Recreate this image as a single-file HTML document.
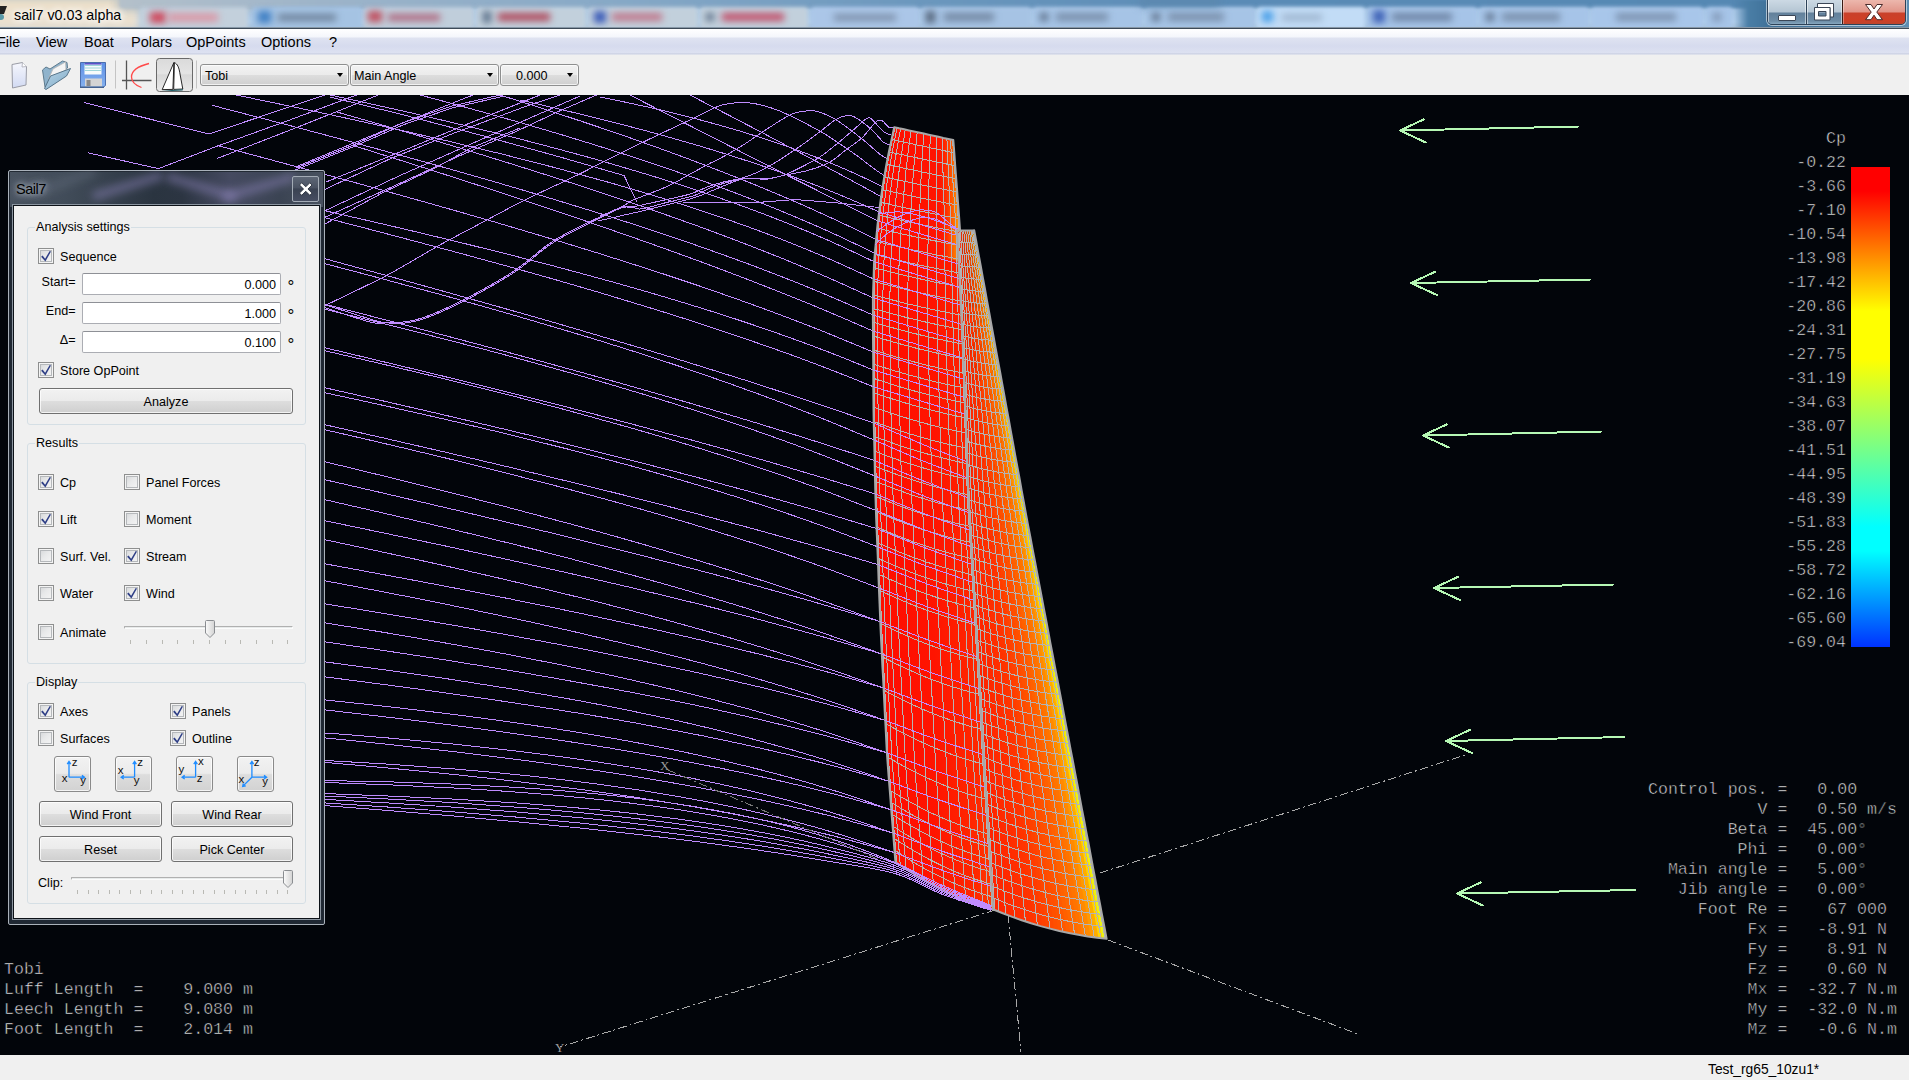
<!DOCTYPE html>
<html lang="en">
<head>
<meta charset="utf-8">
<title>sail7 v0.03 alpha</title>
<style>
*{box-sizing:border-box;margin:0;padding:0}
html,body{width:1909px;height:1080px;overflow:hidden;background:#f0f0f0;font-family:"Liberation Sans",sans-serif;color:#000}
.abs{position:absolute}
#titlebar{position:absolute;left:0;top:0;width:1909px;height:29px;overflow:hidden;
  background:linear-gradient(180deg,#7fa3c4 0,#8fb2d3 7px,#a9c8e6 10px,#b3d0ec 22px,#a9c4de 27px,#a9c4de 29px)}
#titlebar .blob{position:absolute;filter:blur(3.5px)}
#titlebar .tab{position:absolute;top:7px;height:22px;border-radius:3px 3px 0 0;filter:blur(2px)}
#titletext{position:absolute;left:14px;top:6px;font-size:14.3px;line-height:18px;color:#000;white-space:nowrap;text-shadow:0 0 6px #fff,0 0 8px #fff,0 0 10px #fff}
#menubar{position:absolute;left:0;top:29px;width:1909px;height:26px;
  background:linear-gradient(180deg,#ffffff 0,#f4f6fb 8px,#dfe3f1 9px,#d6dbee 17px,#dde1f1 24px,#c3c9dc 25px,#f8f8fa 26px)}
#menubar span{position:absolute;top:4px;font-size:14.5px;line-height:18px;white-space:nowrap}
#toolbar{position:absolute;left:0;top:55px;width:1909px;height:40px;background:#f0f0f0}
.combo{position:absolute;top:9px;height:22px;border:1px solid #8e8f8f;border-radius:3px;
  background:linear-gradient(180deg,#f2f2f2 0,#ebebeb 50%,#dddddd 51%,#cfcfcf 100%);font-size:12.6px;line-height:22px;white-space:nowrap;box-shadow:inset 0 0 0 1px rgba(255,255,255,.7)}
.combo i{position:absolute;top:8px;width:0;height:0;border-left:3.5px solid transparent;border-right:3.5px solid transparent;border-top:4.5px solid #000}
#canvas{position:absolute;left:0;top:95px;width:1909px;height:960px;background:#02050a;overflow:hidden}
#statusbar{position:absolute;left:0;top:1055px;width:1909px;height:25px;background:#f0f0f0;font-size:13.8px}
.mono{font-family:"Liberation Mono",monospace;font-size:16.6px;fill:#e8e8e8;stroke:#02050a;stroke-width:.55px;white-space:pre}
/* dialog */
#dlg{position:absolute;left:8px;top:170px;width:317px;height:755px;border:1px solid #a9b1ba;border-radius:2px;overflow:hidden;
 background:linear-gradient(#1f2833,#1f2833) no-repeat 0 36px/100% 100%,linear-gradient(90deg,#48525f 0,#414c59 18%,#2a3440 46%,#2c3542 55%,#454a60 70%,#3b4453 86%,#48515f 100%);box-shadow:inset 0 0 0 1px #222a34}
#dlgtitle{position:absolute;left:7px;top:9px;font-size:14.5px;letter-spacing:-.5px;line-height:18px;color:#000;text-shadow:0 0 5px #aeb6c0,0 0 8px #aeb6c0,0 0 12px #8e98a6}
#dlgclose{position:absolute;left:283px;top:5px;width:27px;height:26px;border:1px solid #a3abb5;border-radius:2px;background:linear-gradient(180deg,#5d6675 0,#4a5262 45%,#3a4252 50%,#474e62 100%)}
#dlgbody{position:absolute;left:4px;top:34px;width:307px;height:714px;background:#f0f0f0;border:1px solid #0d1218;outline:1px solid #8b95a0;font-size:12.6px}
.grp{position:absolute;left:14px;width:279px;border:1px solid #d5dfe5;border-radius:3px}
.gt{position:absolute;left:23px;background:#f0f0f0;padding:0 1px;line-height:16px;white-space:nowrap;margin-top:1px}
.cb{position:absolute;width:16px;height:16px;border:1px solid #8e8f8f;background:linear-gradient(135deg,#d2d4d6 0,#e8e9ea 45%,#f6f6f6 100%);box-shadow:inset 0 0 0 1px #f4f4f4,inset 0 0 0 2px #b5b8bb}
.cb svg{position:absolute;left:-1px;top:-1px}
.lb{position:absolute;line-height:16px;white-space:nowrap;margin-top:1px}
.inp{position:absolute;left:70px;width:199px;height:22px;border:1px solid #abadb3;border-top-color:#8e9096;border-radius:2px;background:#fff;text-align:right;padding-right:4px;line-height:23px}
.btn{position:absolute;height:26px;border:1px solid #707070;border-radius:3px;text-align:center;line-height:26px;white-space:nowrap;
  background:linear-gradient(180deg,#f2f2f2 0,#ebebeb 48%,#dddddd 52%,#cfcfcf 100%);box-shadow:inset 0 0 0 1px rgba(255,255,255,.75)}
.vb{position:absolute;top:551px;width:37px;height:36px;border:1px solid #8a8a8a;border-radius:3px;background:linear-gradient(180deg,#f2f2f2 0,#ebebeb 48%,#dddddd 52%,#d2d2d2 100%);box-shadow:inset 0 0 0 1px rgba(255,255,255,.75)}
.vb svg{position:absolute;left:0;top:0}
.trk{position:absolute;height:3px;border:1px solid #b0b0b0;border-bottom-color:#fcfcfc;border-right-color:#fcfcfc;background:#e7eaea;border-radius:1px}
.hdl{position:absolute;width:10px;height:18px}
.tick{position:absolute;width:1px;height:4px;background:#b9b9b4}
.stk{position:absolute;height:9px;background:rgba(140,132,185,.5);filter:blur(4px);transform-origin:0 50%}
</style>
</head>
<body>
<div id="titlebar">
  <div class="blob" style="left:-10px;top:-4px;width:150px;height:36px;background:linear-gradient(180deg,#e9dcc4 0,#efe3cf 50%,#e4dccf 100%);filter:blur(5px)"></div>
  <div class="blob" style="left:118px;top:-4px;width:150px;height:14px;background:#a9b9c6;filter:blur(5px)"></div>
  <div class="abs" style="left:120px;top:-3px;width:1800px;height:11px;background:linear-gradient(90deg,#b4c0ca 0,#9db4c9 200px,#86a8c6 500px,#6b97bd 800px,#5a8bb6 1100px,#5487b2 1700px);filter:blur(1.5px)"></div>
  <div class="tab" style="left:140px;width:108px;background:#c3d0dc"></div>
  <div class="blob" style="left:150px;top:12px;width:16px;height:11px;background:#cf4a5e"></div>
  <div class="blob" style="left:168px;top:13px;width:50px;height:9px;background:#d99aa8"></div>
  <div class="tab" style="left:252px;width:110px;background:#a5c3e3"></div>
  <div class="blob" style="left:258px;top:11px;width:13px;height:12px;background:#3f7fc4"></div>
  <div class="blob" style="left:278px;top:14px;width:58px;height:7px;background:#6f849c"></div>
  <div class="tab" style="left:364px;width:110px;background:#c0cedb"></div>
  <div class="blob" style="left:368px;top:11px;width:14px;height:11px;background:#c05060"></div>
  <div class="blob" style="left:388px;top:14px;width:52px;height:7px;background:#b06a80"></div>
  <div class="tab" style="left:476px;width:110px;background:#c2d0dc"></div>
  <div class="blob" style="left:483px;top:11px;width:8px;height:12px;background:#5a6f88"></div>
  <div class="blob" style="left:498px;top:13px;width:52px;height:8px;background:#b04a5c"></div>
  <div class="tab" style="left:588px;width:110px;background:#c2d0dc"></div>
  <div class="blob" style="left:594px;top:11px;width:12px;height:12px;background:#3b5bb8"></div>
  <div class="blob" style="left:612px;top:13px;width:50px;height:8px;background:#c0788c"></div>
  <div class="tab" style="left:700px;width:108px;background:#c2d0dc"></div>
  <div class="blob" style="left:706px;top:13px;width:8px;height:8px;background:#5d7088"></div>
  <div class="blob" style="left:722px;top:13px;width:62px;height:8px;background:#c2506a"></div>
  <div class="tab" style="left:811px;width:108px;background:#abc6e8"></div>
  <div class="blob" style="left:834px;top:14px;width:62px;height:7px;background:#7f93ad"></div>
  <div class="tab" style="left:921px;width:110px;background:#a6c3e4"></div>
  <div class="blob" style="left:926px;top:11px;width:9px;height:12px;background:#55657a"></div>
  <div class="blob" style="left:944px;top:13px;width:50px;height:8px;background:#7489a4"></div>
  <div class="tab" style="left:1033px;width:110px;background:#a6c4e6"></div>
  <div class="blob" style="left:1040px;top:13px;width:8px;height:8px;background:#5d7088"></div>
  <div class="blob" style="left:1056px;top:13px;width:52px;height:8px;background:#7a90ac"></div>
  <div class="tab" style="left:1145px;width:110px;background:#a6c4e6"></div>
  <div class="blob" style="left:1152px;top:13px;width:8px;height:8px;background:#5d7088"></div>
  <div class="blob" style="left:1168px;top:13px;width:56px;height:8px;background:#7a90ac"></div>
  <div class="blob" style="left:1140px;top:-4px;width:80px;height:10px;background:#5c88ae;filter:blur(4px)"></div>
  <div class="tab" style="left:1257px;width:108px;background:#c2dcf6"></div>
  <div class="blob" style="left:1262px;top:11px;width:11px;height:11px;background:#4aa0e8"></div>
  <div class="blob" style="left:1282px;top:14px;width:40px;height:7px;background:#9fb6d0"></div>
  <div class="tab" style="left:1367px;width:110px;background:#a6c4e8"></div>
  <div class="blob" style="left:1373px;top:10px;width:12px;height:13px;background:#3f63b8"></div>
  <div class="blob" style="left:1392px;top:13px;width:60px;height:8px;background:#6f86a6"></div>
  <div class="tab" style="left:1479px;width:110px;background:#a6c4e8"></div>
  <div class="blob" style="left:1486px;top:13px;width:8px;height:8px;background:#5d7088"></div>
  <div class="blob" style="left:1502px;top:13px;width:58px;height:8px;background:#7a90ac"></div>
  <div class="tab" style="left:1591px;width:112px;background:#a8c6ea"></div>
  <div class="blob" style="left:1616px;top:13px;width:60px;height:8px;background:#7d93b0"></div>
  <div class="tab" style="left:1706px;width:26px;background:#a6c4e8"></div>
  <div class="blob" style="left:1713px;top:13px;width:8px;height:8px;background:#7d93b0"></div>
  <div class="abs" style="left:1734px;top:0;width:180px;height:29px;background:linear-gradient(90deg,rgba(70,120,160,0) 0,#4a7ea6 14px,#3d6f97 40px,#5f8fb3 100%);filter:blur(1px)"></div>
  <div class="abs" style="left:0;top:27px;width:1909px;height:2px;background:linear-gradient(180deg,#8797a6 0,#8797a6 1px,#3d4a58 1px,#3d4a58 2px)"></div>
  <div id="titletext">sail7 v0.03 alpha</div>
  <svg class="abs" style="left:0;top:0" width="14" height="29"><path d="M0 6 L7 6 L4 14 L0 14Z" fill="#222"/><circle cx="1" cy="17" r="3" fill="#5a9aa8"/></svg>
  <!-- window buttons -->
  <div class="abs" style="left:1767px;top:-4px;width:139px;height:29px;border:1px solid #2d4258;border-radius:0 0 5px 5px;overflow:hidden;box-shadow:0 0 0 1px rgba(255,255,255,.55)">
    <div class="abs" style="left:0;top:0;width:38px;height:28px;background:linear-gradient(180deg,#d2dee8 0,#b4c5d3 15px,#62809b 16px,#6d8ca6 24px,#8fb0c8 28px);box-shadow:inset 0 0 0 1px rgba(255,255,255,.5)"></div>
    <div class="abs" style="left:38px;top:0;width:1px;height:28px;background:#2d4258"></div>
    <div class="abs" style="left:39px;top:0;width:35px;height:28px;background:linear-gradient(180deg,#d2dee8 0,#b4c5d3 15px,#62809b 16px,#6d8ca6 24px,#8fb0c8 28px);box-shadow:inset 0 0 0 1px rgba(255,255,255,.5)"></div>
    <div class="abs" style="left:74px;top:0;width:1px;height:28px;background:#3a1a14"></div>
    <div class="abs" style="left:75px;top:0;width:63px;height:28px;background:linear-gradient(180deg,#efc0b6 0,#e19488 15px,#c9412b 16px,#cf3f26 23px,#b9462f 28px);box-shadow:inset 0 0 0 1px rgba(255,255,255,.35)"></div>
    <svg class="abs" style="left:0;top:0" width="139" height="29" viewBox="0 0 139 29">
      <rect x="10.5" y="18.5" width="17" height="5" rx="0.5" fill="#fff" stroke="#3b4656" stroke-width="1"/>
      <path d="M49.500 6.500h16v13.500h-3.500v-9.500h-12.500z" fill="#fff" stroke="#3b4656" stroke-width="1" stroke-linejoin="round"/>
      <path d="M46.500 10.500h15.500v12.500h-15.500z M50.500 14.500v4.500h7.500v-4.500z" fill="#fff" fill-rule="evenodd" stroke="#3b4656" stroke-width="1" stroke-linejoin="round"/>
      <path d="M97.500 7.500h5.500l3 4.500 3-4.500h5.500l-5.700 7.600 5.700 7.600h-5.500l-3-4.500-3 4.500h-5.500l5.700-7.600z" fill="#fff" stroke="#4a2a2a" stroke-width="1" stroke-linejoin="round"/>
    </svg>
  </div>
</div>
<div id="menubar">
  <span style="left:-3px">File</span><span style="left:36px">View</span><span style="left:84px">Boat</span><span style="left:131px">Polars</span><span style="left:186px">OpPoints</span><span style="left:261px">Options</span><span style="left:329px">?</span>
</div>
<div id="toolbar">
  <svg class="abs" style="left:0;top:0" width="200" height="40" viewBox="0 55 200 40">
    <defs>
      <linearGradient id="gdoc" x1="0" y1="0" x2="0" y2="1"><stop offset="0" stop-color="#f6f7fd"/><stop offset="1" stop-color="#d2daf2"/></linearGradient>
      <linearGradient id="gfold" x1="0" y1="0" x2="1" y2="1"><stop offset="0" stop-color="#b9d6e8"/><stop offset="1" stop-color="#7fa9c6"/></linearGradient>
      <linearGradient id="gflop" x1="0" y1="0" x2="0" y2="1"><stop offset="0" stop-color="#5d8fe6"/><stop offset="1" stop-color="#86b2ee"/></linearGradient>
      <linearGradient id="gbtn" x1="0" y1="0" x2="0" y2="1"><stop offset="0" stop-color="#dadada"/><stop offset=".45" stop-color="#e4e4e4"/><stop offset=".5" stop-color="#d8d8d8"/><stop offset="1" stop-color="#e9e9e9"/></linearGradient>
    </defs>
    <!-- new -->
    <path d="M12 64.500 L22.500 62.500 L26.500 66.500 L26 85 L12.500 88 Z" fill="url(#gdoc)" stroke="#9a9ca6" stroke-width="1"/>
    <path d="M22.500 62.500 L22 67 L26.500 66.500" fill="#fff" stroke="#a8aab4" stroke-width=".8"/>
    <!-- open -->
    <path d="M42.500 70 L46 67 L50 69 L62.500 61 L67 62.500 L67.500 68 L45 87 Z" fill="#8fb3cc" stroke="#5f7b8e" stroke-width="1"/>
    <path d="M48.500 79 L53 69 L65.500 62 L66 70 Z" fill="#f4f4f4" stroke="#b8b8b8" stroke-width=".8"/>
    <path d="M44.500 88.500 L50.500 76 L70.500 68.500 L66.500 76 L46 89.500 Z" fill="url(#gfold)" stroke="#56748a" stroke-width="1"/>
    <!-- save -->
    <path d="M80.500 62.500 H105.500 V85.500 L103 87.500 H80.500 Z" fill="url(#gflop)" stroke="#4c6fae" stroke-width="1"/>
    <rect x="84.500" y="63" width="17" height="11.500" fill="#f7fbfb"/>
    <path d="M84.500 65.500h17M84.500 68h17M84.500 70.500h17" stroke="#9fd6da" stroke-width="1"/>
    <rect x="84.500" y="63" width="17" height="1.600" fill="#5a52c8"/>
    <rect x="85" y="78.500" width="17" height="8" fill="#d4d4d4"/>
    <rect x="86.500" y="80" width="4" height="6" fill="#8a8a8a"/>
    <rect x="80" y="86.500" width="24" height="1.500" fill="#44628f"/>
    <!-- sep -->
    <path d="M115.500 60.500V88.500" stroke="#c4c4c4" stroke-width="1"/>
    <!-- polar -->
    <path d="M126.500 60.500V89.500M122 80.500H151.500" stroke="#555" stroke-width="1.300" fill="none"/>
    <path d="M149 63.500 C139 66 131.500 70 131.500 77 C131.500 83 136 85.500 141.500 87.500" stroke="#ff4a4a" stroke-width="1.300" fill="none"/>
    <!-- sail button -->
    <rect x="156.500" y="58.500" width="36" height="33" rx="3" fill="url(#gbtn)" stroke="#6a6a6a" stroke-width="1"/>
    <path d="M173.900 62.500 L162.200 89.600 L172.900 89.400 Z" fill="#fff" stroke="#111" stroke-width=".9" stroke-linejoin="round"/>
    <path d="M174.400 62.600 C177.500 64 179 67 180.200 75 L182.800 89 L173.700 89.400 Z" fill="#fff" stroke="#111" stroke-width=".9" stroke-linejoin="round"/>
    <path d="M161.800 90.300 L172 90 L183.200 89.300 L182.500 90.600 L172 91 Z" fill="#1d5d66"/>
    <path d="M196.500 60.500V88.500" stroke="#c4c4c4" stroke-width="1"/>
  </svg>
  <div class="combo" style="left:200px;width:149px;padding-left:4px">Tobi<i style="left:136px"></i></div>
  <div class="combo" style="left:350px;width:149px;padding-left:3px">Main Angle<i style="left:136px"></i></div>
  <div class="combo" style="left:500px;width:79px;padding-left:15px">0.000<i style="left:66px"></i></div>
</div>
<div id="statusbar"><span class="abs" style="left:1708px;top:7px;line-height:16px;white-space:nowrap">Test_rg65_10zu1*</span></div>
<div id="canvas">
<svg id="cv" width="1909" height="960" viewBox="0 95 1909 960" style="position:absolute;left:0;top:0">
<defs>
<linearGradient id="gleg" x1="0" y1="0" x2="0" y2="1">
<stop offset="0" stop-color="#ff0000"/><stop offset="0.05" stop-color="#ff0000"/>
<stop offset="0.30" stop-color="#ffff00"/><stop offset="0.40" stop-color="#ffff00"/>
<stop offset="0.75" stop-color="#00ffff"/><stop offset="0.80" stop-color="#00ffff"/>
<stop offset="1" stop-color="#0032ff"/></linearGradient>
<linearGradient id="gs1" gradientUnits="userSpaceOnUse" x1="873" y1="0" x2="995" y2="0">
<stop offset="0" stop-color="#ff0c00"/><stop offset="0.5" stop-color="#ff1400"/><stop offset="0.85" stop-color="#ff2800"/><stop offset="1" stop-color="#ff3c00"/></linearGradient>
<linearGradient id="gs1b" gradientUnits="userSpaceOnUse" x1="940" y1="0" x2="960" y2="0">
<stop offset="0" stop-color="#ff3000" stop-opacity="0"/><stop offset="0.6" stop-color="#ff6a00" stop-opacity=".8"/><stop offset="1" stop-color="#ffa800"/></linearGradient>
</defs>
<path d="M894.7 852.6C884.2 849.8 852.6 840.8 831.6 835.5C810.6 830.3 789.6 825.6 768.6 821.1C747.5 816.7 726.5 812.7 705.5 808.9C684.5 805.1 663.5 801.7 642.5 798.4C621.5 795.1 600.4 792.2 579.4 789.3C558.4 786.5 537.4 783.9 516.4 781.4C495.4 778.9 474.3 776.6 453.3 774.4C432.3 772.2 411.3 770.2 390.3 768.2C369.3 766.2 348.3 764.4 327.2 762.6C306.2 760.8 285.2 759.1 264.2 757.5C243.2 755.8 222.2 754.3 201.1 752.8C180.1 751.3 159.1 749.8 138.1 748.4C117.1 747.0 96.1 745.6 75.0 744.3C54.0 742.9 22.5 741.0 12.0 740.4M894.7 852.6C884.2 849.1 852.6 838.1 831.6 831.9C810.6 825.6 789.6 820.1 768.6 815.1C747.5 810.0 726.5 805.6 705.5 801.5C684.5 797.5 663.5 793.9 642.5 790.6C621.5 787.3 600.4 784.4 579.4 781.8C558.4 779.1 537.4 776.8 516.4 774.6C495.4 772.5 474.3 770.6 453.3 768.9C432.3 767.2 411.3 765.7 390.3 764.3C369.3 762.9 348.3 761.7 327.2 760.6C306.2 759.5 285.2 758.5 264.2 757.6C243.2 756.7 222.2 755.9 201.1 755.2C180.1 754.5 159.1 753.9 138.1 753.3C117.1 752.8 96.1 752.3 75.0 751.9C54.0 751.4 22.5 750.9 12.0 750.7M893.1 833.0C882.6 830.1 851.2 821.2 830.2 815.9C809.2 810.6 788.2 805.8 767.2 801.2C746.3 796.7 725.3 792.5 704.3 788.6C683.3 784.6 662.3 781.0 641.4 777.6C620.4 774.1 599.4 770.9 578.4 767.9C557.4 764.8 536.5 762.0 515.5 759.3C494.5 756.6 473.5 754.0 452.6 751.5C431.6 749.1 410.6 746.8 389.6 744.5C368.6 742.3 347.7 740.1 326.7 738.1C305.7 736.0 284.7 734.0 263.7 732.1C242.8 730.1 221.8 728.3 200.8 726.5C179.8 724.6 158.9 722.9 137.9 721.2C116.9 719.4 95.9 717.7 74.9 716.1C54.0 714.4 22.5 712.0 12.0 711.2M893.1 833.0C882.6 829.5 851.2 818.5 830.2 812.1C809.2 805.8 788.2 800.2 767.2 795.0C746.3 789.7 725.3 785.1 704.3 780.8C683.3 776.4 662.3 772.6 641.4 769.0C620.4 765.4 599.4 762.2 578.4 759.2C557.4 756.2 536.5 753.5 515.5 750.9C494.5 748.4 473.5 746.1 452.6 744.0C431.6 741.9 410.6 739.9 389.6 738.1C368.6 736.3 347.7 734.6 326.7 733.1C305.7 731.5 284.7 730.1 263.7 728.7C242.8 727.3 221.8 726.1 200.8 724.9C179.8 723.7 158.9 722.6 137.9 721.5C116.9 720.5 95.9 719.5 74.9 718.5C54.0 717.6 22.5 716.3 12.0 715.9M891.3 809.8C880.8 806.9 849.4 797.9 828.5 792.6C807.5 787.2 786.6 782.3 765.7 777.7C744.7 773.0 723.8 768.8 702.9 764.7C681.9 760.6 661.0 756.8 640.1 753.2C619.1 749.5 598.2 746.1 577.3 742.9C556.3 739.6 535.4 736.5 514.4 733.6C493.5 730.6 472.6 727.8 451.6 725.1C430.7 722.4 409.8 719.8 388.8 717.3C367.9 714.8 347.0 712.4 326.0 710.0C305.1 707.6 284.2 705.4 263.2 703.1C242.3 700.9 221.4 698.8 200.4 696.6C179.5 694.5 158.5 692.5 137.6 690.4C116.7 688.4 95.7 686.4 74.8 684.4C53.9 682.5 22.5 679.6 12.0 678.6M891.3 809.8C880.8 806.3 849.4 795.2 828.5 788.8C807.5 782.3 786.6 776.5 765.7 771.1C744.7 765.6 723.8 760.7 702.9 756.1C681.9 751.5 661.0 747.3 640.1 743.3C619.1 739.3 598.2 735.7 577.3 732.2C556.3 728.8 535.4 725.6 514.4 722.6C493.5 719.6 472.6 716.9 451.6 714.2C430.7 711.6 409.8 709.1 388.8 706.7C367.9 704.4 347.0 702.1 326.0 700.0C305.1 697.9 284.2 695.9 263.2 693.9C242.3 692.0 221.4 690.1 200.4 688.3C179.5 686.5 158.5 684.8 137.6 683.1C116.7 681.5 95.7 679.9 74.8 678.3C53.9 676.7 22.5 674.5 12.0 673.7M889.0 781.3C878.6 778.4 847.3 769.4 826.4 764.0C805.5 758.6 784.6 753.7 763.7 748.9C742.9 744.2 722.0 739.7 701.1 735.5C680.2 731.3 659.3 727.3 638.4 723.5C617.6 719.7 596.7 716.1 575.8 712.7C554.9 709.2 534.0 705.9 513.2 702.7C492.3 699.5 471.4 696.5 450.5 693.6C429.6 690.6 408.8 687.8 387.9 685.0C367.0 682.2 346.1 679.5 325.2 676.9C304.3 674.3 283.5 671.7 262.6 669.2C241.7 666.7 220.8 664.3 199.9 661.9C179.1 659.5 158.2 657.1 137.3 654.8C116.4 652.5 95.5 650.2 74.6 647.9C53.8 645.6 22.4 642.3 12.0 641.2M889.0 781.3C878.6 777.8 847.3 766.7 826.4 760.1C805.5 753.6 784.6 747.6 763.7 742.0C742.9 736.3 722.0 731.1 701.1 726.2C680.2 721.2 659.3 716.7 638.4 712.4C617.6 708.0 596.7 704.0 575.8 700.1C554.9 696.3 534.0 692.7 513.2 689.2C492.3 685.7 471.4 682.5 450.5 679.3C429.6 676.1 408.8 673.2 387.9 670.3C367.0 667.4 346.1 664.6 325.2 661.9C304.3 659.2 283.5 656.6 262.6 654.1C241.7 651.6 220.8 649.2 199.9 646.8C179.1 644.4 158.2 642.1 137.3 639.8C116.4 637.5 95.5 635.3 74.6 633.1C53.8 630.9 22.4 627.8 12.0 626.7M886.9 752.8C876.4 749.9 845.2 740.9 824.4 735.4C803.5 730.0 782.7 724.9 761.9 720.0C741.0 715.1 720.2 710.5 699.4 706.0C678.6 701.6 657.7 697.4 636.9 693.4C616.1 689.3 595.2 685.4 574.4 681.7C553.6 677.9 532.7 674.3 511.9 670.8C491.1 667.3 470.3 663.9 449.4 660.6C428.6 657.3 407.8 654.1 386.9 651.0C366.1 647.8 345.3 644.8 324.4 641.8C303.6 638.8 282.8 635.8 262.0 632.9C241.1 630.0 220.3 627.2 199.5 624.4C178.6 621.5 157.8 618.8 137.0 616.0C116.1 613.3 95.3 610.6 74.5 607.9C53.7 605.2 22.4 601.2 12.0 599.9M886.9 752.8C876.4 749.2 845.2 738.2 824.4 731.5C803.5 724.8 782.7 718.6 761.9 712.7C741.0 706.8 720.2 701.4 699.4 696.1C678.6 690.8 657.7 685.9 636.9 681.2C616.1 676.4 595.2 671.9 574.4 667.6C553.6 663.3 532.7 659.2 511.9 655.2C491.1 651.2 470.3 647.4 449.4 643.7C428.6 640.0 407.8 636.4 386.9 632.9C366.1 629.4 345.3 626.1 324.4 622.8C303.6 619.4 282.8 616.2 262.0 613.1C241.1 609.9 220.3 606.8 199.5 603.8C178.6 600.8 157.8 597.8 137.0 594.8C116.1 591.9 95.3 589.0 74.5 586.1C53.7 583.3 22.4 579.1 12.0 577.7M885.2 720.4C874.8 717.5 843.6 708.5 822.8 703.0C802.0 697.4 781.3 692.2 760.5 687.2C739.7 682.2 718.9 677.4 698.1 672.8C677.3 668.2 656.5 663.8 635.7 659.5C614.9 655.2 594.1 651.1 573.3 647.1C552.6 643.1 531.8 639.3 511.0 635.5C490.2 631.7 469.4 628.0 448.6 624.4C427.8 620.8 407.0 617.3 386.2 613.8C365.4 610.4 344.7 607.0 323.9 603.7C303.1 600.3 282.3 597.0 261.5 593.8C240.7 590.5 219.9 587.3 199.1 584.2C178.3 581.0 157.5 577.9 136.7 574.8C116.0 571.7 95.2 568.6 74.4 565.5C53.6 562.5 22.4 558.0 12.0 556.5M885.2 720.4C874.8 716.8 843.6 705.7 822.8 698.9C802.0 692.1 781.3 685.8 760.5 679.7C739.7 673.6 718.9 667.8 698.1 662.2C677.3 656.7 656.5 651.4 635.7 646.3C614.9 641.2 594.1 636.3 573.3 631.5C552.6 626.8 531.8 622.2 511.0 617.8C490.2 613.3 469.4 609.0 448.6 604.8C427.8 600.5 407.0 596.5 386.2 592.4C365.4 588.4 344.7 584.5 323.9 580.6C303.1 576.7 282.3 572.9 261.5 569.2C240.7 565.5 219.9 561.8 199.1 558.1C178.3 554.5 157.5 550.9 136.7 547.4C116.0 543.8 95.2 540.3 74.4 536.8C53.6 533.3 22.4 528.2 12.0 526.5M883.6 688.0C873.2 685.1 842.1 676.0 821.3 670.3C800.6 664.7 779.8 659.3 759.0 654.1C738.3 648.9 717.5 643.9 696.8 639.1C676.0 634.2 655.3 629.5 634.5 625.0C613.8 620.4 593.0 616.0 572.3 611.6C551.5 607.3 530.8 603.1 510.0 598.9C489.3 594.8 468.5 590.7 447.8 586.7C427.0 582.7 406.3 578.8 385.5 575.0C364.8 571.1 344.0 567.3 323.3 563.5C302.5 559.7 281.8 556.0 261.0 552.3C240.3 548.6 219.5 545.0 198.8 541.4C178.0 537.8 157.3 534.2 136.5 530.6C115.8 527.0 95.0 523.5 74.3 520.0C53.5 516.5 22.4 511.2 12.0 509.5M883.6 688.0C873.2 684.4 842.1 673.2 821.3 666.3C800.6 659.4 779.8 652.8 759.0 646.5C738.3 640.2 717.5 634.2 696.8 628.4C676.0 622.5 655.3 616.9 634.5 611.5C613.8 606.0 593.0 600.8 572.3 595.7C551.5 590.5 530.8 585.6 510.0 580.7C489.3 575.8 468.5 571.1 447.8 566.4C427.0 561.7 406.3 557.2 385.5 552.7C364.8 548.2 344.0 543.8 323.3 539.4C302.5 535.1 281.8 530.8 261.0 526.5C240.3 522.3 219.5 518.1 198.8 514.0C178.0 509.8 157.3 505.7 136.5 501.6C115.8 497.5 95.0 493.5 74.3 489.5C53.5 485.5 22.4 479.5 12.0 477.5M881.8 654.0C871.5 651.0 840.4 641.8 819.7 635.9C799.0 630.1 778.3 624.5 757.6 619.1C736.9 613.6 716.1 608.4 695.4 603.2C674.7 598.0 654.0 593.0 633.3 588.1C612.6 583.2 591.9 578.4 571.2 573.7C550.5 569.0 529.8 564.3 509.0 559.8C488.3 555.2 467.6 550.7 446.9 546.3C426.2 541.9 405.5 537.5 384.8 533.2C364.1 528.8 343.4 524.6 322.7 520.3C301.9 516.1 281.2 511.9 260.5 507.7C239.8 503.5 219.1 499.4 198.4 495.3C177.7 491.1 157.0 487.1 136.3 483.0C115.6 478.9 94.8 474.9 74.1 470.8C53.4 466.8 22.4 460.8 12.0 458.8M881.8 654.0C871.5 650.3 840.4 639.0 819.7 631.9C799.0 624.9 778.3 618.2 757.6 611.7C736.9 605.2 716.1 599.0 695.4 593.0C674.7 586.9 654.0 581.1 633.3 575.4C612.6 569.7 591.9 564.2 571.2 558.9C550.5 553.5 529.8 548.2 509.0 543.1C488.3 538.0 467.6 532.9 446.9 528.0C426.2 523.0 405.5 518.2 384.8 513.4C364.1 508.6 343.4 503.9 322.7 499.2C301.9 494.6 281.2 490.0 260.5 485.4C239.8 480.9 219.1 476.4 198.4 471.9C177.7 467.4 157.0 463.0 136.3 458.6C115.6 454.2 94.8 449.9 74.1 445.5C53.4 441.2 22.4 434.7 12.0 432.6M880.3 621.7C869.9 618.6 838.9 609.2 818.2 603.2C797.6 597.2 776.9 591.5 756.2 585.8C735.5 580.1 714.9 574.5 694.2 569.1C673.5 563.6 652.9 558.3 632.2 553.1C611.5 547.8 590.8 542.6 570.2 537.5C549.5 532.5 528.8 527.4 508.1 522.5C487.5 517.5 466.8 512.6 446.1 507.8C425.5 502.9 404.8 498.1 384.1 493.3C363.4 488.5 342.8 483.8 322.1 479.1C301.4 474.4 280.7 469.7 260.1 465.1C239.4 460.4 218.7 455.8 198.1 451.2C177.4 446.6 156.7 442.0 136.0 437.5C115.4 432.9 94.7 428.4 74.0 423.8C53.3 419.3 22.3 412.5 12.0 410.3M880.3 621.7C869.9 618.0 838.9 606.5 818.2 599.3C797.6 592.1 776.9 585.3 756.2 578.6C735.5 572.0 714.9 565.6 694.2 559.3C673.5 553.1 652.9 547.1 632.2 541.2C611.5 535.2 590.8 529.5 570.2 523.9C549.5 518.3 528.8 512.8 508.1 507.4C487.5 502.0 466.8 496.7 446.1 491.5C425.5 486.3 404.8 481.1 384.1 476.1C363.4 471.0 342.8 466.0 322.1 461.1C301.4 456.1 280.7 451.2 260.1 446.4C239.4 441.5 218.7 436.7 198.1 432.0C177.4 427.2 156.7 422.5 136.0 417.8C115.4 413.1 94.7 408.4 74.0 403.7C53.3 399.1 22.3 392.2 12.0 389.8M878.9 588.0C868.6 584.2 837.7 572.3 817.0 564.9C796.4 557.5 775.7 550.6 755.1 543.8C734.4 537.1 713.8 530.7 693.2 524.4C672.5 518.2 651.9 512.2 631.2 506.4C610.6 500.6 590.0 494.9 569.3 489.4C548.7 483.9 528.0 478.6 507.4 473.4C486.8 468.1 466.1 463.0 445.5 458.0C424.8 453.0 404.2 448.1 383.5 443.3C362.9 438.4 342.3 433.7 321.6 429.0C301.0 424.3 280.3 419.7 259.7 415.1C239.1 410.6 218.4 406.0 197.8 401.6C177.1 397.1 156.5 392.7 135.8 388.3C115.2 383.9 94.6 379.5 73.9 375.2C53.3 370.8 22.3 364.4 12.0 362.2M878.0 564.7C867.7 561.6 836.8 552.3 816.2 546.4C795.5 540.5 774.9 534.7 754.3 529.1C733.7 523.4 713.1 518.0 692.5 512.6C671.8 507.2 651.2 501.9 630.6 496.8C610.0 491.6 589.4 486.5 568.7 481.5C548.1 476.4 527.5 471.5 506.9 466.6C486.3 461.7 465.6 456.9 445.0 452.1C424.4 447.3 403.8 442.6 383.2 437.9C362.5 433.2 341.9 428.6 321.3 423.9C300.7 419.3 280.1 414.7 259.4 410.2C238.8 405.6 218.2 401.1 197.6 396.6C177.0 392.0 156.3 387.5 135.7 383.1C115.1 378.6 94.5 374.1 73.9 369.7C53.2 365.2 22.3 358.6 12.0 356.4M877.3 546.7C867.0 542.8 836.1 530.8 815.5 523.4C794.9 516.0 774.3 509.1 753.7 502.4C733.1 495.7 712.5 489.4 691.9 483.3C671.3 477.1 650.7 471.3 630.1 465.6C609.5 460.0 588.9 454.5 568.3 449.2C547.7 443.9 527.1 438.8 506.5 433.8C485.9 428.8 465.3 424.0 444.7 419.2C424.1 414.5 403.5 409.9 382.9 405.3C362.3 400.8 341.6 396.3 321.0 391.9C300.4 387.6 279.8 383.3 259.2 379.0C238.6 374.8 218.0 370.6 197.4 366.4C176.8 362.3 156.2 358.2 135.6 354.1C115.0 350.1 94.4 346.1 73.8 342.1C53.2 338.1 22.3 332.2 12.0 330.2M876.6 528.6C866.3 525.5 835.4 516.0 814.9 510.0C794.3 504.0 773.7 498.2 753.1 492.5C732.5 486.8 711.9 481.3 691.3 475.8C670.8 470.4 650.2 465.1 629.6 459.9C609.0 454.7 588.4 449.5 567.8 444.5C547.2 439.4 526.7 434.5 506.1 429.6C485.5 424.7 464.9 419.8 444.3 415.0C423.7 410.2 403.1 405.5 382.6 400.8C362.0 396.1 341.4 391.5 320.8 386.8C300.2 382.2 279.6 377.6 259.0 373.1C238.4 368.5 217.9 364.0 197.3 359.4C176.7 354.9 156.1 350.4 135.5 346.0C114.9 341.5 94.3 337.0 73.8 332.6C53.2 328.2 22.3 321.5 12.0 319.3M875.9 510.5C865.6 506.6 834.8 494.4 814.2 486.8C793.6 479.3 773.1 472.2 752.5 465.4C731.9 458.5 711.4 452.0 690.8 445.6C670.2 439.3 649.6 433.3 629.1 427.4C608.5 421.5 587.9 415.8 567.4 410.3C546.8 404.7 526.2 399.4 505.7 394.1C485.1 388.9 464.5 383.8 444.0 378.7C423.4 373.7 402.8 368.8 382.2 364.0C361.7 359.2 341.1 354.4 320.5 349.8C300.0 345.1 279.4 340.5 258.8 335.9C238.3 331.4 217.7 326.9 197.1 322.5C176.6 318.0 156.0 313.6 135.4 309.3C114.8 304.9 94.3 300.6 73.7 296.3C53.1 292.0 22.3 285.7 12.0 283.5M875.4 494.0C865.1 490.8 834.3 481.1 813.7 475.0C793.1 468.8 772.6 462.8 752.0 456.9C731.5 451.1 710.9 445.3 690.4 439.7C669.8 434.1 649.2 428.6 628.7 423.2C608.1 417.7 587.6 412.4 567.0 407.1C546.5 401.9 525.9 396.7 505.4 391.5C484.8 386.4 464.2 381.3 443.7 376.3C423.1 371.3 402.6 366.3 382.0 361.4C361.5 356.4 340.9 351.5 320.3 346.7C299.8 341.8 279.2 337.0 258.7 332.1C238.1 327.3 217.6 322.6 197.0 317.8C176.5 313.0 155.9 308.3 135.3 303.6C114.8 298.8 94.2 294.1 73.7 289.4C53.1 284.7 22.3 277.7 12.0 275.4M875.0 476.0C864.7 471.9 833.9 459.4 813.3 451.6C792.8 443.8 772.2 436.5 751.7 429.3C731.1 422.2 710.6 415.4 690.0 408.8C669.5 402.2 648.9 395.9 628.4 389.8C607.9 383.6 587.3 377.7 566.8 371.9C546.2 366.1 525.7 360.5 505.1 354.9C484.6 349.4 464.0 344.1 443.5 338.8C422.9 333.5 402.4 328.3 381.8 323.2C361.3 318.1 340.7 313.1 320.2 308.2C299.7 303.3 279.1 298.4 258.6 293.6C238.0 288.8 217.5 284.0 196.9 279.3C176.4 274.6 155.8 270.0 135.3 265.3C114.7 260.7 94.2 256.1 73.6 251.6C53.1 247.0 22.3 240.3 12.0 238.0M874.6 460.5C864.3 457.2 833.5 447.0 813.0 440.5C792.5 434.0 771.9 427.7 751.4 421.4C730.8 415.2 710.3 409.1 689.8 403.1C669.2 397.1 648.7 391.2 628.2 385.4C607.6 379.6 587.1 373.9 566.5 368.3C546.0 362.6 525.5 357.0 504.9 351.5C484.4 346.0 463.8 340.5 443.3 335.1C422.8 329.6 402.2 324.3 381.7 318.9C361.2 313.6 340.6 308.3 320.1 303.0C299.5 297.7 279.0 292.5 258.5 287.2C237.9 282.0 217.4 276.8 196.8 271.6C176.3 266.4 155.8 261.3 135.2 256.1C114.7 251.0 94.2 245.9 73.6 240.8C53.1 235.6 22.3 228.0 12.0 225.5M874.2 440.0C863.9 435.8 833.1 422.7 812.6 414.6C792.0 406.4 771.5 398.7 751.0 391.3C730.5 383.8 709.9 376.6 689.4 369.7C668.9 362.7 648.4 356.1 627.8 349.5C607.3 343.0 586.8 336.7 566.2 330.6C545.7 324.4 525.2 318.4 504.7 312.5C484.1 306.6 463.6 300.9 443.1 295.2C422.5 289.6 402.0 284.0 381.5 278.6C361.0 273.1 340.4 267.7 319.9 262.4C299.4 257.1 278.9 251.9 258.3 246.7C237.8 241.5 217.3 236.4 196.7 231.3C176.2 226.2 155.7 221.2 135.2 216.2C114.6 211.2 94.1 206.2 73.6 201.3C53.1 196.3 22.3 189.0 12.0 186.5M873.8 423.0C863.5 419.5 832.7 408.8 812.2 402.0C791.7 395.1 771.2 388.5 750.7 381.9C730.1 375.4 709.6 369.0 689.1 362.7C668.6 356.3 648.1 350.2 627.5 344.1C607.0 337.9 586.5 331.9 566.0 326.0C545.5 320.0 525.0 314.2 504.4 308.4C483.9 302.5 463.4 296.8 442.9 291.1C422.4 285.4 401.8 279.7 381.3 274.1C360.8 268.4 340.3 262.9 319.8 257.3C299.3 251.8 278.7 246.2 258.2 240.7C237.7 235.2 217.2 229.8 196.7 224.3C176.1 218.9 155.6 213.5 135.1 208.0C114.6 202.6 94.1 197.2 73.6 191.9C53.0 186.5 22.3 178.4 12.0 175.8M873.3 386.7C865.7 383.7 842.9 374.4 827.7 368.6C812.5 362.7 797.3 357.1 782.1 351.6C766.9 346.2 751.7 340.9 736.5 335.7C721.3 330.6 706.1 325.6 690.9 320.7C675.7 315.8 660.5 311.0 645.3 306.4C630.1 301.7 614.9 297.1 599.7 292.6C584.5 288.1 569.3 283.7 554.1 279.3C538.9 275.0 523.7 270.7 508.4 266.5C493.2 262.3 478.0 258.1 462.8 254.0C447.6 249.9 432.4 245.8 417.2 241.8C402.0 237.7 386.8 233.7 371.6 229.8C356.4 225.8 333.6 220.0 326.0 218.0M873.2 370.0C865.6 366.9 842.8 357.5 827.6 351.7C812.4 345.8 797.2 340.3 782.0 334.9C766.8 329.5 751.6 324.3 736.4 319.3C721.2 314.3 706.0 309.5 690.8 304.9C675.6 300.2 660.4 295.7 645.2 291.3C630.0 286.8 614.8 282.6 599.6 278.4C584.4 274.2 569.2 270.1 554.0 266.1C538.8 262.1 523.6 258.2 508.4 254.4C493.2 250.5 478.0 246.8 462.8 243.1C447.6 239.4 432.4 235.7 417.2 232.1C402.0 228.5 386.8 224.9 371.6 221.4C356.4 217.9 333.6 212.7 326.0 211.0M873.1 352.0C864.0 348.3 836.6 336.7 818.4 329.5C800.2 322.3 781.9 315.4 763.7 308.7C745.5 302.0 727.2 295.6 709.0 289.3C690.8 283.0 672.5 277.0 654.3 271.0C636.0 265.0 617.8 259.3 599.6 253.6C581.3 247.9 563.1 242.3 544.9 236.9C526.6 231.4 508.4 226.0 490.2 220.7C471.9 215.4 453.7 210.2 435.4 205.0C417.2 199.9 399.0 194.8 380.7 189.7C362.5 184.6 344.3 179.6 326.0 174.7C307.8 169.7 289.5 164.8 271.3 159.9C253.1 155.0 225.7 147.7 216.6 145.3M873.0 331.0C865.8 327.9 844.1 318.4 829.6 312.3C815.2 306.2 800.7 300.3 786.3 294.6C771.8 288.8 757.4 283.2 742.9 277.6C728.5 272.1 714.0 266.7 699.6 261.3C685.1 256.0 670.7 250.8 656.2 245.6C641.7 240.4 627.3 235.4 612.8 230.4C598.4 225.3 583.9 220.4 569.5 215.5C555.0 210.6 540.6 205.8 526.1 201.0C511.7 196.2 497.2 191.5 482.8 186.7C468.3 182.0 453.9 177.4 439.4 172.7C425.0 168.1 410.5 163.5 396.1 158.9C381.6 154.4 359.9 147.6 352.7 145.3M872.9 315.0C863.7 311.0 836.2 298.8 817.8 291.2C799.5 283.6 781.1 276.4 762.8 269.4C744.5 262.4 726.1 255.8 707.8 249.3C689.4 242.8 671.1 236.6 652.7 230.5C634.4 224.5 616.0 218.6 597.7 212.8C579.3 207.1 561.0 201.5 542.6 196.0C524.3 190.5 505.9 185.1 487.6 179.8C469.3 174.5 450.9 169.3 432.6 164.2C414.2 159.1 395.9 154.0 377.5 149.0C359.2 144.0 340.8 139.1 322.5 134.2C304.1 129.3 285.8 124.5 267.4 119.7C249.1 114.9 221.6 107.8 212.4 105.4M872.9 297.8C865.5 294.5 843.2 284.2 828.3 277.7C813.4 271.3 798.5 265.1 783.6 259.0C768.7 253.0 753.8 247.2 739.0 241.5C724.1 235.8 709.2 230.2 694.3 224.8C679.4 219.4 664.5 214.2 649.6 209.0C634.7 203.9 619.9 198.8 605.0 193.9C590.1 188.9 575.2 184.1 560.3 179.3C545.4 174.5 530.5 169.8 515.6 165.2C500.8 160.5 485.9 156.0 471.0 151.4C456.1 146.9 441.2 142.5 426.3 138.0C411.4 133.6 396.5 129.2 381.7 124.9C366.8 120.6 344.4 114.2 337.0 112.0M873.6 279.0C864.7 275.0 838.1 262.6 820.4 255.1C802.7 247.6 785.0 240.6 767.3 233.9C749.6 227.2 731.9 221.0 714.2 215.0C696.5 209.0 678.8 203.3 661.0 197.8C643.3 192.3 625.6 187.1 607.9 182.1C590.2 177.1 572.5 172.3 554.8 167.6C537.1 162.9 519.4 158.4 501.7 154.0C483.9 149.6 466.2 145.3 448.5 141.2C430.8 137.0 413.1 132.9 395.4 129.0C377.7 125.0 360.0 121.1 342.3 117.3C324.6 113.4 306.8 109.7 289.1 106.0C271.4 102.3 244.9 96.8 236.0 95.0M874.1 261.7C866.6 258.2 843.9 247.3 828.8 240.6C813.7 233.9 798.6 227.7 783.5 221.7C768.3 215.7 753.2 210.0 738.1 204.5C723.0 199.1 707.9 193.9 692.8 188.9C677.6 183.9 662.5 179.1 647.4 174.5C632.3 169.9 617.2 165.5 602.1 161.1C587.0 156.8 571.8 152.7 556.7 148.7C541.6 144.6 526.5 140.7 511.4 136.9C496.3 133.1 481.2 129.4 466.0 125.8C450.9 122.1 435.8 118.6 420.7 115.1C405.6 111.6 390.5 108.2 375.3 104.9C360.2 101.5 337.6 96.6 330.0 95.0M874.8 253.3C868.5 250.3 849.6 241.0 836.9 235.2C824.3 229.4 811.7 223.8 799.0 218.5C786.4 213.1 773.8 207.9 761.1 202.9C748.5 197.9 735.9 193.1 723.2 188.4C710.6 183.7 698.0 179.1 685.3 174.7C672.7 170.3 660.1 166.0 647.4 161.8C634.8 157.6 622.1 153.5 609.5 149.5C596.9 145.5 584.2 141.6 571.6 137.8C559.0 133.9 546.3 130.2 533.7 126.5C521.1 122.8 508.4 119.2 495.8 115.7C483.2 112.1 470.5 108.6 457.9 105.2C445.3 101.7 426.3 96.7 420.0 95.0M876.1 239.4C870.9 236.9 855.2 229.1 844.8 224.2C834.3 219.2 823.9 214.5 813.5 209.8C803.0 205.1 792.6 200.6 782.1 196.1C771.7 191.7 761.2 187.4 750.8 183.1C740.3 178.9 729.9 174.8 719.4 170.7C709.0 166.7 698.5 162.7 688.1 158.8C677.6 154.9 667.2 151.1 656.7 147.3C646.3 143.6 635.8 139.9 625.4 136.2C614.9 132.6 604.5 129.0 594.0 125.5C583.6 122.0 573.1 118.5 562.7 115.1C552.2 111.6 541.8 108.3 531.3 104.9C520.9 101.6 505.2 96.7 500.0 95.0M878.0 221.0C874.6 219.3 864.2 214.1 857.3 210.6C850.4 207.2 843.6 203.7 836.7 200.3C829.8 196.8 822.9 193.3 816.0 189.8C809.1 186.4 802.2 182.9 795.3 179.4C788.4 175.9 781.6 172.4 774.7 168.9C767.8 165.4 760.9 161.9 754.0 158.4C747.1 154.9 740.2 151.4 733.3 147.9C726.4 144.4 719.6 140.9 712.7 137.3C705.8 133.8 698.9 130.3 692.0 126.8C685.1 123.3 678.2 119.7 671.3 116.2C664.4 112.7 657.6 109.1 650.7 105.6C643.8 102.1 633.4 96.8 630.0 95.0M881.1 196.6C878.4 195.1 870.5 190.8 865.2 187.9C859.9 185.0 854.5 182.1 849.2 179.2C843.9 176.3 838.6 173.5 833.3 170.6C828.0 167.7 822.7 164.9 817.4 162.0C812.1 159.2 806.8 156.4 801.5 153.5C796.2 150.7 790.8 147.9 785.5 145.1C780.2 142.2 774.9 139.4 769.6 136.6C764.3 133.8 759.0 131.0 753.7 128.2C748.4 125.5 743.1 122.7 737.8 119.9C732.5 117.1 727.2 114.3 721.8 111.6C716.5 108.8 711.2 106.0 705.9 103.3C700.6 100.5 692.7 96.4 690.0 95.0M882.6 186.7C878.6 184.8 866.9 179.0 859.0 175.4C851.2 171.8 843.3 168.4 835.5 165.1C827.6 161.8 819.8 158.7 811.9 155.6C804.1 152.6 796.2 149.7 788.4 146.9C780.5 144.2 772.7 141.5 764.8 138.9C757.0 136.4 749.1 133.9 741.3 131.5C733.4 129.2 725.6 126.9 717.7 124.7C709.9 122.5 702.0 120.4 694.2 118.3C686.3 116.3 678.5 114.3 670.6 112.4C662.8 110.5 654.9 108.7 647.1 106.9C639.2 105.2 631.4 103.5 623.5 101.8C615.7 100.2 603.9 97.8 600.0 97.0M879.1 212.0C874.2 209.8 859.2 203.0 849.2 198.8C839.2 194.6 829.3 190.5 819.3 186.6C809.3 182.7 799.3 179.0 789.4 175.4C779.4 171.8 769.4 168.3 759.4 164.9C749.5 161.6 739.5 158.3 729.5 155.2C719.5 152.0 709.5 149.0 699.6 146.0C689.6 143.0 679.6 140.2 669.6 137.4C659.7 134.6 649.7 131.8 639.7 129.2C629.7 126.5 619.8 123.9 609.8 121.4C599.8 118.9 589.8 116.4 579.9 114.0C569.9 111.6 559.9 109.2 549.9 106.9C540.0 104.5 525.0 101.1 520.0 100.0M300.0 318.0C304.4 315.8 311.7 312.2 326.3 305.0C340.9 297.8 369.2 284.7 387.9 274.8C406.5 264.9 422.7 254.5 438.2 245.9C453.7 237.3 466.2 231.0 480.9 223.2C495.6 215.4 511.5 206.6 526.2 199.3C540.9 192.0 555.9 185.5 568.9 179.2C581.9 172.9 591.5 167.9 604.1 161.6C616.7 155.3 630.1 148.4 644.4 141.5C658.6 134.6 677.5 125.9 689.6 120.1C701.8 114.3 710.4 109.5 717.3 106.7C724.2 103.9 726.7 104.0 731.0 103.3C735.3 102.6 739.2 102.8 743.0 102.8C746.8 102.8 749.5 102.7 754.0 103.5C758.5 104.3 764.4 105.7 770.3 107.6C776.1 109.5 780.7 111.1 789.1 115.1C797.5 119.1 812.4 126.9 820.6 131.5C828.8 136.1 831.9 138.6 838.2 142.8C844.5 147.0 852.6 152.5 858.3 156.6C863.9 160.7 867.8 164.2 872.1 167.3C876.4 170.5 882.0 174.1 884.0 175.5M887.2 158.5C886.0 157.8 883.9 157.3 879.7 154.1C875.5 150.8 869.4 144.8 862.1 139.0C854.8 133.2 843.0 124.1 835.7 119.5C828.4 114.9 822.7 113.0 818.1 111.6C813.5 110.2 810.7 111.0 808.0 111.0C805.3 111.0 804.8 110.8 801.7 111.5C798.6 112.2 795.2 112.3 789.6 115.1C784.0 117.9 775.6 123.5 767.8 128.5C760.0 133.5 750.2 140.6 742.7 145.3C735.2 150.1 728.5 153.8 722.6 157.0C716.7 160.2 712.8 161.8 707.5 164.6C702.2 167.4 697.4 170.2 690.7 173.8C684.0 177.4 676.8 182.1 667.3 186.4C657.8 190.7 641.1 196.6 633.8 199.8C626.5 203.0 631.2 201.8 623.7 205.6C616.2 209.4 598.3 217.7 588.5 222.4C578.7 227.2 572.1 230.2 565.0 234.1C557.9 238.0 554.5 239.8 546.0 246.0C537.5 252.2 526.5 262.7 514.0 271.0C501.5 279.3 483.3 289.3 471.0 296.0C458.7 302.7 449.3 307.0 440.0 311.0C430.7 315.0 422.5 318.1 415.0 320.0C407.5 321.9 401.2 322.3 395.0 322.5C388.8 322.7 389.5 324.2 378.0 321.3C366.5 318.4 340.7 309.6 326.0 305.0C311.3 300.4 296.0 295.8 290.0 294.0M889.7 144.7C888.7 144.3 886.5 144.7 883.4 142.1C880.3 139.5 875.7 133.1 870.9 128.9C866.1 124.7 858.7 119.2 854.5 117.0C850.3 114.8 849.0 115.2 845.7 115.7C842.4 116.2 839.2 117.4 834.9 120.1C830.6 122.8 825.4 127.7 819.8 131.9C814.2 136.1 808.7 140.3 801.4 145.3C794.1 150.3 783.8 157.4 776.2 162.0C768.7 166.6 762.2 170.1 756.1 172.9C750.0 175.7 746.4 176.6 739.4 178.8C732.4 181.1 721.8 183.6 714.2 186.4C706.7 189.2 701.9 192.9 694.1 195.6C686.3 198.2 676.2 200.1 667.3 202.3C658.4 204.5 647.7 208.2 640.5 209.0C633.3 209.8 632.8 204.4 624.2 206.8C615.6 209.2 598.8 218.8 589.0 223.6C579.2 228.3 572.6 231.4 565.5 235.3C558.4 239.2 555.0 241.0 546.5 247.2C538.0 253.3 527.0 263.9 514.5 272.2C502.0 280.5 483.8 290.5 471.5 297.2C459.2 303.9 449.8 308.2 440.5 312.2C431.2 316.2 423.0 319.3 415.5 321.2C408.0 323.1 402.8 323.5 395.5 323.7C388.2 323.9 383.6 325.1 372.0 322.5C360.4 319.9 339.7 312.2 326.0 308.0C312.3 303.8 296.0 298.8 290.0 297.0M891.6 135.2C890.2 134.6 886.6 134.1 883.4 131.5C880.1 128.9 874.9 121.7 872.1 119.5C869.3 117.3 869.4 117.1 866.5 118.6C863.6 120.1 859.7 124.5 855.0 128.5C850.3 132.5 844.1 138.1 838.2 142.8C832.3 147.6 826.5 152.7 819.8 157.0C813.1 161.3 804.1 165.7 798.0 168.8C791.9 171.9 788.2 173.8 782.9 175.5C777.6 177.2 773.2 178.2 766.2 178.8C759.2 179.4 749.7 177.9 741.0 178.8C732.3 179.8 722.7 182.0 714.2 184.5C705.7 187.0 699.0 191.2 690.0 194.0C681.0 196.8 669.7 198.8 660.0 201.0C650.3 203.2 638.2 205.9 632.0 207.0C625.8 208.1 628.3 206.0 623.0 207.5C617.7 209.0 603.8 214.6 600.0 216.0M894.0 128.0C893.1 127.8 890.5 128.2 888.5 127.0C886.5 125.8 884.3 121.6 882.2 120.8C880.1 120.0 879.2 119.2 875.9 122.0C872.5 124.8 866.9 133.2 862.1 137.7C857.3 142.2 852.5 145.0 847.0 149.1C841.5 153.2 835.9 158.8 829.4 162.3C822.9 165.9 815.8 168.2 808.0 170.4C800.2 172.6 789.8 174.0 782.9 175.5C776.0 177.0 773.0 178.7 766.5 179.2C760.0 179.7 751.6 177.2 743.9 178.6C736.1 180.0 728.1 184.2 720.0 187.4C711.9 190.6 703.7 194.7 695.0 197.5C686.3 200.3 676.8 202.2 668.0 204.5C659.2 206.8 650.0 209.1 642.0 211.0C634.0 212.9 627.3 214.3 620.0 216.0C612.7 217.7 601.7 220.2 598.0 221.0M83.9 102.5L209.0 134.0L324.7 95.0M87.7 152.8L158.5 168.6L217.4 146.1L289.5 120.1L356.6 95.0M216.6 158.7L296.2 127.7L378.4 95.0M296.2 167.9L352.7 145.3L403.0 122.7L450.8 106.3L500.0 95.0M294.0 170.5L352.7 147.0L404.0 124.5L452.0 108.0L504.4 96.0M298.0 166.0L400.0 124.0L473.0 95.0M325.6 182.2L400.0 152.0L470.0 123.0L540.0 95.0M315.0 194.0L390.4 158.7L450.7 134.4L529.5 105.0L560.0 95.0M318.0 214.0L400.0 175.5L480.0 140.0L580.0 96.0M310.0 224.0L400.5 183.0L460.8 155.3L516.1 131.5L561.4 110.1L596.6 95.0M312.0 231.0L383.7 192.2L434.0 168.7L470.9 148.0L520.0 128.0M879.0 207.5L838.0 203.0L795.0 199.5L751.0 203.0L682.0 202.0L637.0 202.0L624.0 175.5L560.0 157.0L480.0 135.0L400.0 114.0L330.0 97.0" fill="none" stroke="#c08cff" stroke-width="1" shape-rendering="crispEdges"/>
<path d="M894.2 127.2L891.6 139.4L888.9 151.7L886.5 163.9L884.4 176.2L882.3 188.4L880.6 200.7L879.0 212.9L877.5 225.2L876.3 237.4L875.2 249.7L874.1 261.9L873.7 274.2L873.3 286.4L872.9 298.7L872.9 310.9L872.9 323.1L873.0 335.4L873.1 347.6L873.2 359.9L873.3 372.1L873.3 384.4L873.4 396.6L873.5 408.9L873.7 421.1L874.0 433.4L874.3 445.6L874.6 457.9L874.8 470.1L875.1 482.4L875.4 494.6L875.8 506.8L876.2 519.1L876.7 531.3L877.2 543.6L877.7 555.8L878.2 568.1L878.6 580.3L879.1 592.6L879.6 604.8L880.1 617.1L880.6 629.3L881.2 641.6L881.8 653.8L882.4 666.1L883.1 678.3L883.7 690.5L884.3 702.8L884.9 715.0L885.6 727.3L886.2 739.5L886.8 751.8L887.7 764.0L888.6 776.3L889.6 788.5L890.6 800.8L891.5 813.0L892.5 825.3L893.5 837.5L894.4 849.8L895.4 862.0L903.6 867.5L911.7 872.7L919.9 877.6L928.1 882.3L936.2 886.7L944.4 890.8L952.6 894.6L960.7 898.1L968.9 901.4L977.1 904.4L985.2 907.1L993.4 909.5L992.6 896.7L991.8 883.9L990.9 871.0L990.1 858.2L989.3 845.4L988.5 832.6L987.6 819.7L986.8 806.9L986.0 794.1L985.2 781.2L984.4 768.4L983.7 755.6L982.9 742.8L982.2 729.9L981.4 717.1L980.7 704.3L980.0 691.5L979.2 678.6L978.5 665.8L977.7 653.0L977.0 640.2L976.3 627.3L975.5 614.5L974.7 601.7L974.0 588.9L973.2 576.0L972.5 563.2L971.7 550.4L970.9 537.6L970.2 524.8L969.4 511.9L968.7 499.1L968.2 486.3L967.7 473.4L967.3 460.6L966.8 447.8L966.3 435.0L965.9 422.2L965.4 409.3L965.0 396.5L964.5 383.7L964.0 370.9L963.7 358.0L963.3 345.2L962.9 332.4L962.6 319.5L962.2 306.7L961.8 293.9L961.5 281.1L961.1 268.2L960.7 255.4L960.4 242.6L960.0 229.8L959.1 216.9L958.1 204.1L957.2 191.3L956.2 178.5L955.2 165.7L954.3 152.8L953.3 140.0L948.4 138.9L943.4 137.9L938.5 136.8L933.6 135.7L928.7 134.7L923.8 133.6L918.8 132.5L913.9 131.5L909.0 130.4L904.1 129.3L899.1 128.3Z" fill="url(#gs1)" stroke="none"/>
<path d="M936 136.300L953.300 140L960 229L962 262L946 258L940 200Z" fill="url(#gs1b)"/>
<path d="M894.9 127.4L891.1 145.7L887.4 164.1L884.3 182.5L881.6 200.9L879.3 219.3L877.4 237.7L875.7 256.1L874.8 274.5L874.2 292.8L874.0 311.2L874.1 329.6L874.2 348.0L874.4 366.4L874.5 384.8L874.6 403.2L874.9 421.6L875.3 439.9L875.7 458.3L876.1 476.7L876.6 495.1L877.2 513.5L877.9 531.9L878.6 550.3L879.4 568.7L880.1 587.0L880.8 605.4L881.5 623.8L882.4 642.2L883.4 660.6L884.3 679.0L885.2 697.4L886.2 715.7L887.1 734.1L888.0 752.5L889.4 770.9L890.8 789.3L892.3 807.7L893.7 826.1L895.2 844.5L896.6 862.8M897.1 127.8L893.4 146.3L890.0 164.7L887.0 183.1L884.5 201.6L882.3 220.0L880.5 238.5L878.9 256.9L878.1 275.3L877.5 293.8L877.3 312.2L877.5 330.6L877.6 349.1L877.7 367.5L877.9 385.9L878.0 404.4L878.3 422.8L878.8 441.3L879.2 459.7L879.6 478.1L880.1 496.6L880.7 515.0L881.5 533.4L882.2 551.9L882.9 570.3L883.7 588.7L884.4 607.2L885.2 625.6L886.0 644.1L887.0 662.5L887.9 680.9L888.9 699.4L889.8 717.8L890.8 736.2L891.7 754.7L893.1 773.1L894.5 791.5L895.9 810.0L897.4 828.4L898.8 846.9L900.3 865.3M900.6 128.6L897.3 147.1L894.1 165.6L891.4 184.1L889.1 202.6L887.2 221.2L885.5 239.7L884.1 258.2L883.3 276.7L882.9 295.2L882.7 313.7L882.8 332.2L883.0 350.8L883.2 369.3L883.4 387.8L883.6 406.3L883.9 424.8L884.3 443.3L884.8 461.8L885.2 480.3L885.7 498.9L886.4 517.4L887.2 535.9L887.9 554.4L888.7 572.9L889.5 591.4L890.2 609.9L891.0 628.5L891.9 647.0L892.8 665.5L893.8 684.0L894.7 702.5L895.7 721.0L896.7 739.5L897.6 758.0L899.0 776.6L900.4 795.1L901.8 813.6L903.2 832.1L904.7 850.6L906.1 869.1M905.3 129.6L902.4 148.2L899.6 166.8L897.3 185.4L895.4 204.0L893.7 222.7L892.2 241.3L890.9 259.9L890.3 278.5L889.9 297.1L889.8 315.7L890.0 334.3L890.2 352.9L890.4 371.5L890.7 390.1L890.9 408.8L891.3 427.4L891.7 446.0L892.2 464.6L892.7 483.2L893.2 501.8L893.9 520.4L894.7 539.0L895.5 557.6L896.3 576.2L897.1 594.9L897.9 613.5L898.7 632.1L899.6 650.7L900.6 669.3L901.6 687.9L902.6 706.5L903.5 725.1L904.5 743.7L905.5 762.3L906.8 780.9L908.2 799.6L909.6 818.2L911.0 836.8L912.4 855.4L913.8 874.0M910.9 130.8L908.5 149.5L906.2 168.3L904.4 187.0L902.8 205.7L901.4 224.4L900.2 243.1L899.1 261.8L898.7 280.6L898.4 299.3L898.4 318.0L898.6 336.7L898.8 355.4L899.1 374.1L899.4 392.9L899.7 411.6L900.1 430.3L900.6 449.0L901.1 467.7L901.6 486.4L902.2 505.2L903.0 523.9L903.8 542.6L904.7 561.3L905.5 580.0L906.3 598.7L907.2 617.5L908.0 636.2L908.9 654.9L909.9 673.6L910.9 692.3L911.9 711.1L912.9 729.8L913.9 748.5L914.9 767.2L916.2 785.9L917.6 804.6L919.0 823.4L920.4 842.1L921.8 860.8L923.1 879.5M917.2 132.2L915.3 151.0L913.6 169.8L912.2 188.7L911.1 207.5L910.1 226.3L909.1 245.1L908.3 264.0L908.0 282.8L907.8 301.6L907.9 320.4L908.2 339.3L908.4 358.1L908.8 376.9L909.1 395.7L909.5 414.6L909.9 433.4L910.4 452.2L911.0 471.0L911.5 489.9L912.2 508.7L913.1 527.5L913.9 546.3L914.8 565.2L915.7 584.0L916.6 602.8L917.5 621.7L918.3 640.5L919.3 659.3L920.3 678.1L921.3 697.0L922.3 715.8L923.3 734.6L924.3 753.4L925.4 772.3L926.7 791.1L928.0 809.9L929.4 828.7L930.8 847.6L932.1 866.4L933.5 885.2M923.8 133.6L922.5 152.5L921.4 171.5L920.5 190.4L919.8 209.3L919.2 228.2L918.5 247.2L917.9 266.1L917.8 285.0L917.8 304.0L917.9 322.9L918.2 341.8L918.6 360.7L919.0 379.7L919.4 398.6L919.8 417.5L920.3 436.5L920.8 455.4L921.4 474.3L922.0 493.2L922.8 512.2L923.7 531.1L924.6 550.0L925.5 569.0L926.4 587.9L927.4 606.8L928.3 625.7L929.2 644.7L930.2 663.6L931.2 682.5L932.3 701.5L933.3 720.4L934.3 739.3L935.3 758.2L936.4 777.2L937.7 796.1L939.0 815.0L940.4 834.0L941.7 852.9L943.1 871.8L944.4 890.8M930.3 135.0L929.7 154.0L929.1 173.1L928.8 192.1L928.6 211.1L928.3 230.1L927.9 249.1L927.6 268.2L927.6 287.2L927.7 306.2L927.9 325.2L928.3 344.2L928.7 363.3L929.2 382.3L929.6 401.3L930.1 420.3L930.6 439.3L931.2 458.3L931.8 477.4L932.5 496.4L933.3 515.4L934.3 534.4L935.2 553.4L936.2 572.5L937.2 591.5L938.2 610.5L939.1 629.5L940.1 648.5L941.1 667.6L942.2 686.6L943.2 705.6L944.2 724.6L945.3 743.6L946.3 762.7L947.4 781.7L948.7 800.7L950.0 819.7L951.3 838.7L952.7 857.7L954.0 876.8L955.3 895.8M936.6 136.4L936.5 155.5L936.5 174.6L936.6 193.7L936.9 212.8L937.0 231.8L936.9 250.9L936.8 270.0L936.9 289.1L937.1 308.2L937.4 327.3L937.9 346.4L938.3 365.5L938.8 384.6L939.4 403.7L939.9 422.8L940.5 441.9L941.1 461.0L941.7 480.1L942.4 499.2L943.3 518.2L944.3 537.3L945.4 556.4L946.4 575.5L947.4 594.6L948.4 613.7L949.4 632.8L950.4 651.9L951.5 671.0L952.5 690.1L953.6 709.2L954.7 728.3L955.7 747.4L956.8 766.5L957.9 785.6L959.2 804.6L960.5 823.7L961.8 842.8L963.1 861.9L964.4 881.0L965.7 900.1M942.2 137.6L942.6 156.7L943.1 175.9L943.7 195.0L944.3 214.2L944.8 233.3L944.9 252.5L945.0 271.6L945.3 290.8L945.6 309.9L946.0 329.1L946.4 348.2L946.9 367.4L947.5 386.5L948.1 405.7L948.7 424.8L949.3 444.0L949.9 463.2L950.6 482.3L951.3 501.5L952.3 520.6L953.4 539.8L954.4 558.9L955.5 578.1L956.6 597.2L957.6 616.4L958.7 635.5L959.7 654.7L960.8 673.8L961.8 693.0L962.9 712.1L964.0 731.3L965.1 750.4L966.2 769.6L967.3 788.7L968.6 807.9L969.9 827.0L971.1 846.2L972.4 865.3L973.7 884.5L975.0 903.6M946.9 138.6L947.7 157.8L948.6 177.0L949.5 196.2L950.5 215.4L951.3 234.6L951.5 253.8L951.8 272.9L952.2 292.1L952.6 311.3L953.1 330.5L953.6 349.7L954.1 368.9L954.7 388.1L955.4 407.3L956.0 426.5L956.7 445.7L957.3 464.9L958.0 484.1L958.8 503.2L959.8 522.4L960.9 541.6L962.0 560.8L963.1 580.0L964.2 599.2L965.3 618.4L966.4 637.6L967.4 656.8L968.5 676.0L969.6 695.2L970.7 714.3L971.8 733.5L972.9 752.7L974.0 771.9L975.2 791.1L976.4 810.3L977.7 829.5L978.9 848.7L980.2 867.9L981.5 887.1L982.7 906.3M950.4 139.4L951.6 158.6L952.7 177.8L954.0 197.0L955.2 216.2L956.1 235.5L956.6 254.7L957.0 273.9L957.5 293.1L958.0 312.3L958.5 331.5L959.0 350.8L959.5 370.0L960.2 389.2L960.9 408.4L961.5 427.6L962.2 446.9L962.9 466.1L963.6 485.3L964.4 504.5L965.5 523.7L966.6 542.9L967.7 562.2L968.8 581.4L970.0 600.6L971.1 619.8L972.2 639.0L973.3 658.3L974.4 677.5L975.5 696.7L976.6 715.9L977.7 735.1L978.8 754.3L979.9 773.6L981.1 792.8L982.3 812.0L983.6 831.2L984.8 850.4L986.1 869.7L987.3 888.9L988.5 908.1M952.6 139.8L953.9 159.1L955.3 178.3L956.7 197.5L958.1 216.8L959.2 236.0L959.7 255.2L960.2 274.5L960.7 293.7L961.3 312.9L961.8 332.2L962.3 351.4L962.9 370.6L963.6 389.9L964.3 409.1L965.0 428.3L965.6 447.6L966.3 466.8L967.0 486.0L967.8 505.3L969.0 524.5L970.1 543.7L971.3 563.0L972.4 582.2L973.5 601.4L974.7 620.7L975.8 639.9L976.9 659.1L978.0 678.4L979.1 697.6L980.2 716.8L981.3 736.1L982.4 755.3L983.5 774.5L984.8 793.8L986.0 813.0L987.2 832.2L988.5 851.5L989.7 870.7L990.9 889.9L992.2 909.2M891.6 139.5C892.6 139.7 895.7 140.4 897.8 140.8C899.9 141.3 902.0 141.7 904.1 142.2C906.2 142.6 908.3 143.1 910.4 143.5C912.5 144.0 914.6 144.4 916.6 144.9C918.7 145.3 920.8 145.8 922.9 146.2C925.0 146.7 927.1 147.1 929.2 147.6C931.3 148.0 933.4 148.5 935.5 148.9C937.5 149.3 939.6 149.8 941.7 150.2C943.8 150.7 945.9 151.1 948.0 151.5C950.1 152.0 953.2 152.6 954.3 152.8M888.9 151.8C890.0 152.1 893.3 152.8 895.5 153.3C897.7 153.8 900.0 154.2 902.2 154.7C904.4 155.2 906.6 155.7 908.8 156.1C911.0 156.6 913.2 157.1 915.4 157.6C917.6 158.0 919.9 158.5 922.1 159.0C924.3 159.4 926.5 159.9 928.7 160.4C930.9 160.8 933.1 161.3 935.3 161.7C937.5 162.2 939.8 162.6 942.0 163.1C944.2 163.5 946.4 164.0 948.6 164.4C950.8 164.9 954.1 165.6 955.2 165.8M886.5 164.3C887.6 164.5 891.1 165.3 893.4 165.8C895.8 166.3 898.1 166.8 900.4 167.4C902.7 167.9 905.1 168.4 907.4 168.9C909.7 169.4 912.0 169.9 914.4 170.3C916.7 170.8 919.0 171.3 921.3 171.8C923.7 172.3 926.0 172.8 928.3 173.3C930.6 173.7 933.0 174.2 935.3 174.7C937.6 175.1 939.9 175.6 942.3 176.1C944.6 176.5 946.9 177.0 949.2 177.5C951.6 177.9 955.1 178.6 956.2 178.8M884.3 176.8C885.5 177.1 889.1 177.9 891.6 178.5C894.0 179.0 896.4 179.6 898.9 180.1C901.3 180.6 903.7 181.1 906.2 181.7C908.6 182.2 911.0 182.7 913.5 183.2C915.9 183.7 918.3 184.3 920.7 184.8C923.2 185.3 925.6 185.8 928.0 186.3C930.5 186.8 932.9 187.2 935.3 187.7C937.8 188.2 940.2 188.7 942.6 189.2C945.1 189.7 947.5 190.1 949.9 190.6C952.4 191.1 956.0 191.8 957.2 192.0M882.1 189.5C883.3 189.8 887.2 190.7 889.7 191.2C892.2 191.8 894.8 192.4 897.3 192.9C899.8 193.5 902.4 194.0 904.9 194.6C907.5 195.1 910.0 195.7 912.5 196.2C915.1 196.8 917.6 197.3 920.1 197.8C922.7 198.3 925.2 198.9 927.8 199.4C930.3 199.9 932.8 200.4 935.4 200.9C937.9 201.4 940.4 201.9 943.0 202.4C945.5 202.9 948.1 203.4 950.6 203.8C953.1 204.3 956.9 205.0 958.2 205.3M880.4 202.3C881.7 202.6 885.6 203.5 888.3 204.1C890.9 204.7 893.5 205.3 896.1 205.9C898.8 206.5 901.4 207.0 904.0 207.6C906.6 208.2 909.3 208.8 911.9 209.3C914.5 209.9 917.2 210.4 919.8 211.0C922.4 211.5 925.0 212.1 927.7 212.6C930.3 213.1 932.9 213.6 935.6 214.2C938.2 214.7 940.8 215.2 943.4 215.7C946.1 216.2 948.7 216.7 951.3 217.2C954.0 217.7 957.9 218.4 959.2 218.6M878.7 215.2C880.1 215.5 884.2 216.4 886.9 217.1C889.6 217.7 892.3 218.3 895.0 218.9C897.7 219.6 900.4 220.2 903.1 220.8C905.9 221.4 908.6 221.9 911.3 222.5C914.0 223.1 916.7 223.7 919.4 224.2C922.1 224.8 924.8 225.4 927.5 225.9C930.3 226.5 933.0 227.0 935.7 227.5C938.4 228.1 941.1 228.6 943.8 229.1C946.5 229.6 949.2 230.1 952.0 230.6C954.7 231.1 958.7 231.9 960.1 232.1M877.2 228.1C878.6 228.5 882.8 229.5 885.5 230.2C888.3 230.8 891.1 231.5 893.9 232.1C896.6 232.7 899.4 233.4 902.2 234.0C905.0 234.6 907.7 235.2 910.5 235.8C913.3 236.4 916.1 237.0 918.8 237.6C921.6 238.2 924.4 238.8 927.2 239.3C929.9 239.9 932.7 240.5 935.5 241.0C938.3 241.6 941.0 242.1 943.8 242.6C946.6 243.2 949.4 243.7 952.1 244.2C954.9 244.7 959.1 245.5 960.5 245.7M876.0 241.2C877.4 241.6 881.6 242.6 884.5 243.3C887.3 244.0 890.1 244.7 892.9 245.4C895.8 246.0 898.6 246.7 901.4 247.3C904.3 248.0 907.1 248.6 909.9 249.3C912.8 249.9 915.6 250.5 918.4 251.1C921.2 251.7 924.1 252.3 926.9 252.9C929.7 253.5 932.6 254.1 935.4 254.6C938.2 255.2 941.1 255.7 943.9 256.3C946.7 256.8 949.5 257.4 952.4 257.9C955.2 258.4 959.4 259.2 960.9 259.4M874.7 254.4C876.2 254.8 880.5 255.9 883.4 256.6C886.3 257.4 889.1 258.1 892.0 258.8C894.9 259.5 897.8 260.1 900.7 260.8C903.6 261.5 906.5 262.1 909.3 262.8C912.2 263.4 915.1 264.1 918.0 264.7C920.9 265.3 923.8 266.0 926.6 266.6C929.5 267.2 932.4 267.8 935.3 268.3C938.2 268.9 941.1 269.5 943.9 270.0C946.8 270.6 949.7 271.1 952.6 271.7C955.5 272.2 959.8 273.0 961.3 273.2M873.9 267.7C875.4 268.1 879.8 269.3 882.7 270.0C885.6 270.8 888.6 271.5 891.5 272.2C894.4 273.0 897.3 273.7 900.3 274.4C903.2 275.1 906.1 275.8 909.0 276.4C911.9 277.1 914.9 277.8 917.8 278.4C920.7 279.1 923.6 279.7 926.6 280.3C929.5 281.0 932.4 281.6 935.3 282.2C938.3 282.8 941.2 283.3 944.1 283.9C947.0 284.5 950.0 285.0 952.9 285.6C955.8 286.1 960.2 286.9 961.7 287.2M873.5 281.2C875.0 281.6 879.4 282.8 882.3 283.6C885.3 284.3 888.3 285.1 891.2 285.9C894.2 286.6 897.1 287.3 900.1 288.1C903.0 288.8 906.0 289.5 908.9 290.2C911.9 290.9 914.8 291.6 917.8 292.3C920.7 292.9 923.7 293.6 926.6 294.2C929.6 294.9 932.5 295.5 935.5 296.1C938.4 296.7 941.4 297.3 944.3 297.9C947.3 298.5 950.2 299.1 953.2 299.6C956.1 300.2 960.6 301.0 962.0 301.2M873.0 294.7C874.5 295.1 879.0 296.4 882.0 297.2C885.0 298.0 887.9 298.8 890.9 299.6C893.9 300.3 896.9 301.1 899.9 301.9C902.8 302.6 905.8 303.4 908.8 304.1C911.8 304.8 914.8 305.5 917.7 306.2C920.7 306.9 923.7 307.6 926.7 308.2C929.7 308.9 932.6 309.5 935.6 310.2C938.6 310.8 941.6 311.4 944.6 312.0C947.5 312.6 950.5 313.2 953.5 313.7C956.5 314.3 961.0 315.1 962.5 315.4M872.8 308.3C874.3 308.8 878.8 310.1 881.8 310.9C884.8 311.8 887.8 312.6 890.8 313.4C893.8 314.2 896.8 315.0 899.8 315.8C902.8 316.6 905.8 317.3 908.8 318.1C911.8 318.8 914.8 319.5 917.8 320.2C920.8 321.0 923.8 321.7 926.9 322.3C929.9 323.0 932.9 323.7 935.9 324.3C938.9 325.0 941.9 325.6 944.9 326.2C947.9 326.8 950.9 327.4 953.9 328.0C956.9 328.6 961.4 329.4 962.9 329.7M872.9 322.1C874.4 322.5 879.0 323.9 882.0 324.8C885.0 325.6 888.0 326.5 891.0 327.3C894.0 328.2 897.0 329.0 900.0 329.8C903.0 330.6 906.1 331.4 909.1 332.2C912.1 332.9 915.1 333.7 918.1 334.4C921.1 335.2 924.1 335.9 927.1 336.6C930.1 337.3 933.2 337.9 936.2 338.6C939.2 339.3 942.2 339.9 945.2 340.5C948.2 341.2 951.2 341.8 954.2 342.4C957.2 343.0 961.8 343.8 963.3 344.1M873.0 336.0C874.5 336.4 879.1 337.8 882.1 338.7C885.1 339.6 888.1 340.5 891.1 341.4C894.2 342.3 897.2 343.1 900.2 343.9C903.2 344.8 906.3 345.6 909.3 346.4C912.3 347.2 915.3 348.0 918.3 348.7C921.4 349.5 924.4 350.2 927.4 350.9C930.4 351.6 933.5 352.3 936.5 353.0C939.5 353.7 942.5 354.4 945.5 355.0C948.6 355.6 951.6 356.3 954.6 356.9C957.6 357.5 962.2 358.3 963.7 358.6M873.1 349.9C874.6 350.4 879.2 351.9 882.2 352.8C885.2 353.8 888.3 354.7 891.3 355.6C894.3 356.5 897.4 357.4 900.4 358.2C903.4 359.1 906.5 359.9 909.5 360.7C912.5 361.5 915.6 362.3 918.6 363.1C921.6 363.9 924.7 364.6 927.7 365.4C930.7 366.1 933.8 366.8 936.8 367.5C939.8 368.2 942.9 368.9 945.9 369.6C948.9 370.2 952.0 370.9 955.0 371.5C958.1 372.1 962.6 373.0 964.1 373.3M873.2 364.0C874.7 364.5 879.3 366.0 882.3 367.0C885.4 368.0 888.4 368.9 891.5 369.9C894.5 370.8 897.6 371.7 900.6 372.6C903.7 373.5 906.7 374.3 909.8 375.2C912.8 376.0 915.9 376.8 918.9 377.6C922.0 378.4 925.0 379.2 928.1 380.0C931.1 380.7 934.2 381.5 937.2 382.2C940.3 382.9 943.3 383.6 946.4 384.3C949.4 384.9 952.5 385.6 955.5 386.2C958.6 386.8 963.1 387.7 964.7 388.0M873.3 378.2C874.8 378.8 879.4 380.3 882.5 381.3C885.5 382.3 888.6 383.3 891.7 384.3C894.7 385.2 897.8 386.2 900.9 387.1C903.9 388.0 907.0 388.9 910.0 389.8C913.1 390.6 916.2 391.5 919.2 392.3C922.3 393.1 925.4 393.9 928.4 394.7C931.5 395.5 934.6 396.2 937.6 396.9C940.7 397.7 943.7 398.4 946.8 399.1C949.9 399.8 952.9 400.4 956.0 401.1C959.1 401.7 963.7 402.6 965.2 402.9M873.4 392.6C874.9 393.1 879.5 394.7 882.6 395.8C885.7 396.8 888.8 397.8 891.9 398.8C894.9 399.8 898.0 400.8 901.1 401.7C904.2 402.6 907.2 403.6 910.3 404.4C913.4 405.3 916.5 406.2 919.6 407.1C922.6 407.9 925.7 408.7 928.8 409.5C931.9 410.3 934.9 411.1 938.0 411.8C941.1 412.6 944.2 413.3 947.3 414.0C950.3 414.7 953.4 415.4 956.5 416.0C959.6 416.7 964.2 417.6 965.7 417.9M873.5 407.0C875.0 407.6 879.7 409.2 882.8 410.3C885.8 411.4 888.9 412.4 892.0 413.5C895.1 414.5 898.2 415.5 901.3 416.4C904.4 417.4 907.5 418.3 910.6 419.3C913.7 420.2 916.8 421.1 919.9 421.9C923.0 422.8 926.1 423.6 929.2 424.5C932.3 425.3 935.3 426.1 938.4 426.8C941.5 427.6 944.6 428.3 947.7 429.1C950.8 429.8 953.9 430.5 957.0 431.1C960.1 431.8 964.7 432.7 966.3 433.0M873.7 421.6C875.3 422.2 879.9 423.9 883.0 425.0C886.2 426.1 889.3 427.2 892.4 428.2C895.5 429.3 898.6 430.3 901.7 431.3C904.8 432.3 907.9 433.3 911.0 434.2C914.1 435.1 917.2 436.1 920.3 437.0C923.4 437.8 926.5 438.7 929.6 439.5C932.7 440.4 935.8 441.2 938.9 442.0C942.0 442.8 945.1 443.5 948.2 444.2C951.3 445.0 954.4 445.7 957.5 446.3C960.6 447.0 965.3 448.0 966.8 448.3M874.1 436.3C875.6 436.9 880.3 438.6 883.4 439.8C886.5 440.9 889.6 442.0 892.7 443.1C895.8 444.2 899.0 445.2 902.1 446.3C905.2 447.3 908.3 448.3 911.4 449.3C914.5 450.2 917.6 451.2 920.7 452.1C923.8 453.0 926.9 453.9 930.1 454.7C933.2 455.6 936.3 456.4 939.4 457.2C942.5 458.0 945.6 458.8 948.7 459.5C951.8 460.3 954.9 461.0 958.1 461.7C961.2 462.4 965.8 463.4 967.4 463.7M874.4 451.1C876.0 451.7 880.6 453.5 883.8 454.7C886.9 455.9 890.0 457.0 893.1 458.1C896.2 459.2 899.3 460.3 902.5 461.4C905.6 462.4 908.7 463.5 911.8 464.4C914.9 465.4 918.1 466.4 921.2 467.3C924.3 468.3 927.4 469.2 930.5 470.1C933.6 470.9 936.8 471.8 939.9 472.6C943.0 473.4 946.1 474.2 949.2 475.0C952.4 475.7 955.5 476.5 958.6 477.2C961.7 477.9 966.4 478.9 967.9 479.2M874.7 466.0C876.3 466.6 881.0 468.5 884.1 469.7C887.2 470.9 890.4 472.1 893.5 473.3C896.6 474.4 899.7 475.5 902.9 476.6C906.0 477.7 909.1 478.7 912.2 479.8C915.4 480.8 918.5 481.8 921.6 482.7C924.8 483.7 927.9 484.6 931.0 485.5C934.1 486.4 937.3 487.3 940.4 488.1C943.5 489.0 946.6 489.8 949.8 490.5C952.9 491.3 956.0 492.1 959.1 492.8C962.3 493.5 967.0 494.5 968.5 494.8M875.1 481.1C876.6 481.7 881.4 483.7 884.5 484.9C887.6 486.1 890.8 487.3 893.9 488.5C897.1 489.7 900.2 490.8 903.4 492.0C906.5 493.1 909.6 494.1 912.8 495.2C915.9 496.2 919.1 497.3 922.2 498.2C925.3 499.2 928.5 500.2 931.6 501.1C934.8 502.0 937.9 502.9 941.1 503.8C944.2 504.6 947.3 505.4 950.5 506.2C953.6 507.0 956.8 507.8 959.9 508.5C963.0 509.2 967.8 510.2 969.3 510.6M875.4 496.3C877.0 496.9 881.7 498.9 884.9 500.2C888.1 501.5 891.2 502.7 894.4 503.9C897.5 505.1 900.7 506.3 903.9 507.4C907.0 508.6 910.2 509.7 913.4 510.8C916.5 511.8 919.7 512.9 922.8 513.9C926.0 514.9 929.2 515.9 932.3 516.8C935.5 517.7 938.7 518.7 941.8 519.5C945.0 520.4 948.1 521.2 951.3 522.0C954.5 522.9 957.6 523.6 960.8 524.4C963.9 525.1 968.7 526.1 970.3 526.5M876.0 511.6C877.5 512.2 882.3 514.3 885.5 515.6C888.7 516.9 891.8 518.2 895.0 519.4C898.2 520.7 901.4 521.9 904.5 523.0C907.7 524.2 910.9 525.4 914.1 526.5C917.2 527.6 920.4 528.6 923.6 529.7C926.8 530.7 929.9 531.7 933.1 532.6C936.3 533.6 939.5 534.5 942.6 535.4C945.8 536.3 949.0 537.2 952.2 538.0C955.3 538.8 958.5 539.6 961.7 540.4C964.9 541.1 969.6 542.2 971.2 542.5M876.6 527.0C878.1 527.7 882.9 529.8 886.1 531.1C889.3 532.5 892.5 533.8 895.7 535.1C898.9 536.3 902.1 537.6 905.2 538.8C908.4 540.0 911.6 541.1 914.8 542.3C918.0 543.4 921.2 544.5 924.4 545.6C927.6 546.6 930.7 547.6 933.9 548.6C937.1 549.6 940.3 550.5 943.5 551.5C946.7 552.4 949.9 553.2 953.1 554.1C956.2 554.9 959.4 555.7 962.6 556.5C965.8 557.3 970.6 558.3 972.2 558.7M877.2 542.6C878.8 543.3 883.6 545.4 886.8 546.8C890.0 548.2 893.2 549.5 896.4 550.8C899.6 552.2 902.8 553.4 906.0 554.7C909.2 555.9 912.4 557.1 915.6 558.2C918.8 559.4 922.0 560.5 925.2 561.6C928.4 562.7 931.6 563.7 934.8 564.7C938.0 565.7 941.2 566.7 944.4 567.6C947.6 568.5 950.8 569.4 954.0 570.3C957.2 571.1 960.4 572.0 963.6 572.7C966.8 573.5 971.6 574.6 973.2 575.0M877.8 558.2C879.4 559.0 884.2 561.2 887.4 562.6C890.6 564.0 893.8 565.4 897.0 566.7C900.3 568.1 903.5 569.4 906.7 570.6C909.9 571.9 913.1 573.1 916.3 574.3C919.5 575.5 922.7 576.6 926.0 577.7C929.2 578.9 932.4 579.9 935.6 580.9C938.8 582.0 942.0 583.0 945.2 583.9C948.4 584.9 951.6 585.8 954.9 586.6C958.1 587.5 961.3 588.3 964.5 589.1C967.7 589.9 972.5 591.0 974.1 591.4M878.4 574.1C880.0 574.8 884.8 577.1 888.1 578.5C891.3 580.0 894.5 581.4 897.7 582.8C901.0 584.2 904.2 585.5 907.4 586.8C910.6 588.1 913.9 589.3 917.1 590.5C920.3 591.7 923.5 592.9 926.8 594.0C930.0 595.2 933.2 596.3 936.4 597.3C939.6 598.4 942.9 599.4 946.1 600.3C949.3 601.3 952.5 602.2 955.8 603.1C959.0 604.0 962.2 604.9 965.4 605.7C968.7 606.5 973.5 607.6 975.1 608.0M879.0 590.0C880.6 590.8 885.5 593.1 888.7 594.6C892.0 596.1 895.2 597.5 898.4 598.9C901.7 600.4 904.9 601.7 908.1 603.0C911.4 604.4 914.6 605.6 917.8 606.9C921.1 608.1 924.3 609.3 927.6 610.5C930.8 611.6 934.0 612.7 937.3 613.8C940.5 614.9 943.7 615.9 947.0 616.9C950.2 617.9 953.4 618.8 956.7 619.7C959.9 620.6 963.2 621.5 966.4 622.3C969.6 623.1 974.5 624.3 976.1 624.7M880.3 623.3C881.9 624.1 886.8 626.6 890.1 628.2C893.4 629.7 896.6 631.3 899.9 632.7C903.1 634.2 906.4 635.7 909.7 637.0C912.9 638.4 916.2 639.8 919.4 641.1C922.7 642.4 926.0 643.6 929.2 644.8C932.5 646.0 935.7 647.2 939.0 648.3C942.3 649.4 945.5 650.5 948.8 651.5C952.0 652.6 955.3 653.5 958.6 654.5C961.8 655.4 965.1 656.3 968.3 657.2C971.6 658.0 976.5 659.2 978.1 659.6M882.0 656.7C883.6 657.5 888.5 660.1 891.8 661.7C895.1 663.4 898.3 665.0 901.6 666.5C904.9 668.1 908.1 669.6 911.4 671.0C914.7 672.5 918.0 673.9 921.2 675.2C924.5 676.6 927.8 677.9 931.0 679.2C934.3 680.4 937.6 681.6 940.9 682.8C944.1 684.0 947.4 685.1 950.7 686.2C954.0 687.2 957.2 688.2 960.5 689.2C963.8 690.2 967.0 691.1 970.3 692.0C973.6 692.9 978.5 694.1 980.1 694.5M883.7 690.0C885.3 690.9 890.2 693.6 893.5 695.3C896.8 697.0 900.1 698.7 903.4 700.3C906.6 701.9 909.9 703.5 913.2 705.0C916.5 706.5 919.8 708.0 923.1 709.4C926.3 710.8 929.6 712.2 932.9 713.5C936.2 714.8 939.5 716.1 942.8 717.3C946.0 718.5 949.3 719.7 952.6 720.8C955.9 721.9 959.2 722.9 962.5 724.0C965.7 725.0 969.0 725.9 972.3 726.8C975.6 727.7 980.5 729.0 982.2 729.4M885.4 723.3C887.0 724.3 891.9 727.1 895.2 728.9C898.5 730.7 901.8 732.4 905.1 734.1C908.4 735.8 911.7 737.4 915.0 739.0C918.3 740.6 921.6 742.1 924.9 743.6C928.2 745.1 931.5 746.5 934.8 747.9C938.1 749.2 941.3 750.5 944.6 751.8C947.9 753.1 951.2 754.3 954.5 755.4C957.8 756.6 961.1 757.7 964.4 758.7C967.7 759.7 971.0 760.7 974.3 761.7C977.6 762.6 982.5 763.8 984.2 764.3M887.1 756.7C888.7 757.6 893.7 760.6 897.0 762.5C900.3 764.3 903.6 766.2 906.9 767.9C910.2 769.7 913.5 771.4 916.9 773.0C920.2 774.7 923.5 776.3 926.8 777.8C930.1 779.3 933.4 780.8 936.7 782.2C940.0 783.6 943.3 785.0 946.6 786.3C949.9 787.6 953.2 788.8 956.6 790.0C959.9 791.2 963.2 792.4 966.5 793.4C969.8 794.5 973.1 795.5 976.4 796.5C979.7 797.4 984.7 798.7 986.3 799.2M889.7 790.0C891.4 791.0 896.3 794.1 899.6 796.0C902.9 798.0 906.2 799.9 909.5 801.7C912.8 803.5 916.1 805.3 919.4 807.0C922.7 808.7 926.0 810.4 929.3 812.0C932.5 813.6 935.8 815.1 939.1 816.6C942.4 818.0 945.7 819.4 949.0 820.8C952.3 822.1 955.6 823.4 958.9 824.7C962.2 825.9 965.5 827.1 968.8 828.2C972.1 829.3 975.4 830.3 978.7 831.3C982.0 832.3 986.9 833.6 988.6 834.1M890.7 802.0C892.3 803.0 897.2 806.1 900.5 808.1C903.8 810.1 907.1 812.0 910.4 813.9C913.7 815.7 917.0 817.5 920.3 819.3C923.6 821.0 926.9 822.7 930.1 824.3C933.4 825.9 936.7 827.4 940.0 828.9C943.3 830.4 946.6 831.8 949.9 833.2C953.2 834.6 956.5 835.9 959.8 837.1C963.0 838.4 966.3 839.6 969.6 840.7C972.9 841.8 976.2 842.9 979.5 843.9C982.8 844.9 987.7 846.2 989.4 846.7M891.6 814.0C893.3 815.0 898.2 818.2 901.5 820.2C904.8 822.2 908.0 824.2 911.3 826.0C914.6 827.9 917.9 829.7 921.2 831.5C924.5 833.3 927.8 834.9 931.0 836.6C934.3 838.2 937.6 839.8 940.9 841.3C944.2 842.8 947.5 844.2 950.7 845.6C954.0 847.0 957.3 848.3 960.6 849.6C963.9 850.8 967.2 852.0 970.5 853.2C973.7 854.3 977.0 855.4 980.3 856.4C983.6 857.4 988.5 858.8 990.2 859.2M892.6 826.0C894.2 827.0 899.1 830.3 902.4 832.3C905.7 834.3 909.0 836.3 912.2 838.2C915.5 840.1 918.8 842.0 922.1 843.7C925.4 845.5 928.6 847.2 931.9 848.9C935.2 850.5 938.5 852.1 941.8 853.7C945.1 855.2 948.3 856.6 951.6 858.0C954.9 859.4 958.2 860.8 961.5 862.1C964.7 863.3 968.0 864.5 971.3 865.7C974.6 866.8 977.9 867.9 981.1 868.9C984.4 870.0 989.3 871.3 991.0 871.8M893.5 838.0C895.1 839.1 900.1 842.3 903.3 844.4C906.6 846.4 909.9 848.4 913.2 850.4C916.4 852.3 919.7 854.2 923.0 856.0C926.3 857.8 929.5 859.5 932.8 861.2C936.1 862.9 939.4 864.5 942.6 866.0C945.9 867.6 949.2 869.0 952.5 870.5C955.8 871.9 959.0 873.2 962.3 874.5C965.6 875.8 968.9 877.0 972.1 878.2C975.4 879.3 978.7 880.4 982.0 881.5C985.2 882.5 990.1 883.9 991.8 884.4M894.5 850.0C896.1 851.1 901.0 854.4 904.3 856.5C907.5 858.6 910.8 860.6 914.1 862.5C917.4 864.5 920.6 866.4 923.9 868.2C927.2 870.0 930.4 871.8 933.7 873.5C937.0 875.2 940.3 876.8 943.5 878.4C946.8 879.9 950.1 881.4 953.3 882.9C956.6 884.3 959.9 885.7 963.2 887.0C966.4 888.3 969.7 889.5 973.0 890.7C976.2 891.9 979.5 893.0 982.8 894.0C986.1 895.1 991.0 896.4 992.6 896.9" fill="none" stroke="#b4b4b4" stroke-width="1" shape-rendering="crispEdges"/>
<path d="M894.2 127.2L891.6 139.4L888.9 151.7L886.5 163.9L884.4 176.2L882.3 188.4L880.6 200.7L879.0 212.9L877.5 225.2L876.3 237.4L875.2 249.7L874.1 261.9L873.7 274.2L873.3 286.4L872.9 298.7L872.9 310.9L872.9 323.1L873.0 335.4L873.1 347.6L873.2 359.9L873.3 372.1L873.3 384.4L873.4 396.6L873.5 408.9L873.7 421.1L874.0 433.4L874.3 445.6L874.6 457.9L874.8 470.1L875.1 482.4L875.4 494.6L875.8 506.8L876.2 519.1L876.7 531.3L877.2 543.6L877.7 555.8L878.2 568.1L878.6 580.3L879.1 592.6L879.6 604.8L880.1 617.1L880.6 629.3L881.2 641.6L881.8 653.8L882.4 666.1L883.1 678.3L883.7 690.5L884.3 702.8L884.9 715.0L885.6 727.3L886.2 739.5L886.8 751.8L887.7 764.0L888.6 776.3L889.6 788.5L890.6 800.8L891.5 813.0L892.5 825.3L893.5 837.5L894.4 849.8L895.4 862.0L903.6 867.5L911.7 872.7L919.9 877.6L928.1 882.3L936.2 886.7L944.4 890.8L952.6 894.6L960.7 898.1L968.9 901.4L977.1 904.4L985.2 907.1L993.4 909.5L992.6 896.7L991.8 883.9L990.9 871.0L990.1 858.2L989.3 845.4L988.5 832.6L987.6 819.7L986.8 806.9L986.0 794.1L985.2 781.2L984.4 768.4L983.7 755.6L982.9 742.8L982.2 729.9L981.4 717.1L980.7 704.3L980.0 691.5L979.2 678.6L978.5 665.8L977.7 653.0L977.0 640.2L976.3 627.3L975.5 614.5L974.7 601.7L974.0 588.9L973.2 576.0L972.5 563.2L971.7 550.4L970.9 537.6L970.2 524.8L969.4 511.9L968.7 499.1L968.2 486.3L967.7 473.4L967.3 460.6L966.8 447.8L966.3 435.0L965.9 422.2L965.4 409.3L965.0 396.5L964.5 383.7L964.0 370.9L963.7 358.0L963.3 345.2L962.9 332.4L962.6 319.5L962.2 306.7L961.8 293.9L961.5 281.1L961.1 268.2L960.7 255.4L960.4 242.6L960.0 229.8L959.1 216.9L958.1 204.1L957.2 191.3L956.2 178.5L955.2 165.7L954.3 152.8L953.3 140.0L948.4 138.9L943.4 137.9L938.5 136.8L933.6 135.7L928.7 134.7L923.8 133.6L918.8 132.5L913.9 131.5L909.0 130.4L904.1 129.3L899.1 128.3Z" fill="none" stroke="#a8a8a8" stroke-width="2" stroke-linejoin="round"/>
<path d="M894.7 852.6C902.8 855.6 927.0 864.9 943.2 870.6C959.4 876.3 983.7 883.9 991.8 886.6M894.7 852.6C902.8 855.6 927.0 864.9 943.2 870.6C959.4 876.3 983.7 883.9 991.8 886.6M893.1 833.0C901.2 836.0 925.6 845.4 941.8 851.1C958.1 856.7 982.4 864.4 990.5 867.1M893.1 833.0C901.2 836.0 925.6 845.4 941.8 851.1C958.1 856.7 982.4 864.4 990.5 867.1M891.3 809.8C899.4 812.8 923.9 822.2 940.2 827.9C956.5 833.6 980.9 841.3 989.1 844.0M891.3 809.8C899.4 812.8 923.9 822.2 940.2 827.9C956.5 833.6 980.9 841.3 989.1 844.0M889.0 781.3C897.2 784.3 921.8 793.8 938.1 799.5C954.5 805.2 979.0 813.0 987.2 815.7M889.0 781.3C897.2 784.3 921.8 793.8 938.1 799.5C954.5 805.2 979.0 813.0 987.2 815.7M886.9 752.8C895.1 755.8 919.7 765.3 936.1 771.0C952.6 776.8 977.2 784.6 985.4 787.3M886.9 752.8C895.1 755.8 919.7 765.3 936.1 771.0C952.6 776.8 977.2 784.6 985.4 787.3M885.2 720.4C893.4 723.4 918.0 732.9 934.3 738.6C950.7 744.3 975.3 752.1 983.5 754.8M885.2 720.4C893.4 723.4 918.0 732.9 934.3 738.6C950.7 744.3 975.3 752.1 983.5 754.8M883.6 688.0C891.7 691.0 916.2 700.5 932.6 706.2C948.9 712.0 973.4 719.8 981.6 722.5M883.6 688.0C891.7 691.0 916.2 700.5 932.6 706.2C948.9 712.0 973.4 719.8 981.6 722.5M881.8 654.0C890.0 657.1 914.4 666.6 930.7 672.5C947.0 678.3 971.5 686.2 979.6 688.9M881.8 654.0C890.0 657.1 914.4 666.6 930.7 672.5C947.0 678.3 971.5 686.2 979.6 688.9M880.3 621.7C888.4 624.8 912.8 634.5 929.0 640.3C945.3 646.2 969.7 654.2 977.8 657.0M880.3 621.7C888.4 624.8 912.8 634.5 929.0 640.3C945.3 646.2 969.7 654.2 977.8 657.0M878.9 588.0C887.0 591.1 911.2 600.8 927.4 606.8C943.5 612.7 967.8 620.7 975.8 623.5M878.0 564.7C886.1 567.8 910.2 577.6 926.2 583.6C942.3 589.5 966.4 597.6 974.4 600.4M877.3 546.7C885.3 549.9 909.3 559.6 925.3 565.6C941.4 571.6 965.4 579.7 973.4 582.5M876.6 528.6C884.6 531.8 908.5 541.6 924.5 547.6C940.4 553.6 964.3 561.7 972.3 564.5M875.9 510.5C883.9 513.7 907.7 523.5 923.6 529.5C939.5 535.5 963.3 543.7 971.2 546.6M875.4 494.0C883.3 497.2 907.0 507.1 922.8 513.2C938.6 519.2 962.3 527.5 970.2 530.3M875.0 476.0C882.8 479.2 906.4 489.3 922.1 495.4C937.8 501.6 961.3 510.0 969.2 512.9M874.6 460.5C882.4 463.8 905.9 474.0 921.5 480.2C937.2 486.4 960.6 494.9 968.4 497.9M874.2 440.0C881.9 443.3 905.3 453.7 920.9 460.1C936.5 466.4 959.9 475.1 967.7 478.2M873.8 423.0C881.5 426.4 904.9 436.9 920.4 443.4C936.0 449.9 959.3 458.7 967.1 461.8M12.0 784.6C22.5 785.3 54.0 787.2 75.1 788.5C96.1 789.9 117.1 791.2 138.1 792.6C159.2 794.0 180.2 795.3 201.2 796.8C222.2 798.2 243.3 799.7 264.3 801.2C285.3 802.7 306.3 804.2 327.4 805.8C348.4 807.4 369.4 809.0 390.4 810.7C411.5 812.4 432.5 814.2 453.5 816.0C474.5 817.9 495.5 819.7 516.6 821.8C537.6 823.8 558.6 825.8 579.6 828.0C600.7 830.2 621.7 832.5 642.7 835.0C663.7 837.5 684.8 840.0 705.8 842.8C726.8 845.6 747.8 848.5 768.9 851.7C789.9 854.8 810.9 858.2 831.9 861.8C853.0 865.4 876.7 868.1 895.0 873.5C913.3 878.9 925.4 887.8 941.5 894.0C957.6 900.2 983.2 907.8 991.5 910.5M12.0 786.6C22.5 787.1 54.0 788.5 75.1 789.5C96.1 790.5 117.1 791.5 138.1 792.6C159.2 793.6 180.2 794.7 201.2 795.8C222.2 796.9 243.3 798.1 264.3 799.3C285.3 800.5 306.3 801.8 327.4 803.1C348.4 804.4 369.4 805.8 390.4 807.2C411.5 808.7 432.5 810.2 453.5 811.9C474.5 813.5 495.5 815.2 516.6 817.1C537.6 818.9 558.6 820.9 579.6 823.0C600.7 825.1 621.7 827.4 642.7 829.8C663.7 832.3 684.8 834.9 705.8 837.8C726.8 840.7 747.8 843.7 768.9 847.2C789.9 850.6 810.9 854.2 831.9 858.2C853.0 862.3 876.7 865.8 895.0 871.5C913.3 877.2 925.4 886.1 941.5 892.5C957.6 898.9 983.2 906.8 991.5 909.7M12.0 786.6C22.5 786.9 54.0 788.0 75.1 788.7C96.1 789.4 117.1 790.2 138.1 791.0C159.2 791.8 180.2 792.6 201.2 793.5C222.2 794.4 243.3 795.3 264.3 796.3C285.3 797.3 306.3 798.3 327.4 799.5C348.4 800.6 369.4 801.8 390.4 803.1C411.5 804.3 432.5 805.7 453.5 807.2C474.5 808.7 495.5 810.3 516.6 812.0C537.6 813.8 558.6 815.6 579.6 817.7C600.7 819.8 621.7 822.0 642.7 824.5C663.7 827.0 684.8 829.7 705.8 832.7C726.8 835.7 747.8 838.9 768.9 842.6C789.9 846.3 810.9 850.2 831.9 854.7C853.0 859.2 876.7 863.4 895.0 869.5C913.3 875.6 925.4 884.4 941.5 891.0C957.6 897.6 983.2 905.9 991.5 908.9M12.0 786.5C22.5 786.7 54.0 787.4 75.1 787.9C96.1 788.4 117.1 789.0 138.1 789.5C159.2 790.1 180.2 790.7 201.2 791.4C222.2 792.0 243.3 792.7 264.3 793.5C285.3 794.3 306.3 795.1 327.4 796.1C348.4 797.0 369.4 798.0 390.4 799.1C411.5 800.2 432.5 801.4 453.5 802.7C474.5 804.1 495.5 805.5 516.6 807.2C537.6 808.8 558.6 810.6 579.6 812.6C600.7 814.7 621.7 816.8 642.7 819.4C663.7 821.9 684.8 824.6 705.8 827.7C726.8 830.8 747.8 834.2 768.9 838.1C789.9 842.0 810.9 846.3 831.9 851.2C853.0 856.0 876.7 861.1 895.0 867.5C913.3 873.9 925.4 882.7 941.5 889.5C957.6 896.3 983.2 905.0 991.5 908.1M12.0 788.0C22.5 788.1 54.0 788.4 75.1 788.7C96.1 788.9 117.1 789.2 138.1 789.5C159.2 789.8 180.2 790.1 201.2 790.5C222.2 791.0 243.3 791.4 264.3 791.9C285.3 792.5 306.3 793.1 327.4 793.7C348.4 794.4 369.4 795.2 390.4 796.1C411.5 797.0 432.5 798.0 453.5 799.1C474.5 800.3 495.5 801.5 516.6 803.0C537.6 804.5 558.6 806.2 579.6 808.1C600.7 810.0 621.7 812.1 642.7 814.6C663.7 817.1 684.8 819.8 705.8 823.0C726.8 826.2 747.8 829.7 768.9 833.8C789.9 837.9 810.9 842.4 831.9 847.7C853.0 852.9 876.7 858.8 895.0 865.5C913.3 872.2 925.4 881.0 941.5 888.0C957.6 895.0 983.2 904.1 991.5 907.3M12.0 777.9C22.5 778.0 54.0 778.1 75.1 778.3C96.1 778.4 117.1 778.6 138.1 778.9C159.2 779.1 180.2 779.4 201.2 779.7C222.2 780.1 243.3 780.5 264.3 781.0C285.3 781.4 306.3 782.0 327.4 782.6C348.4 783.3 369.4 784.0 390.4 784.9C411.5 785.8 432.5 786.8 453.5 788.0C474.5 789.2 495.5 790.5 516.6 792.1C537.6 793.7 558.6 795.4 579.6 797.5C600.7 799.6 621.7 801.9 642.7 804.7C663.7 807.4 684.8 810.4 705.8 814.1C726.8 817.7 747.8 821.6 768.9 826.4C789.9 831.1 810.9 836.3 831.9 842.5C853.0 848.7 876.7 856.2 895.0 863.5C913.3 870.8 925.4 879.3 941.5 886.5C957.6 893.7 983.2 903.2 991.5 906.5M12.0 781.3C22.5 781.2 54.0 780.8 75.1 780.5C96.1 780.3 117.1 780.2 138.1 780.0C159.2 779.9 180.2 779.8 201.2 779.8C222.2 779.8 243.3 779.8 264.3 780.0C285.3 780.1 306.3 780.3 327.4 780.6C348.4 780.9 369.4 781.4 390.4 781.9C411.5 782.5 432.5 783.2 453.5 784.1C474.5 785.0 495.5 786.1 516.6 787.4C537.6 788.8 558.6 790.3 579.6 792.3C600.7 794.2 621.7 796.4 642.7 799.1C663.7 801.8 684.8 804.8 705.8 808.6C726.8 812.3 747.8 816.4 768.9 821.5C789.9 826.6 810.9 832.2 831.9 839.0C853.0 845.8 876.7 854.8 895.0 862.5C913.3 870.2 925.4 877.8 941.5 885.0C957.6 892.2 983.2 902.2 991.5 905.7M873.3 386.7C881.0 389.0 904.1 396.0 919.4 400.6C934.8 405.2 957.8 412.1 965.5 414.3M873.2 370.0C880.9 372.3 903.8 379.3 919.1 383.8C934.3 388.4 957.3 395.2 964.9 397.5M873.1 352.0C880.7 354.3 903.5 361.2 918.7 365.8C933.9 370.3 956.7 377.1 964.3 379.3M873.0 331.0C880.5 333.3 903.2 340.2 918.3 344.7C933.4 349.2 956.1 355.9 963.6 358.2M872.9 315.0C880.4 317.3 903.0 324.1 918.0 328.6C933.1 333.2 955.6 339.8 963.1 342.1M872.9 297.8C880.4 300.1 902.8 306.9 917.8 311.4C932.8 315.8 955.2 322.5 962.7 324.7M873.6 279.0C880.9 281.2 903.1 288.0 917.8 292.4C932.6 296.8 954.7 303.4 962.1 305.6M874.1 261.7C881.4 263.9 903.3 270.6 917.9 274.9C932.5 279.3 954.3 285.8 961.6 287.9M874.8 253.3C882.0 255.5 903.7 262.1 918.1 266.4C932.5 270.7 954.2 277.1 961.4 279.3M876.1 239.4C883.2 241.5 904.4 248.0 918.6 252.3C932.7 256.5 953.9 262.8 961.0 264.9M878.0 221.0C884.9 223.1 905.5 229.4 919.2 233.5C933.0 237.7 953.6 243.7 960.5 245.7M879.1 212.0C885.9 214.1 906.2 220.3 919.7 224.4C933.2 228.4 953.5 234.3 960.2 236.3M876.0 232.0C878.3 230.3 885.2 225.0 890.0 222.0C894.8 219.0 900.0 216.0 905.0 214.0C910.0 212.0 915.0 210.3 920.0 210.0C925.0 209.7 930.3 210.0 935.0 212.0C939.7 214.0 944.3 219.2 948.0 222.0C951.7 224.8 955.5 227.8 957.0 229.0M875.0 245.0C877.2 243.0 883.3 236.5 888.0 233.0C892.7 229.5 897.7 226.5 903.0 224.0C908.3 221.5 914.7 218.8 920.0 218.0C925.3 217.2 930.3 217.8 935.0 219.0C939.7 220.2 944.2 223.0 948.0 225.0C951.8 227.0 956.3 230.0 958.0 231.0M878.0 214.0C881.7 213.7 892.2 211.5 900.0 212.0C907.8 212.5 917.5 215.0 925.0 217.0C932.5 219.0 939.5 222.0 945.0 224.0C950.5 226.0 955.8 228.2 958.0 229.0" fill="none" stroke="#c08cff" stroke-width="1" shape-rendering="crispEdges"/>
<path d="M957.0 230.3L958.1 252.9L959.3 275.6L960.4 298.2L961.5 320.9L962.7 343.5L963.8 366.1L964.7 388.8L965.5 411.4L966.3 434.1L967.1 456.7L968.0 479.3L968.8 502.0L970.2 524.6L971.5 547.3L972.9 569.9L974.2 592.5L975.5 615.2L976.9 637.8L978.2 660.5L979.5 683.1L980.8 705.7L982.1 728.4L983.4 751.0L984.7 773.7L986.1 796.3L987.6 818.9L989.0 841.6L990.5 864.2L991.9 886.9L993.4 909.5L998.6 911.6L997.0 888.9L995.4 866.2L993.8 843.5L992.2 820.8L990.6 798.1L989.0 775.4L987.6 752.7L986.1 730.0L984.7 707.2L983.2 684.5L981.8 661.8L980.3 639.1L978.9 616.4L977.4 593.7L975.9 571.0L974.4 548.3L972.9 525.6L971.4 502.9L970.4 480.2L969.4 457.4L968.4 434.7L967.5 412.0L966.5 389.3L965.5 366.6L964.2 343.9L962.9 321.2L961.6 298.5L960.3 275.8L959.1 253.1L957.8 230.4Z" fill="rgb(255,35,0)"/>
<path d="M957.6 230.3L958.9 253.0L960.1 275.7L961.4 298.4L962.6 321.1L963.9 343.8L965.1 366.5L966.1 389.2L967.0 411.9L968.0 434.6L968.9 457.3L969.9 480.0L970.9 502.7L972.3 525.4L973.8 548.1L975.2 570.8L976.7 593.4L978.1 616.1L979.6 638.8L981.0 661.5L982.4 684.2L983.8 706.9L985.3 729.6L986.7 752.3L988.1 775.0L989.6 797.7L991.2 820.4L992.8 843.1L994.3 865.8L995.9 888.5L997.4 911.2L1002.6 913.2L1000.9 890.5L999.2 867.7L997.5 844.9L995.8 822.2L994.1 799.4L992.4 776.7L990.9 753.9L989.3 731.1L987.7 708.4L986.2 685.6L984.6 662.9L983.0 640.1L981.5 617.3L979.9 594.6L978.3 571.8L976.7 549.0L975.1 526.3L973.5 503.5L972.3 480.8L971.2 458.0L970.1 435.2L969.0 412.5L967.9 389.7L966.8 367.0L965.4 344.2L964.0 321.4L962.6 298.7L961.2 275.9L959.8 253.2L958.4 230.4Z" fill="rgb(255,37,0)"/>
<path d="M958.2 230.4L959.6 253.1L961.0 275.9L962.3 298.6L963.7 321.4L965.0 344.1L966.4 366.9L967.5 389.6L968.6 412.4L969.6 435.1L970.7 457.8L971.8 480.6L972.9 503.3L974.5 526.1L976.0 548.8L977.6 571.6L979.2 594.3L980.7 617.1L982.3 639.8L983.8 662.6L985.4 685.3L986.9 708.1L988.4 730.8L990.0 753.6L991.5 776.3L993.1 799.1L994.8 821.8L996.5 844.5L998.1 867.3L999.8 890.0L1001.5 912.8L1006.7 914.8L1004.9 892.0L1003.0 869.2L1001.2 846.4L999.4 823.5L997.6 800.7L995.8 777.9L994.2 755.1L992.5 732.3L990.8 709.5L989.1 686.7L987.4 663.9L985.8 641.0L984.1 618.2L982.4 595.4L980.6 572.6L978.9 549.8L977.2 527.0L975.5 504.2L974.2 481.4L973.0 458.5L971.8 435.7L970.6 412.9L969.3 390.1L968.1 367.3L966.5 344.5L965.0 321.7L963.5 298.9L962.0 276.0L960.5 253.2L959.0 230.4Z" fill="rgb(255,39,0)"/>
<path d="M958.8 230.4L960.3 253.2L961.8 276.0L963.3 298.8L964.7 321.6L966.2 344.4L967.7 367.2L968.9 390.0L970.1 412.8L971.3 435.6L972.5 458.4L973.7 481.2L974.9 504.0L976.6 526.8L978.3 549.6L980.0 572.4L981.7 595.2L983.3 618.0L985.0 640.8L986.6 663.6L988.3 686.4L989.9 709.2L991.6 732.0L993.2 754.8L994.9 777.6L996.6 800.4L998.4 823.2L1000.2 846.0L1002.0 868.8L1003.8 891.6L1005.5 914.4L1010.7 916.3L1008.8 893.4L1006.9 870.6L1005.0 847.7L1003.0 824.9L1001.1 802.0L999.2 779.1L997.4 756.3L995.6 733.4L993.8 710.6L992.1 687.7L990.3 664.8L988.5 642.0L986.7 619.1L984.8 596.2L983.0 573.4L981.2 550.5L979.4 527.7L977.5 504.8L976.2 481.9L974.8 459.1L973.4 436.2L972.1 413.3L970.7 390.5L969.3 367.6L967.7 344.8L966.1 321.9L964.5 299.0L962.9 276.2L961.2 253.3L959.6 230.5Z" fill="rgb(255,41,0)"/>
<path d="M959.5 230.4L961.0 253.3L962.6 276.1L964.2 299.0L965.8 321.8L967.4 344.7L969.0 367.5L970.3 390.4L971.7 413.2L973.0 436.1L974.3 458.9L975.6 481.8L977.0 504.6L978.8 527.5L980.6 550.3L982.3 573.2L984.1 596.0L985.9 618.9L987.7 641.7L989.5 664.6L991.2 687.4L993.0 710.3L994.8 733.1L996.5 756.0L998.3 778.8L1000.1 801.6L1002.0 824.5L1003.9 847.3L1005.8 870.2L1007.7 893.0L1009.6 915.9L1014.7 917.8L1012.7 894.9L1010.7 872.0L1008.7 849.0L1006.6 826.1L1004.6 803.2L1002.6 780.3L1000.7 757.4L998.8 734.5L996.9 711.6L995.0 688.7L993.1 665.8L991.2 642.9L989.3 620.0L987.3 597.0L985.4 574.1L983.5 551.2L981.5 528.3L979.6 505.4L978.1 482.5L976.6 459.6L975.1 436.7L973.6 413.8L972.2 390.9L970.6 367.9L968.9 345.0L967.2 322.1L965.4 299.2L963.7 276.3L962.0 253.4L960.2 230.5Z" fill="rgb(255,43,0)"/>
<path d="M960.1 230.5L961.8 253.4L963.5 276.3L965.2 299.2L966.9 322.1L968.6 345.0L970.3 367.9L971.8 390.8L973.2 413.6L974.7 436.5L976.1 459.4L977.5 482.3L979.0 505.2L980.9 528.1L982.8 551.0L984.7 573.9L986.6 596.8L988.5 619.7L990.4 642.6L992.3 665.5L994.2 688.4L996.0 711.3L997.9 734.2L999.8 757.1L1001.7 780.0L1003.6 802.9L1005.6 825.8L1007.6 848.7L1009.6 871.6L1011.6 894.5L1013.6 917.4L1018.8 919.2L1016.7 896.2L1014.5 873.3L1012.4 850.3L1010.3 827.4L1008.1 804.4L1006.0 781.5L1004.0 758.5L1002.0 735.6L1000.0 712.6L997.9 689.6L995.9 666.7L993.9 643.7L991.9 620.8L989.8 597.8L987.8 574.9L985.7 551.9L983.7 528.9L981.6 506.0L980.0 483.0L978.4 460.1L976.8 437.1L975.2 414.2L973.6 391.2L971.9 368.2L970.1 345.3L968.2 322.3L966.4 299.4L964.6 276.4L962.7 253.5L960.9 230.5Z" fill="rgb(255,44,0)"/>
<path d="M960.7 230.5L962.5 253.4L964.3 276.4L966.1 299.3L967.9 322.3L969.8 345.2L971.6 368.2L973.2 391.1L974.8 414.1L976.3 437.0L977.9 459.9L979.5 482.9L981.1 505.8L983.1 528.8L985.1 551.7L987.1 574.7L989.1 597.6L991.1 620.5L993.1 643.5L995.1 666.4L997.1 689.4L999.1 712.3L1001.1 735.3L1003.1 758.2L1005.1 781.1L1007.1 804.1L1009.2 827.0L1011.4 850.0L1013.5 872.9L1015.6 895.9L1017.7 918.8L1022.8 920.6L1020.6 897.6L1018.4 874.6L1016.1 851.6L1013.9 828.6L1011.6 805.6L1009.4 782.6L1007.3 759.6L1005.1 736.6L1003.0 713.6L1000.9 690.6L998.7 667.6L996.6 644.6L994.5 621.6L992.3 598.6L990.1 575.6L988.0 552.6L985.8 529.6L983.7 506.6L981.9 483.5L980.2 460.5L978.5 437.5L976.7 414.5L975.0 391.5L973.2 368.5L971.3 345.5L969.3 322.5L967.4 299.5L965.4 276.5L963.4 253.5L961.5 230.5Z" fill="rgb(255,46,0)"/>
<path d="M961.3 230.5L963.2 253.5L965.2 276.5L967.1 299.5L969.0 322.5L970.9 345.5L972.9 368.5L974.6 391.4L976.3 414.4L978.0 437.4L979.7 460.4L981.4 483.4L983.1 506.4L985.2 529.4L987.3 552.4L989.5 575.4L991.6 598.4L993.7 621.3L995.8 644.3L997.9 667.3L1000.0 690.3L1002.2 713.3L1004.3 736.3L1006.4 759.3L1008.5 782.3L1010.6 805.3L1012.9 828.2L1015.1 851.2L1017.3 874.2L1019.5 897.2L1021.7 920.2L1026.9 921.9L1024.5 898.9L1022.2 875.8L1019.8 852.8L1017.5 829.7L1015.1 806.7L1012.8 783.6L1010.5 760.6L1008.3 737.5L1006.1 714.5L1003.8 691.5L1001.6 668.4L999.3 645.4L997.1 622.3L994.8 599.3L992.5 576.2L990.2 553.2L988.0 530.1L985.7 507.1L983.8 484.0L982.0 461.0L980.1 438.0L978.3 414.9L976.4 391.9L974.5 368.8L972.5 345.8L970.4 322.7L968.3 299.7L966.2 276.6L964.2 253.6L962.1 230.5Z" fill="rgb(255,48,0)"/>
<path d="M961.9 230.5L964.0 253.6L966.0 276.6L968.0 299.6L970.1 322.7L972.1 345.7L974.2 368.7L976.0 391.8L977.8 414.8L979.7 437.8L981.5 460.9L983.3 483.9L985.1 506.9L987.4 530.0L989.6 553.0L991.8 576.0L994.1 599.1L996.3 622.1L998.6 645.1L1000.8 668.2L1003.0 691.2L1005.2 714.2L1007.4 737.3L1009.6 760.3L1011.8 783.3L1014.1 806.4L1016.5 829.4L1018.8 852.4L1021.1 875.5L1023.4 898.5L1025.7 921.5L1030.9 923.2L1028.5 900.1L1026.0 877.0L1023.5 853.9L1021.1 830.8L1018.6 807.8L1016.2 784.7L1013.8 761.6L1011.5 738.5L1009.1 715.4L1006.7 692.3L1004.4 669.2L1002.0 646.1L999.7 623.1L997.3 600.0L994.9 576.9L992.5 553.8L990.1 530.7L987.7 507.6L985.7 484.5L983.8 461.4L981.8 438.4L979.8 415.3L977.8 392.2L975.8 369.1L973.6 346.0L971.4 322.9L969.3 299.8L967.1 276.7L964.9 253.7L962.7 230.6Z" fill="rgb(255,50,0)"/>
<path d="M962.5 230.6L964.7 253.6L966.8 276.7L969.0 299.8L971.1 322.9L973.3 345.9L975.5 369.0L977.4 392.1L979.4 415.2L981.3 438.2L983.3 461.3L985.2 484.4L987.2 507.5L989.5 530.6L991.9 553.6L994.2 576.7L996.6 599.8L998.9 622.9L1001.3 645.9L1003.6 669.0L1005.9 692.1L1008.3 715.2L1010.6 738.2L1012.9 761.3L1015.2 784.4L1017.7 807.5L1020.1 830.5L1022.5 853.6L1024.9 876.7L1027.4 899.8L1029.8 922.8L1035.0 924.4L1032.4 901.3L1029.8 878.2L1027.3 855.1L1024.7 831.9L1022.1 808.8L1019.6 785.7L1017.1 762.5L1014.6 739.4L1012.2 716.3L1009.7 693.2L1007.2 670.0L1004.7 646.9L1002.3 623.8L999.8 600.6L997.3 577.5L994.8 554.4L992.3 531.3L989.8 508.1L987.7 485.0L985.6 461.9L983.5 438.7L981.4 415.6L979.3 392.5L977.1 369.4L974.8 346.2L972.5 323.1L970.2 300.0L967.9 276.8L965.6 253.7L963.3 230.6Z" fill="rgb(255,52,0)"/>
<path d="M963.1 230.6L965.4 253.7L967.7 276.8L969.9 299.9L972.2 323.0L974.5 346.2L976.8 369.3L978.9 392.4L980.9 415.5L983.0 438.6L985.0 461.7L987.1 484.9L989.2 508.0L991.7 531.1L994.1 554.2L996.6 577.3L999.1 600.5L1001.5 623.6L1004.0 646.7L1006.4 669.8L1008.9 692.9L1011.3 716.0L1013.7 739.2L1016.2 762.3L1018.6 785.4L1021.2 808.5L1023.7 831.6L1026.2 854.7L1028.8 877.9L1031.3 901.0L1033.8 924.1L1039.0 925.6L1036.3 902.5L1033.7 879.3L1031.0 856.1L1028.3 833.0L1025.6 809.8L1023.0 786.6L1020.4 763.5L1017.8 740.3L1015.2 717.1L1012.6 694.0L1010.0 670.8L1007.5 647.6L1004.9 624.4L1002.2 601.3L999.6 578.1L997.0 554.9L994.4 531.8L991.8 508.6L989.6 485.4L987.3 462.3L985.1 439.1L982.9 415.9L980.7 392.8L978.4 369.6L976.0 346.4L973.6 323.3L971.2 300.1L968.8 276.9L966.3 253.8L963.9 230.6Z" fill="rgb(255,56,0)"/>
<path d="M963.8 230.6L966.1 253.7L968.5 276.9L970.9 300.1L973.3 323.2L975.7 346.4L978.0 369.5L980.3 392.7L982.5 415.8L984.7 439.0L986.8 462.2L989.0 485.3L991.2 508.5L993.8 531.6L996.4 554.8L999.0 577.9L1001.5 601.1L1004.1 624.3L1006.7 647.4L1009.2 670.6L1011.8 693.7L1014.4 716.9L1016.9 740.0L1019.5 763.2L1022.0 786.4L1024.7 809.5L1027.3 832.7L1029.9 855.8L1032.6 879.0L1035.2 902.1L1037.9 925.3L1043.0 926.8L1040.3 903.6L1037.5 880.4L1034.7 857.2L1031.9 834.0L1029.1 810.8L1026.4 787.5L1023.7 764.3L1021.0 741.1L1018.3 717.9L1015.6 694.7L1012.9 671.5L1010.2 648.3L1007.5 625.1L1004.7 601.9L1002.0 578.7L999.3 555.5L996.6 532.3L993.9 509.1L991.5 485.9L989.1 462.7L986.8 439.5L984.4 416.2L982.1 393.0L979.7 369.8L977.2 346.6L974.7 323.4L972.1 300.2L969.6 277.0L967.1 253.8L964.5 230.6Z" fill="rgb(255,60,0)"/>
<path d="M964.4 230.6L966.9 253.8L969.4 277.0L971.9 300.2L974.4 323.4L976.8 346.6L979.3 369.8L981.7 393.0L984.0 416.2L986.3 439.4L988.6 462.6L990.9 485.7L993.3 508.9L996.0 532.1L998.7 555.3L1001.3 578.5L1004.0 601.7L1006.7 624.9L1009.4 648.1L1012.1 671.3L1014.7 694.5L1017.4 717.7L1020.1 740.9L1022.7 764.1L1025.4 787.3L1028.2 810.5L1030.9 833.7L1033.7 856.9L1036.4 880.1L1039.2 903.3L1041.9 926.5L1047.1 927.9L1044.2 904.6L1041.3 881.4L1038.4 858.2L1035.5 834.9L1032.6 811.7L1029.8 788.4L1026.9 765.2L1024.1 741.9L1021.3 718.7L1018.5 695.5L1015.7 672.2L1012.9 649.0L1010.1 625.7L1007.2 602.5L1004.4 579.2L1001.6 556.0L998.7 532.8L995.9 509.5L993.4 486.3L990.9 463.0L988.5 439.8L986.0 416.5L983.5 393.3L981.0 370.1L978.4 346.8L975.7 323.6L973.1 300.3L970.4 277.1L967.8 253.8L965.2 230.6Z" fill="rgb(255,65,0)"/>
<path d="M965.0 230.6L967.6 253.8L970.2 277.1L972.8 300.3L975.4 323.5L978.0 346.8L980.6 370.0L983.1 393.2L985.5 416.5L988.0 439.7L990.4 462.9L992.9 486.2L995.3 509.4L998.1 532.6L1000.9 555.9L1003.7 579.1L1006.5 602.3L1009.3 625.6L1012.1 648.8L1014.9 672.0L1017.7 695.3L1020.5 718.5L1023.2 741.7L1026.0 765.0L1028.8 788.2L1031.7 811.4L1034.5 834.6L1037.4 857.9L1040.2 881.1L1043.1 904.3L1046.0 927.6L1051.1 928.9L1048.1 905.7L1045.1 882.4L1042.1 859.1L1039.1 835.8L1036.1 812.6L1033.2 789.3L1030.2 766.0L1027.3 742.7L1024.4 719.4L1021.4 696.2L1018.5 672.9L1015.6 649.6L1012.6 626.3L1009.7 603.0L1006.8 579.8L1003.8 556.5L1000.9 533.2L997.9 509.9L995.3 486.7L992.7 463.4L990.1 440.1L987.5 416.8L984.9 393.5L982.3 370.3L979.5 347.0L976.8 323.7L974.0 300.4L971.3 277.2L968.5 253.9L965.8 230.6Z" fill="rgb(255,70,0)"/>
<path d="M965.6 230.6L968.3 253.9L971.0 277.1L973.8 300.4L976.5 323.7L979.2 346.9L981.9 370.2L984.5 393.5L987.1 416.7L989.7 440.0L992.2 463.3L994.8 486.6L997.4 509.8L1000.3 533.1L1003.2 556.4L1006.1 579.6L1009.0 602.9L1011.9 626.2L1014.8 649.4L1017.7 672.7L1020.6 696.0L1023.5 719.2L1026.4 742.5L1029.3 765.8L1032.2 789.0L1035.2 812.3L1038.1 835.6L1041.1 858.8L1044.1 882.1L1047.0 905.4L1050.0 928.6L1055.2 930.0L1052.1 906.6L1049.0 883.3L1045.9 860.0L1042.7 836.7L1039.6 813.4L1036.5 790.1L1033.5 766.8L1030.5 743.5L1027.4 720.1L1024.4 696.8L1021.3 673.5L1018.3 650.2L1015.2 626.9L1012.2 603.6L1009.1 580.3L1006.1 557.0L1003.0 533.7L1000.0 510.3L997.2 487.0L994.5 463.7L991.8 440.4L989.1 417.1L986.3 393.8L983.6 370.5L980.7 347.2L977.9 323.8L975.0 300.5L972.1 277.2L969.3 253.9L966.4 230.6Z" fill="rgb(255,74,0)"/>
<path d="M966.2 230.6L969.0 253.9L971.9 277.2L974.7 300.5L977.6 323.8L980.4 347.1L983.2 370.4L985.9 393.7L988.6 417.0L991.3 440.3L994.0 463.6L996.7 486.9L999.4 510.2L1002.4 533.5L1005.4 556.8L1008.5 580.1L1011.5 603.4L1014.5 626.7L1017.5 650.0L1020.5 673.3L1023.6 696.6L1026.6 720.0L1029.6 743.3L1032.6 766.6L1035.6 789.9L1038.7 813.2L1041.7 836.5L1044.8 859.8L1047.9 883.1L1051.0 906.4L1054.0 929.7L1059.2 930.9L1056.0 907.6L1052.8 884.2L1049.6 860.9L1046.4 837.5L1043.1 814.2L1039.9 790.9L1036.8 767.5L1033.6 744.2L1030.5 720.8L1027.3 697.5L1024.2 674.1L1021.0 650.8L1017.8 627.4L1014.7 604.1L1011.5 580.8L1008.3 557.4L1005.2 534.1L1002.0 510.7L999.1 487.4L996.3 464.0L993.5 440.7L990.6 417.3L987.8 394.0L984.9 370.7L981.9 347.3L978.9 324.0L975.9 300.6L973.0 277.3L970.0 253.9L967.0 230.6Z" fill="rgb(255,79,0)"/>
<path d="M966.8 230.6L969.8 253.9L972.7 277.3L975.7 300.6L978.6 323.9L981.6 347.3L984.5 370.6L987.4 393.9L990.2 417.3L993.0 440.6L995.8 463.9L998.6 487.3L1001.4 510.6L1004.6 534.0L1007.7 557.3L1010.8 580.6L1014.0 604.0L1017.1 627.3L1020.3 650.6L1023.4 674.0L1026.5 697.3L1029.6 720.6L1032.7 744.0L1035.9 767.3L1039.0 790.6L1042.2 814.0L1045.3 837.3L1048.5 860.6L1051.7 884.0L1054.9 907.3L1058.1 930.7L1063.3 931.8L1059.9 908.5L1056.6 885.1L1053.3 861.7L1050.0 838.3L1046.6 815.0L1043.3 791.6L1040.1 768.2L1036.8 744.8L1033.5 721.5L1030.3 698.1L1027.0 674.7L1023.7 651.3L1020.4 628.0L1017.2 604.6L1013.9 581.2L1010.6 557.8L1007.3 534.5L1004.1 511.1L1001.1 487.7L998.1 464.3L995.1 441.0L992.1 417.6L989.2 394.2L986.2 370.8L983.1 347.5L980.0 324.1L976.9 300.7L973.8 277.3L970.7 254.0L967.6 230.6Z" fill="rgb(255,83,0)"/>
<path d="M967.4 230.6L970.5 254.0L973.6 277.3L976.6 300.7L979.7 324.1L982.8 347.4L985.8 370.8L988.8 394.2L991.7 417.5L994.7 440.9L997.6 464.3L1000.5 487.6L1003.5 511.0L1006.7 534.4L1010.0 557.7L1013.2 581.1L1016.5 604.5L1019.7 627.8L1023.0 651.2L1026.2 674.6L1029.4 697.9L1032.7 721.3L1035.9 744.7L1039.1 768.0L1042.4 791.4L1045.7 814.7L1049.0 838.1L1052.2 861.5L1055.5 884.8L1058.8 908.2L1062.1 931.6L1067.3 932.7L1063.9 909.3L1060.4 885.9L1057.0 862.5L1053.6 839.1L1050.1 815.7L1046.7 792.3L1043.3 768.9L1040.0 745.5L1036.6 722.1L1033.2 698.7L1029.8 675.3L1026.4 651.9L1023.0 628.4L1019.7 605.0L1016.3 581.6L1012.9 558.2L1009.5 534.8L1006.1 511.4L1003.0 488.0L999.9 464.6L996.8 441.2L993.7 417.8L990.6 394.4L987.5 371.0L984.3 347.6L981.1 324.2L977.9 300.8L974.6 277.4L971.4 254.0L968.2 230.6Z" fill="rgb(255,89,0)"/>
<path d="M968.1 230.6L971.2 254.0L974.4 277.4L977.6 300.8L980.8 324.2L983.9 347.6L987.1 371.0L990.2 394.4L993.3 417.7L996.3 441.1L999.4 464.5L1002.4 487.9L1005.5 511.3L1008.9 534.7L1012.2 558.1L1015.6 581.5L1019.0 604.9L1022.3 628.3L1025.7 651.7L1029.0 675.1L1032.4 698.5L1035.7 721.9L1039.1 745.3L1042.4 768.7L1045.8 792.1L1049.2 815.5L1052.6 838.9L1056.0 862.3L1059.4 885.7L1062.8 909.1L1066.2 932.5L1071.3 933.5L1067.8 910.1L1064.3 886.7L1060.7 863.2L1057.2 839.8L1053.6 816.4L1050.1 792.9L1046.6 769.5L1043.1 746.1L1039.6 722.6L1036.1 699.2L1032.6 675.8L1029.1 652.3L1025.6 628.9L1022.1 605.5L1018.6 582.0L1015.1 558.6L1011.6 535.2L1008.1 511.7L1004.9 488.3L1001.7 464.9L998.5 441.5L995.2 418.0L992.0 394.6L988.8 371.2L985.4 347.7L982.1 324.3L978.8 300.9L975.5 277.4L972.2 254.0L968.8 230.6Z" fill="rgb(255,96,0)"/>
<path d="M968.7 230.6L972.0 254.0L975.2 277.4L978.5 300.8L981.8 324.3L985.1 347.7L988.4 371.1L991.6 394.5L994.8 418.0L998.0 441.4L1001.2 464.8L1004.4 488.2L1007.6 511.7L1011.0 535.1L1014.5 558.5L1018.0 581.9L1021.4 605.4L1024.9 628.8L1028.4 652.2L1031.8 675.6L1035.3 699.1L1038.8 722.5L1042.2 745.9L1045.7 769.3L1049.2 792.8L1052.7 816.2L1056.2 839.6L1059.7 863.0L1063.2 886.5L1066.7 909.9L1070.2 933.3L1075.4 934.3L1071.7 910.9L1068.1 887.4L1064.4 863.9L1060.8 840.5L1057.1 817.0L1053.5 793.6L1049.9 770.1L1046.3 746.6L1042.7 723.2L1039.1 699.7L1035.5 676.3L1031.9 652.8L1028.2 629.3L1024.6 605.9L1021.0 582.4L1017.4 559.0L1013.8 535.5L1010.2 512.1L1006.8 488.6L1003.5 465.1L1000.1 441.7L996.8 418.2L993.4 394.8L990.1 371.3L986.6 347.8L983.2 324.4L979.8 300.9L976.3 277.5L972.9 254.0L969.5 230.5Z" fill="rgb(255,102,0)"/>
<path d="M969.3 230.5L972.7 254.0L976.1 277.4L979.5 300.9L982.9 324.4L986.3 347.8L989.7 371.3L993.0 394.7L996.3 418.2L999.7 441.6L1003.0 465.1L1006.3 488.5L1009.6 512.0L1013.2 535.4L1016.8 558.9L1020.3 582.3L1023.9 605.8L1027.5 629.2L1031.1 652.7L1034.7 676.1L1038.2 699.6L1041.8 723.0L1045.4 746.5L1049.0 769.9L1052.6 793.4L1056.2 816.8L1059.8 840.3L1063.4 863.7L1067.0 887.2L1070.6 910.7L1074.3 934.1L1079.4 935.1L1075.7 911.6L1071.9 888.1L1068.2 864.6L1064.4 841.1L1060.6 817.6L1056.9 794.1L1053.2 770.7L1049.5 747.2L1045.7 723.7L1042.0 700.2L1038.3 676.7L1034.6 653.2L1030.8 629.8L1027.1 606.3L1023.4 582.8L1019.6 559.3L1015.9 535.8L1012.2 512.3L1008.7 488.8L1005.3 465.4L1001.8 441.9L998.3 418.4L994.8 394.9L991.4 371.4L987.8 347.9L984.3 324.5L980.7 301.0L977.2 277.5L973.6 254.0L970.1 230.5Z" fill="rgb(255,109,0)"/>
<path d="M969.9 230.5L973.4 254.0L976.9 277.5L980.4 301.0L984.0 324.4L987.5 347.9L991.0 371.4L994.4 394.9L997.9 418.3L1001.3 441.8L1004.8 465.3L1008.2 488.8L1011.6 512.3L1015.3 535.7L1019.0 559.2L1022.7 582.7L1026.4 606.2L1030.1 629.6L1033.8 653.1L1037.5 676.6L1041.2 700.1L1044.9 723.6L1048.6 747.0L1052.3 770.5L1055.9 794.0L1059.7 817.5L1063.4 840.9L1067.1 864.4L1070.8 887.9L1074.6 911.4L1078.3 934.8L1083.5 935.7L1079.6 912.2L1075.7 888.7L1071.9 865.2L1068.0 841.7L1064.2 818.2L1060.3 794.7L1056.5 771.2L1052.6 747.7L1048.8 724.2L1044.9 700.7L1041.1 677.2L1037.3 653.6L1033.4 630.1L1029.6 606.6L1025.8 583.1L1021.9 559.6L1018.1 536.1L1014.3 512.6L1010.6 489.1L1007.0 465.6L1003.5 442.1L999.9 418.6L996.3 395.1L992.7 371.5L989.0 348.0L985.3 324.5L981.7 301.0L978.0 277.5L974.3 254.0L970.7 230.5Z" fill="rgb(255,115,0)"/>
<path d="M970.5 230.5L974.1 254.0L977.8 277.5L981.4 301.0L985.0 324.5L988.7 348.0L992.3 371.5L995.9 395.0L999.4 418.5L1003.0 442.0L1006.5 465.5L1010.1 489.0L1013.7 512.5L1017.5 536.0L1021.3 559.5L1025.1 583.0L1028.9 606.5L1032.7 630.0L1036.5 653.5L1040.3 677.0L1044.1 700.5L1047.9 724.0L1051.7 747.5L1055.5 771.0L1059.3 794.5L1063.2 818.0L1067.0 841.5L1070.8 865.0L1074.7 888.5L1078.5 912.1L1082.3 935.6L1087.5 936.4L1083.5 912.9L1079.6 889.3L1075.6 865.8L1071.6 842.3L1067.7 818.7L1063.7 795.2L1059.7 771.7L1055.8 748.1L1051.8 724.6L1047.9 701.1L1043.9 677.5L1040.0 654.0L1036.0 630.5L1032.1 607.0L1028.1 583.4L1024.2 559.9L1020.2 536.4L1016.3 512.8L1012.6 489.3L1008.8 465.8L1005.1 442.2L1001.4 418.7L997.7 395.2L993.9 371.7L990.2 348.1L986.4 324.6L982.6 301.1L978.8 277.5L975.1 254.0L971.3 230.5Z" fill="rgb(255,124,0)"/>
<path d="M971.1 230.5L974.9 254.0L978.6 277.5L982.4 301.0L986.1 324.6L989.8 348.1L993.6 371.6L997.3 395.1L1001.0 418.7L1004.7 442.2L1008.3 465.7L1012.0 489.2L1015.7 512.8L1019.6 536.3L1023.5 559.8L1027.5 583.3L1031.4 606.9L1035.3 630.4L1039.2 653.9L1043.1 677.4L1047.1 701.0L1051.0 724.5L1054.9 748.0L1058.8 771.5L1062.7 795.1L1066.7 818.6L1070.6 842.1L1074.6 865.6L1078.5 889.2L1082.4 912.7L1086.4 936.2L1091.6 937.0L1087.5 913.4L1083.4 889.9L1079.3 866.3L1075.2 842.8L1071.2 819.2L1067.1 795.7L1063.0 772.1L1059.0 748.6L1054.9 725.0L1050.8 701.5L1046.8 677.9L1042.7 654.4L1038.6 630.8L1034.6 607.3L1030.5 583.7L1026.4 560.2L1022.4 536.6L1018.3 513.1L1014.5 489.5L1010.6 466.0L1006.8 442.4L1002.9 418.8L999.1 395.3L995.2 371.7L991.4 348.2L987.5 324.6L983.6 301.1L979.7 277.5L975.8 254.0L971.9 230.4Z" fill="rgb(255,138,0)"/>
<path d="M971.7 230.4L975.6 254.0L979.5 277.5L983.3 301.1L987.2 324.6L991.0 348.2L994.9 371.7L998.7 395.3L1002.5 418.8L1006.3 442.4L1010.1 465.9L1013.9 489.4L1017.8 513.0L1021.8 536.5L1025.8 560.1L1029.8 583.6L1033.9 607.2L1037.9 630.7L1041.9 654.3L1046.0 677.8L1050.0 701.4L1054.0 724.9L1058.1 748.5L1062.1 772.0L1066.1 795.5L1070.2 819.1L1074.2 842.6L1078.3 866.2L1082.3 889.7L1086.4 913.3L1090.4 936.8L1095.6 937.5L1091.4 914.0L1087.2 890.4L1083.0 866.8L1078.8 843.2L1074.7 819.7L1070.5 796.1L1066.3 772.5L1062.1 749.0L1057.9 725.4L1053.8 701.8L1049.6 678.3L1045.4 654.7L1041.2 631.1L1037.1 607.5L1032.9 584.0L1028.7 560.4L1024.5 536.8L1020.4 513.3L1016.4 489.7L1012.4 466.1L1008.5 442.5L1004.5 419.0L1000.5 395.4L996.5 371.8L992.5 348.3L988.5 324.7L984.5 301.1L980.5 277.5L976.5 254.0L972.5 230.4Z" fill="rgb(255,153,0)"/>
<path d="M972.4 230.4L976.3 254.0L980.3 277.5L984.3 301.1L988.2 324.7L992.2 348.2L996.2 371.8L1000.1 395.4L1004.1 418.9L1008.0 442.5L1011.9 466.1L1015.9 489.6L1019.8 513.2L1023.9 536.8L1028.1 560.3L1032.2 583.9L1036.4 607.5L1040.5 631.0L1044.7 654.6L1048.8 678.2L1052.9 701.7L1057.1 725.3L1061.2 748.9L1065.4 772.4L1069.5 796.0L1073.7 819.6L1077.8 843.1L1082.0 866.7L1086.2 890.3L1090.3 913.8L1094.5 937.4L1099.6 938.0L1095.3 914.4L1091.1 890.9L1086.8 867.3L1082.5 843.7L1078.2 820.1L1073.9 796.5L1069.6 772.9L1065.3 749.3L1061.0 725.7L1056.7 702.1L1052.4 678.6L1048.1 655.0L1043.8 631.4L1039.5 607.8L1035.3 584.2L1031.0 560.6L1026.7 537.0L1022.4 513.4L1018.3 489.8L1014.2 466.3L1010.1 442.7L1006.0 419.1L1001.9 395.5L997.8 371.9L993.7 348.3L989.6 324.7L985.5 301.1L981.4 277.5L977.3 254.0L973.1 230.4Z" fill="rgb(255,172,0)"/>
<path d="M973.0 230.4L977.1 254.0L981.1 277.5L985.2 301.1L989.3 324.7L993.4 348.3L997.5 371.9L1001.5 395.5L1005.6 419.1L1009.7 442.6L1013.7 466.2L1017.8 489.8L1021.8 513.4L1026.1 537.0L1030.3 560.6L1034.6 584.1L1038.8 607.7L1043.1 631.3L1047.4 654.9L1051.6 678.5L1055.9 702.1L1060.1 725.6L1064.4 749.2L1068.7 772.8L1072.9 796.4L1077.2 820.0L1081.4 843.6L1085.7 867.1L1090.0 890.7L1094.2 914.3L1098.5 937.9L1103.7 938.5L1099.3 914.9L1094.9 891.3L1090.5 867.7L1086.1 844.1L1081.7 820.5L1077.3 796.9L1072.8 773.3L1068.4 749.7L1064.0 726.0L1059.6 702.4L1055.2 678.8L1050.8 655.2L1046.4 631.6L1042.0 608.0L1037.6 584.4L1033.2 560.8L1028.8 537.2L1024.4 513.6L1020.2 490.0L1016.0 466.4L1011.8 442.8L1007.6 419.2L1003.3 395.6L999.1 372.0L994.9 348.4L990.7 324.8L986.4 301.1L982.2 277.5L978.0 253.9L973.8 230.3Z" fill="rgb(255,213,0)"/>
<path d="M973.6 230.3L977.8 253.9L982.0 277.5L986.2 301.1L990.4 324.7L994.6 348.3L998.8 371.9L1002.9 395.5L1007.1 419.1L1011.3 442.8L1015.5 466.4L1019.7 490.0L1023.9 513.6L1028.2 537.2L1032.6 560.8L1037.0 584.4L1041.3 608.0L1045.7 631.6L1050.1 655.2L1054.4 678.8L1058.8 702.4L1063.2 726.0L1067.6 749.6L1071.9 773.2L1076.3 796.8L1080.7 820.4L1085.1 844.0L1089.4 867.6L1093.8 891.2L1098.2 914.8L1102.6 938.4L1106.6 938.8L1102.1 915.2L1097.6 891.6L1093.1 868.0L1088.7 844.3L1084.2 820.7L1079.7 797.1L1075.2 773.5L1070.7 749.9L1066.2 726.2L1061.8 702.6L1057.3 679.0L1052.8 655.4L1048.3 631.8L1043.8 608.2L1039.3 584.5L1034.9 560.9L1030.4 537.3L1025.9 513.7L1021.6 490.1L1017.3 466.5L1013.0 442.9L1008.7 419.2L1004.4 395.6L1000.1 372.0L995.7 348.4L991.4 324.8L987.1 301.1L982.8 277.5L978.5 253.9L974.2 230.3Z" fill="rgb(233,243,24)"/>
<path d="M957.2 230.3L958.1 247.3L959.0 264.3L959.9 281.3L960.7 298.3L961.6 315.3L962.5 332.3L963.4 349.3L964.3 366.3L965.0 383.3L965.6 400.3L966.3 417.3L966.9 434.2L967.5 451.2L968.2 468.2L968.8 485.2L969.5 502.2L970.6 519.2L971.6 536.2L972.6 553.2L973.7 570.2L974.7 587.2L975.8 604.2L976.8 621.2L977.8 638.2L978.8 655.2L979.8 672.2L980.8 689.2L981.9 706.2L982.9 723.2L983.9 740.1L984.9 757.1L985.9 774.1L987.0 791.1L988.1 808.1L989.2 825.1L990.3 842.1L991.5 859.1L992.6 876.1L993.7 893.1L994.8 910.1M957.9 230.4L958.8 247.4L959.8 264.4L960.8 281.5L961.7 298.5L962.7 315.5L963.7 332.6L964.6 349.6L965.6 366.6L966.4 383.7L967.1 400.7L967.9 417.8L968.6 434.8L969.4 451.8L970.1 468.9L970.9 485.9L971.6 502.9L972.8 520.0L973.9 537.0L975.0 554.0L976.1 571.1L977.3 588.1L978.4 605.1L979.5 622.2L980.6 639.2L981.7 656.3L982.8 673.3L983.9 690.3L985.0 707.4L986.1 724.4L987.2 741.4L988.3 758.5L989.4 775.5L990.6 792.5L991.8 809.6L993.0 826.6L994.2 843.7L995.4 860.7L996.6 877.7L997.8 894.8L999.0 911.8M958.9 230.4L960.0 247.5L961.1 264.6L962.2 281.7L963.3 298.8L964.4 315.9L965.5 333.0L966.7 350.1L967.8 367.2L968.7 384.3L969.6 401.4L970.5 418.5L971.4 435.6L972.3 452.7L973.2 469.8L974.1 486.9L975.0 504.0L976.3 521.1L977.6 538.2L978.8 555.3L980.1 572.4L981.4 589.5L982.6 606.6L983.9 623.7L985.1 640.8L986.4 657.9L987.6 675.0L988.9 692.1L990.1 709.2L991.3 726.3L992.6 743.4L993.8 760.5L995.1 777.6L996.4 794.7L997.7 811.8L999.1 828.9L1000.4 846.0L1001.7 863.1L1003.1 880.2L1004.4 897.3L1005.7 914.4M960.2 230.5L961.5 247.7L962.8 264.8L964.1 282.0L965.4 299.2L966.7 316.4L968.0 333.6L969.3 350.8L970.6 367.9L971.8 385.1L972.9 402.3L974.0 419.5L975.1 436.7L976.2 453.9L977.3 471.0L978.4 488.2L979.6 505.4L981.0 522.6L982.5 539.8L983.9 556.9L985.4 574.1L986.8 591.3L988.3 608.5L989.7 625.7L991.2 642.9L992.6 660.0L994.0 677.2L995.4 694.4L996.9 711.6L998.3 728.8L999.7 745.9L1001.2 763.1L1002.6 780.3L1004.1 797.5L1005.6 814.7L1007.1 831.9L1008.6 849.0L1010.2 866.2L1011.7 883.4L1013.2 900.6L1014.7 917.8M961.9 230.5L963.4 247.8L964.9 265.1L966.4 282.4L968.0 299.6L969.5 316.9L971.0 334.2L972.5 351.5L974.1 368.7L975.5 386.0L976.8 403.3L978.2 420.5L979.5 437.8L980.9 455.1L982.2 472.4L983.6 489.6L985.0 506.9L986.6 524.2L988.3 541.4L990.0 558.7L991.7 576.0L993.3 593.3L995.0 610.5L996.7 627.8L998.4 645.1L1000.0 662.4L1001.7 679.6L1003.3 696.9L1005.0 714.2L1006.6 731.4L1008.3 748.7L1009.9 766.0L1011.6 783.3L1013.3 800.5L1015.0 817.8L1016.8 835.1L1018.5 852.4L1020.2 869.6L1022.0 886.9L1023.7 904.2L1025.4 921.4M963.7 230.6L965.5 247.9L967.2 265.3L969.0 282.7L970.8 300.0L972.6 317.4L974.3 334.8L976.1 352.1L977.9 369.5L979.6 386.9L981.2 404.2L982.8 421.6L984.5 439.0L986.1 456.3L987.7 473.7L989.4 491.1L991.0 508.4L992.9 525.8L994.8 543.1L996.8 560.5L998.7 577.9L1000.6 595.2L1002.5 612.6L1004.5 630.0L1006.4 647.3L1008.3 664.7L1010.2 682.1L1012.1 699.4L1014.0 716.8L1015.9 734.2L1017.8 751.5L1019.7 768.9L1021.6 786.3L1023.6 803.6L1025.6 821.0L1027.5 838.3L1029.5 855.7L1031.5 873.1L1033.5 890.4L1035.4 907.8L1037.4 925.2M965.6 230.6L967.6 248.1L969.7 265.5L971.7 283.0L973.8 300.4L975.8 317.9L977.8 335.3L979.9 352.8L981.9 370.2L983.9 387.7L985.8 405.1L987.7 422.6L989.7 440.0L991.6 457.5L993.5 474.9L995.4 492.4L997.4 509.8L999.5 527.3L1001.7 544.7L1003.9 562.2L1006.1 579.6L1008.3 597.1L1010.5 614.5L1012.7 632.0L1014.8 649.4L1017.0 666.9L1019.2 684.3L1021.3 701.8L1023.5 719.2L1025.7 736.7L1027.9 754.1L1030.0 771.6L1032.2 789.0L1034.4 806.5L1036.6 823.9L1038.9 841.4L1041.1 858.8L1043.3 876.3L1045.5 893.7L1047.8 911.2L1050.0 928.6M967.5 230.6L969.8 248.1L972.1 265.6L974.4 283.2L976.7 300.7L979.0 318.2L981.4 335.8L983.7 353.3L986.0 370.8L988.2 388.3L990.4 405.9L992.6 423.4L994.8 440.9L997.1 458.4L999.3 476.0L1001.5 493.5L1003.7 511.0L1006.1 528.6L1008.6 546.1L1011.0 563.6L1013.5 581.1L1015.9 598.7L1018.4 616.2L1020.8 633.7L1023.3 651.2L1025.7 668.8L1028.1 686.3L1030.6 703.8L1033.0 721.4L1035.5 738.9L1037.9 756.4L1040.3 773.9L1042.8 791.5L1045.2 809.0L1047.7 826.5L1050.2 844.0L1052.7 861.6L1055.2 879.1L1057.6 896.6L1060.1 914.2L1062.6 931.7M969.3 230.5L971.9 248.1L974.4 265.7L977.0 283.3L979.6 300.9L982.1 318.5L984.7 336.1L987.2 353.7L989.8 371.3L992.3 388.9L994.8 406.4L997.3 424.0L999.8 441.6L1002.3 459.2L1004.8 476.8L1007.2 494.4L1009.8 512.0L1012.4 529.6L1015.1 547.2L1017.8 564.8L1020.5 582.4L1023.2 599.9L1025.9 617.5L1028.6 635.1L1031.3 652.7L1034.0 670.3L1036.7 687.9L1039.4 705.5L1042.1 723.1L1044.7 740.7L1047.4 758.3L1050.1 775.8L1052.8 793.4L1055.5 811.0L1058.2 828.6L1061.0 846.2L1063.7 863.8L1066.4 881.4L1069.1 899.0L1071.8 916.6L1074.6 934.2M971.0 230.5L973.7 248.1L976.5 265.8L979.3 283.4L982.1 301.0L984.9 318.7L987.7 336.3L990.4 354.0L993.2 371.6L996.0 389.2L998.7 406.9L1001.5 424.5L1004.2 442.1L1006.9 459.8L1009.7 477.4L1012.4 495.1L1015.2 512.7L1018.1 530.3L1021.0 548.0L1023.9 565.6L1026.8 583.3L1029.7 600.9L1032.7 618.5L1035.6 636.2L1038.5 653.8L1041.4 671.5L1044.3 689.1L1047.2 706.7L1050.2 724.4L1053.1 742.0L1056.0 759.6L1058.9 777.3L1061.8 794.9L1064.7 812.6L1067.7 830.2L1070.6 847.8L1073.5 865.5L1076.5 883.1L1079.4 900.8L1082.4 918.4L1085.3 936.0M972.3 230.4L975.3 248.1L978.3 265.8L981.2 283.4L984.2 301.1L987.2 318.8L990.2 336.5L993.1 354.1L996.1 371.8L999.1 389.5L1002.0 407.2L1004.9 424.8L1007.9 442.5L1010.8 460.2L1013.8 477.8L1016.7 495.5L1019.7 513.2L1022.8 530.9L1025.9 548.5L1029.0 566.2L1032.1 583.9L1035.2 601.6L1038.3 619.2L1041.4 636.9L1044.5 654.6L1047.6 672.3L1050.7 689.9L1053.8 707.6L1056.9 725.3L1060.0 742.9L1063.1 760.6L1066.2 778.3L1069.3 796.0L1072.4 813.6L1075.6 831.3L1078.7 849.0L1081.8 866.7L1084.9 884.3L1088.0 902.0L1091.1 919.7L1094.3 937.4M973.3 230.4L976.5 248.1L979.6 265.7L982.7 283.4L985.8 301.1L988.9 318.8L992.0 336.5L995.1 354.2L998.3 371.9L1001.4 389.6L1004.5 407.3L1007.6 425.0L1010.7 442.7L1013.8 460.4L1016.9 478.1L1020.0 495.8L1023.1 513.5L1026.3 531.2L1029.6 548.9L1032.8 566.6L1036.0 584.3L1039.3 602.0L1042.5 619.7L1045.8 637.4L1049.0 655.1L1052.3 672.8L1055.5 690.5L1058.8 708.1L1062.0 725.8L1065.3 743.5L1068.5 761.2L1071.7 778.9L1075.0 796.6L1078.2 814.3L1081.5 832.0L1084.7 849.7L1088.0 867.4L1091.2 885.1L1094.5 902.8L1097.7 920.5L1101.0 938.2M974.0 230.3L977.2 248.0L980.4 265.7L983.6 283.4L986.8 301.1L990.0 318.9L993.2 336.6L996.4 354.3L999.6 372.0L1002.8 389.7L1006.0 407.4L1009.2 425.1L1012.4 442.8L1015.6 460.5L1018.8 478.2L1022.0 495.9L1025.2 513.7L1028.5 531.4L1031.8 549.1L1035.2 566.8L1038.5 584.5L1041.8 602.2L1045.2 619.9L1048.5 637.6L1051.8 655.3L1055.2 673.0L1058.5 690.7L1061.8 708.4L1065.2 726.2L1068.5 743.9L1071.8 761.6L1075.2 779.3L1078.5 797.0L1081.8 814.7L1085.2 832.4L1088.5 850.1L1091.8 867.8L1095.2 885.5L1098.5 903.2L1101.8 920.9L1105.2 938.7M957.6 242.0C957.9 242.0 958.8 242.1 959.5 242.2C960.1 242.3 960.7 242.3 961.4 242.3C962.0 242.4 962.6 242.4 963.2 242.5C963.9 242.5 964.5 242.5 965.1 242.6C965.8 242.6 966.4 242.6 967.0 242.6C967.6 242.7 968.3 242.7 968.9 242.7C969.5 242.7 970.1 242.7 970.8 242.7C971.4 242.7 972.0 242.7 972.7 242.7C973.3 242.6 973.9 242.6 974.5 242.6C975.2 242.6 976.1 242.5 976.4 242.5M958.2 253.7C958.5 253.8 959.5 253.9 960.2 254.0C960.9 254.1 961.6 254.1 962.3 254.2C963.0 254.3 963.6 254.3 964.3 254.4C965.0 254.5 965.7 254.5 966.4 254.6C967.1 254.6 967.7 254.6 968.4 254.7C969.1 254.7 969.8 254.7 970.5 254.8C971.1 254.8 971.8 254.8 972.5 254.8C973.2 254.8 973.9 254.8 974.6 254.8C975.2 254.8 975.9 254.8 976.6 254.8C977.3 254.8 978.3 254.7 978.7 254.7M958.8 265.4C959.1 265.5 960.2 265.7 961.0 265.8C961.7 265.9 962.4 266.0 963.2 266.1C963.9 266.2 964.7 266.2 965.4 266.3C966.1 266.4 966.9 266.5 967.6 266.5C968.3 266.6 969.1 266.7 969.8 266.7C970.6 266.8 971.3 266.8 972.0 266.8C972.8 266.9 973.5 266.9 974.2 266.9C975.0 266.9 975.7 267.0 976.5 267.0C977.2 267.0 977.9 267.0 978.7 267.0C979.4 267.0 980.5 267.0 980.9 266.9M959.3 277.1C959.7 277.2 960.9 277.4 961.7 277.6C962.5 277.7 963.3 277.8 964.1 277.9C964.9 278.0 965.7 278.1 966.5 278.2C967.3 278.3 968.1 278.4 968.9 278.5C969.6 278.6 970.4 278.7 971.2 278.7C972.0 278.8 972.8 278.9 973.6 278.9C974.4 279.0 975.2 279.0 976.0 279.1C976.8 279.1 977.6 279.1 978.4 279.1C979.2 279.2 979.9 279.2 980.7 279.2C981.5 279.2 982.7 279.2 983.1 279.2M959.9 288.9C960.4 288.9 961.6 289.2 962.5 289.3C963.3 289.5 964.2 289.6 965.0 289.8C965.9 289.9 966.7 290.0 967.6 290.2C968.4 290.3 969.3 290.4 970.1 290.5C970.9 290.6 971.8 290.7 972.6 290.8C973.5 290.9 974.3 290.9 975.2 291.0C976.0 291.1 976.9 291.1 977.7 291.2C978.6 291.2 979.4 291.3 980.3 291.3C981.1 291.3 982.0 291.3 982.8 291.4C983.7 291.4 984.9 291.4 985.3 291.4M960.5 300.6C961.0 300.7 962.3 301.0 963.2 301.1C964.1 301.3 965.0 301.5 965.9 301.6C966.8 301.8 967.7 301.9 968.6 302.1C969.5 302.2 970.4 302.4 971.3 302.5C972.2 302.6 973.1 302.7 974.0 302.8C974.9 302.9 975.9 303.0 976.8 303.1C977.7 303.2 978.6 303.2 979.5 303.3C980.4 303.4 981.3 303.4 982.2 303.5C983.1 303.5 984.0 303.5 984.9 303.6C985.8 303.6 987.1 303.6 987.6 303.6M961.1 312.3C961.6 312.4 963.0 312.7 964.0 312.9C964.9 313.1 965.9 313.3 966.8 313.5C967.8 313.7 968.8 313.9 969.7 314.0C970.7 314.2 971.6 314.3 972.6 314.5C973.5 314.6 974.5 314.7 975.5 314.8C976.4 315.0 977.4 315.1 978.3 315.2C979.3 315.3 980.2 315.4 981.2 315.4C982.2 315.5 983.1 315.6 984.1 315.6C985.0 315.7 986.0 315.7 986.9 315.7C987.9 315.8 989.3 315.8 989.8 315.8M961.7 324.0C962.2 324.1 963.7 324.5 964.7 324.7C965.7 324.9 966.8 325.1 967.8 325.4C968.8 325.6 969.8 325.8 970.8 325.9C971.8 326.1 972.8 326.3 973.8 326.4C974.8 326.6 975.9 326.7 976.9 326.9C977.9 327.0 978.9 327.1 979.9 327.3C980.9 327.4 981.9 327.5 982.9 327.6C983.9 327.6 985.0 327.7 986.0 327.8C987.0 327.8 988.0 327.9 989.0 327.9C990.0 328.0 991.5 328.0 992.0 328.0M962.3 335.7C962.8 335.8 964.4 336.2 965.5 336.5C966.5 336.7 967.6 337.0 968.7 337.2C969.7 337.4 970.8 337.7 971.9 337.9C972.9 338.1 974.0 338.2 975.1 338.4C976.1 338.6 977.2 338.8 978.3 338.9C979.3 339.1 980.4 339.2 981.5 339.3C982.5 339.5 983.6 339.6 984.7 339.7C985.7 339.8 986.8 339.9 987.9 339.9C988.9 340.0 990.0 340.1 991.1 340.1C992.1 340.2 993.7 340.2 994.3 340.2M962.9 347.4C963.4 347.5 965.1 348.0 966.2 348.3C967.4 348.6 968.5 348.8 969.6 349.1C970.7 349.3 971.8 349.6 973.0 349.8C974.1 350.0 975.2 350.2 976.3 350.4C977.4 350.6 978.6 350.8 979.7 351.0C980.8 351.1 981.9 351.3 983.0 351.4C984.2 351.6 985.3 351.7 986.4 351.8C987.5 351.9 988.6 352.0 989.8 352.1C990.9 352.2 992.0 352.3 993.1 352.3C994.2 352.4 995.9 352.4 996.5 352.5M963.5 359.1C964.0 359.3 965.8 359.8 967.0 360.1C968.2 360.4 969.3 360.7 970.5 360.9C971.7 361.2 972.9 361.5 974.0 361.7C975.2 361.9 976.4 362.2 977.6 362.4C978.7 362.6 979.9 362.8 981.1 363.0C982.3 363.2 983.4 363.3 984.6 363.5C985.8 363.7 987.0 363.8 988.1 363.9C989.3 364.1 990.5 364.2 991.7 364.3C992.8 364.4 994.0 364.4 995.2 364.5C996.4 364.6 998.1 364.6 998.7 364.7M964.0 370.8C964.6 371.0 966.5 371.5 967.7 371.9C969.0 372.2 970.2 372.5 971.4 372.8C972.6 373.1 973.9 373.4 975.1 373.6C976.3 373.9 977.6 374.1 978.8 374.4C980.0 374.6 981.3 374.8 982.5 375.0C983.7 375.2 985.0 375.4 986.2 375.6C987.4 375.8 988.6 375.9 989.9 376.0C991.1 376.2 992.3 376.3 993.6 376.4C994.8 376.5 996.0 376.6 997.3 376.7C998.5 376.8 1000.3 376.9 1000.9 376.9M964.5 382.5C965.1 382.7 967.0 383.3 968.3 383.6C969.6 384.0 970.9 384.3 972.2 384.6C973.5 385.0 974.8 385.3 976.1 385.5C977.4 385.8 978.7 386.1 979.9 386.4C981.2 386.6 982.5 386.8 983.8 387.1C985.1 387.3 986.4 387.5 987.7 387.7C989.0 387.9 990.3 388.0 991.6 388.2C992.9 388.3 994.1 388.5 995.4 388.6C996.7 388.7 998.0 388.8 999.3 388.9C1000.6 389.0 1002.5 389.1 1003.2 389.1M964.9 394.2C965.6 394.4 967.6 395.0 968.9 395.4C970.3 395.8 971.6 396.2 973.0 396.5C974.3 396.8 975.7 397.2 977.0 397.5C978.4 397.8 979.7 398.1 981.1 398.3C982.4 398.6 983.8 398.9 985.1 399.1C986.5 399.3 987.8 399.5 989.2 399.7C990.5 400.0 991.9 400.1 993.2 400.3C994.6 400.5 996.0 400.6 997.3 400.7C998.7 400.9 1000.0 401.0 1001.4 401.1C1002.7 401.2 1004.7 401.3 1005.4 401.3M965.3 406.0C966.0 406.2 968.1 406.8 969.5 407.2C970.9 407.6 972.4 408.0 973.8 408.4C975.2 408.7 976.6 409.1 978.0 409.4C979.4 409.7 980.8 410.0 982.2 410.3C983.6 410.6 985.1 410.9 986.5 411.1C987.9 411.4 989.3 411.6 990.7 411.8C992.1 412.0 993.5 412.2 994.9 412.4C996.3 412.6 997.8 412.8 999.2 412.9C1000.6 413.0 1002.0 413.2 1003.4 413.3C1004.8 413.4 1006.9 413.5 1007.6 413.5M965.7 417.7C966.5 417.9 968.7 418.6 970.1 419.0C971.6 419.4 973.1 419.8 974.6 420.2C976.0 420.6 977.5 421.0 979.0 421.3C980.4 421.7 981.9 422.0 983.4 422.3C984.9 422.6 986.3 422.9 987.8 423.2C989.3 423.4 990.7 423.7 992.2 423.9C993.7 424.1 995.2 424.4 996.6 424.5C998.1 424.7 999.6 424.9 1001.0 425.1C1002.5 425.2 1004.0 425.4 1005.5 425.5C1006.9 425.6 1009.1 425.7 1009.9 425.7M966.1 429.4C966.9 429.6 969.2 430.3 970.7 430.8C972.3 431.2 973.8 431.7 975.3 432.1C976.9 432.5 978.4 432.9 979.9 433.2C981.5 433.6 983.0 434.0 984.5 434.3C986.1 434.6 987.6 434.9 989.1 435.2C990.7 435.5 992.2 435.8 993.7 436.0C995.2 436.2 996.8 436.5 998.3 436.7C999.8 436.9 1001.4 437.1 1002.9 437.2C1004.4 437.4 1006.0 437.5 1007.5 437.7C1009.0 437.8 1011.3 437.9 1012.1 438.0M966.6 441.1C967.4 441.3 969.8 442.1 971.3 442.6C972.9 443.0 974.5 443.5 976.1 443.9C977.7 444.4 979.3 444.8 980.9 445.2C982.5 445.5 984.1 445.9 985.7 446.3C987.3 446.6 988.9 446.9 990.4 447.2C992.0 447.5 993.6 447.8 995.2 448.1C996.8 448.3 998.4 448.6 1000.0 448.8C1001.6 449.0 1003.2 449.2 1004.8 449.4C1006.4 449.6 1008.0 449.7 1009.5 449.8C1011.1 450.0 1013.5 450.1 1014.3 450.2M967.0 452.8C967.8 453.1 970.3 453.9 971.9 454.4C973.6 454.9 975.3 455.3 976.9 455.8C978.6 456.2 980.2 456.7 981.9 457.1C983.5 457.5 985.2 457.9 986.8 458.2C988.5 458.6 990.1 459.0 991.8 459.3C993.4 459.6 995.1 459.9 996.7 460.2C998.4 460.4 1000.0 460.7 1001.7 460.9C1003.3 461.2 1005.0 461.4 1006.6 461.5C1008.3 461.7 1009.9 461.9 1011.6 462.0C1013.2 462.2 1015.7 462.3 1016.6 462.4M967.4 464.5C968.3 464.8 970.8 465.6 972.6 466.1C974.3 466.7 976.0 467.2 977.7 467.6C979.4 468.1 981.1 468.6 982.8 469.0C984.5 469.4 986.3 469.8 988.0 470.2C989.7 470.6 991.4 471.0 993.1 471.3C994.8 471.6 996.5 472.0 998.2 472.2C999.9 472.5 1001.7 472.8 1003.4 473.0C1005.1 473.3 1006.8 473.5 1008.5 473.7C1010.2 473.9 1011.9 474.1 1013.6 474.2C1015.4 474.4 1017.9 474.5 1018.8 474.6M967.8 476.2C968.7 476.5 971.4 477.4 973.2 477.9C974.9 478.5 976.7 479.0 978.5 479.5C980.2 480.0 982.0 480.5 983.8 480.9C985.6 481.4 987.3 481.8 989.1 482.2C990.9 482.6 992.7 483.0 994.4 483.3C996.2 483.7 998.0 484.0 999.7 484.3C1001.5 484.6 1003.3 484.9 1005.1 485.2C1006.8 485.4 1008.6 485.7 1010.4 485.9C1012.1 486.1 1013.9 486.3 1015.7 486.4C1017.5 486.6 1020.1 486.8 1021.0 486.8M968.3 487.9C969.2 488.2 971.9 489.1 973.8 489.7C975.6 490.3 977.4 490.8 979.3 491.4C981.1 491.9 982.9 492.4 984.8 492.9C986.6 493.3 988.4 493.8 990.3 494.2C992.1 494.6 993.9 495.0 995.8 495.4C997.6 495.7 999.4 496.1 1001.2 496.4C1003.1 496.7 1004.9 497.0 1006.7 497.3C1008.6 497.6 1010.4 497.8 1012.2 498.0C1014.1 498.2 1015.9 498.4 1017.7 498.6C1019.6 498.8 1022.3 499.0 1023.2 499.0M968.7 499.6C969.6 499.9 972.5 500.9 974.4 501.5C976.3 502.1 978.2 502.7 980.0 503.2C981.9 503.8 983.8 504.3 985.7 504.8C987.6 505.3 989.5 505.7 991.4 506.2C993.3 506.6 995.2 507.0 997.1 507.4C999.0 507.8 1000.9 508.2 1002.8 508.5C1004.6 508.8 1006.5 509.1 1008.4 509.4C1010.3 509.7 1012.2 510.0 1014.1 510.2C1016.0 510.4 1017.9 510.6 1019.8 510.8C1021.7 511.0 1024.5 511.2 1025.5 511.3M969.4 511.3C970.3 511.7 973.3 512.7 975.2 513.3C977.2 513.9 979.1 514.5 981.0 515.1C983.0 515.6 984.9 516.2 986.9 516.7C988.8 517.2 990.8 517.7 992.7 518.2C994.7 518.6 996.6 519.0 998.6 519.4C1000.5 519.9 1002.4 520.2 1004.4 520.6C1006.3 520.9 1008.3 521.3 1010.2 521.5C1012.2 521.8 1014.1 522.1 1016.1 522.4C1018.0 522.6 1020.0 522.8 1021.9 523.0C1023.8 523.2 1026.8 523.4 1027.7 523.5M970.1 523.1C971.1 523.4 974.1 524.4 976.1 525.1C978.1 525.7 980.1 526.3 982.1 526.9C984.1 527.5 986.1 528.1 988.1 528.6C990.1 529.2 992.1 529.7 994.1 530.1C996.1 530.6 998.1 531.1 1000.1 531.5C1002.1 531.9 1004.1 532.3 1006.1 532.7C1008.1 533.0 1010.1 533.4 1012.1 533.7C1014.1 534.0 1016.1 534.3 1018.1 534.5C1020.1 534.8 1022.1 535.0 1024.1 535.2C1026.1 535.4 1029.1 535.6 1030.1 535.7M970.8 534.8C971.8 535.1 974.9 536.2 976.9 536.9C979.0 537.5 981.0 538.2 983.1 538.8C985.1 539.4 987.2 540.0 989.2 540.5C991.3 541.1 993.4 541.6 995.4 542.1C997.5 542.6 999.5 543.1 1001.6 543.5C1003.6 544.0 1005.7 544.4 1007.7 544.7C1009.8 545.1 1011.8 545.5 1013.9 545.8C1015.9 546.1 1018.0 546.4 1020.1 546.7C1022.1 546.9 1024.2 547.2 1026.2 547.4C1028.3 547.6 1031.4 547.8 1032.4 547.9M971.5 546.5C972.5 546.8 975.7 548.0 977.8 548.7C979.9 549.4 982.0 550.0 984.1 550.7C986.2 551.3 988.3 551.9 990.4 552.5C992.5 553.0 994.6 553.6 996.8 554.1C998.9 554.6 1001.0 555.1 1003.1 555.6C1005.2 556.0 1007.3 556.4 1009.4 556.8C1011.5 557.2 1013.6 557.6 1015.7 557.9C1017.8 558.3 1019.9 558.6 1022.0 558.8C1024.2 559.1 1026.3 559.4 1028.4 559.6C1030.5 559.8 1033.6 560.0 1034.7 560.1M972.2 558.2C973.2 558.6 976.5 559.7 978.6 560.4C980.8 561.2 983.0 561.9 985.1 562.5C987.3 563.2 989.5 563.8 991.6 564.4C993.8 565.0 995.9 565.5 998.1 566.1C1000.3 566.6 1002.4 567.1 1004.6 567.6C1006.7 568.1 1008.9 568.5 1011.1 568.9C1013.2 569.3 1015.4 569.7 1017.6 570.0C1019.7 570.4 1021.9 570.7 1024.0 571.0C1026.2 571.3 1028.4 571.5 1030.5 571.8C1032.7 572.0 1035.9 572.2 1037.0 572.3M972.9 569.9C974.0 570.3 977.3 571.5 979.5 572.2C981.7 573.0 983.9 573.7 986.1 574.4C988.4 575.0 990.6 575.7 992.8 576.3C995.0 576.9 997.2 577.5 999.4 578.1C1001.7 578.6 1003.9 579.1 1006.1 579.6C1008.3 580.1 1010.5 580.6 1012.7 581.0C1015.0 581.4 1017.2 581.8 1019.4 582.2C1021.6 582.5 1023.8 582.9 1026.0 583.2C1028.3 583.5 1030.5 583.7 1032.7 583.9C1034.9 584.2 1038.2 584.4 1039.3 584.5M973.5 581.6C974.7 582.0 978.1 583.2 980.4 584.0C982.6 584.8 984.9 585.5 987.2 586.2C989.4 586.9 991.7 587.6 994.0 588.2C996.2 588.9 998.5 589.5 1000.8 590.0C1003.1 590.6 1005.3 591.2 1007.6 591.7C1009.9 592.2 1012.1 592.6 1014.4 593.1C1016.7 593.5 1019.0 593.9 1021.2 594.3C1023.5 594.7 1025.8 595.0 1028.0 595.3C1030.3 595.6 1032.6 595.9 1034.8 596.1C1037.1 596.4 1040.5 596.7 1041.7 596.8M974.2 593.3C975.4 593.7 978.9 595.0 981.2 595.8C983.5 596.6 985.9 597.4 988.2 598.1C990.5 598.8 992.8 599.5 995.2 600.2C997.5 600.8 999.8 601.4 1002.1 602.0C1004.5 602.6 1006.8 603.2 1009.1 603.7C1011.4 604.2 1013.8 604.7 1016.1 605.2C1018.4 605.6 1020.7 606.0 1023.1 606.4C1025.4 606.8 1027.7 607.2 1030.0 607.5C1032.4 607.8 1034.7 608.1 1037.0 608.3C1039.3 608.6 1042.8 608.9 1044.0 609.0M974.9 605.0C976.1 605.5 979.7 606.8 982.1 607.6C984.5 608.4 986.8 609.2 989.2 609.9C991.6 610.7 994.0 611.4 996.3 612.1C998.7 612.8 1001.1 613.4 1003.5 614.0C1005.9 614.6 1008.2 615.2 1010.6 615.7C1013.0 616.3 1015.4 616.8 1017.8 617.2C1020.1 617.7 1022.5 618.1 1024.9 618.5C1027.3 618.9 1029.6 619.3 1032.0 619.6C1034.4 620.0 1036.8 620.3 1039.2 620.5C1041.5 620.8 1045.1 621.1 1046.3 621.2M975.6 616.7C976.8 617.2 980.5 618.5 982.9 619.4C985.4 620.2 987.8 621.0 990.2 621.8C992.7 622.6 995.1 623.3 997.5 624.0C1000.0 624.7 1002.4 625.4 1004.8 626.0C1007.3 626.6 1009.7 627.2 1012.1 627.8C1014.6 628.3 1017.0 628.8 1019.4 629.3C1021.9 629.8 1024.3 630.3 1026.7 630.7C1029.2 631.1 1031.6 631.5 1034.0 631.8C1036.5 632.1 1038.9 632.4 1041.3 632.7C1043.7 633.0 1047.4 633.3 1048.6 633.4M976.3 628.5C977.6 628.9 981.3 630.3 983.8 631.2C986.3 632.0 988.8 632.9 991.2 633.7C993.7 634.4 996.2 635.2 998.7 635.9C1001.2 636.6 1003.7 637.3 1006.2 638.0C1008.7 638.6 1011.1 639.2 1013.6 639.8C1016.1 640.4 1018.6 640.9 1021.1 641.4C1023.6 641.9 1026.1 642.4 1028.6 642.8C1031.0 643.2 1033.5 643.6 1036.0 644.0C1038.5 644.3 1041.0 644.6 1043.5 644.9C1046.0 645.2 1049.7 645.5 1050.9 645.6M977.0 640.2C978.3 640.6 982.1 642.1 984.6 643.0C987.2 643.8 989.7 644.7 992.3 645.5C994.8 646.3 997.3 647.1 999.9 647.8C1002.4 648.6 1005.0 649.3 1007.5 650.0C1010.0 650.6 1012.6 651.2 1015.1 651.8C1017.7 652.4 1020.2 653.0 1022.8 653.5C1025.3 654.0 1027.8 654.5 1030.4 654.9C1032.9 655.4 1035.5 655.8 1038.0 656.1C1040.5 656.5 1043.1 656.8 1045.6 657.1C1048.2 657.4 1052.0 657.7 1053.3 657.8M977.7 651.9C979.0 652.3 982.9 653.8 985.5 654.7C988.1 655.7 990.7 656.5 993.3 657.4C995.9 658.2 998.4 659.0 1001.0 659.8C1003.6 660.5 1006.2 661.3 1008.8 661.9C1011.4 662.6 1014.0 663.3 1016.6 663.9C1019.2 664.5 1021.8 665.0 1024.4 665.6C1027.0 666.1 1029.6 666.6 1032.2 667.0C1034.8 667.5 1037.4 667.9 1040.0 668.3C1042.6 668.7 1045.2 669.0 1047.8 669.3C1050.4 669.6 1054.3 669.9 1055.6 670.1M978.4 663.6C979.7 664.1 983.7 665.6 986.3 666.5C989.0 667.5 991.6 668.4 994.3 669.2C996.9 670.1 999.6 670.9 1002.2 671.7C1004.9 672.5 1007.5 673.2 1010.2 673.9C1012.8 674.6 1015.5 675.3 1018.1 675.9C1020.8 676.5 1023.4 677.1 1026.1 677.7C1028.7 678.2 1031.4 678.7 1034.0 679.2C1036.7 679.6 1039.3 680.1 1042.0 680.4C1044.6 680.8 1047.3 681.2 1049.9 681.5C1052.6 681.8 1056.6 682.1 1057.9 682.3M979.0 675.3C980.4 675.8 984.4 677.3 987.1 678.3C989.9 679.3 992.6 680.2 995.3 681.1C998.0 682.0 1000.7 682.8 1003.4 683.6C1006.1 684.4 1008.8 685.2 1011.5 685.9C1014.2 686.6 1016.9 687.3 1019.6 687.9C1022.3 688.6 1025.0 689.2 1027.7 689.7C1030.4 690.3 1033.2 690.8 1035.9 691.3C1038.6 691.8 1041.3 692.2 1044.0 692.6C1046.7 693.0 1049.4 693.4 1052.1 693.7C1054.8 694.0 1058.9 694.4 1060.2 694.5M979.7 687.0C981.1 687.5 985.2 689.1 988.0 690.1C990.7 691.1 993.5 692.0 996.3 692.9C999.0 693.8 1001.8 694.7 1004.6 695.5C1007.3 696.4 1010.1 697.1 1012.8 697.9C1015.6 698.6 1018.4 699.3 1021.1 700.0C1023.9 700.6 1026.6 701.3 1029.4 701.8C1032.2 702.4 1034.9 702.9 1037.7 703.4C1040.4 703.9 1043.2 704.4 1046.0 704.8C1048.7 705.2 1051.5 705.5 1054.2 705.9C1057.0 706.2 1061.2 706.6 1062.5 706.7M980.4 698.7C981.8 699.2 986.0 700.9 988.8 701.9C991.6 702.9 994.5 703.9 997.3 704.8C1000.1 705.7 1002.9 706.6 1005.7 707.5C1008.5 708.3 1011.4 709.1 1014.2 709.9C1017.0 710.6 1019.8 711.3 1022.6 712.0C1025.4 712.7 1028.2 713.3 1031.1 713.9C1033.9 714.5 1036.7 715.0 1039.5 715.5C1042.3 716.0 1045.1 716.5 1048.0 716.9C1050.8 717.3 1053.6 717.7 1056.4 718.1C1059.2 718.4 1063.4 718.8 1064.9 718.9M981.1 710.4C982.5 711.0 986.8 712.6 989.7 713.7C992.5 714.7 995.4 715.7 998.3 716.7C1001.2 717.6 1004.0 718.5 1006.9 719.4C1009.8 720.2 1012.6 721.1 1015.5 721.8C1018.4 722.6 1021.2 723.4 1024.1 724.0C1027.0 724.7 1029.9 725.4 1032.7 726.0C1035.6 726.6 1038.5 727.2 1041.3 727.7C1044.2 728.2 1047.1 728.7 1049.9 729.1C1052.8 729.5 1055.7 729.9 1058.6 730.2C1061.4 730.6 1065.7 731.0 1067.2 731.1M981.7 722.1C983.2 722.7 987.6 724.4 990.5 725.5C993.4 726.5 996.4 727.5 999.3 728.5C1002.2 729.5 1005.1 730.4 1008.1 731.3C1011.0 732.2 1013.9 733.0 1016.8 733.8C1019.8 734.6 1022.7 735.4 1025.6 736.1C1028.5 736.8 1031.5 737.5 1034.4 738.1C1037.3 738.7 1040.2 739.3 1043.2 739.8C1046.1 740.3 1049.0 740.8 1051.9 741.2C1054.9 741.7 1057.8 742.1 1060.7 742.4C1063.6 742.8 1068.0 743.2 1069.5 743.4M982.4 733.8C983.9 734.4 988.4 736.2 991.3 737.2C994.3 738.3 997.3 739.4 1000.3 740.4C1003.3 741.4 1006.2 742.3 1009.2 743.2C1012.2 744.1 1015.2 745.0 1018.2 745.8C1021.1 746.6 1024.1 747.4 1027.1 748.1C1030.1 748.8 1033.1 749.5 1036.0 750.2C1039.0 750.8 1042.0 751.4 1045.0 751.9C1048.0 752.5 1050.9 753.0 1053.9 753.4C1056.9 753.9 1059.9 754.3 1062.9 754.6C1065.8 755.0 1070.3 755.4 1071.8 755.6M983.1 745.6C984.6 746.1 989.2 747.9 992.2 749.0C995.2 750.1 998.3 751.2 1001.3 752.2C1004.3 753.3 1007.4 754.2 1010.4 755.2C1013.4 756.1 1016.5 757.0 1019.5 757.8C1022.5 758.6 1025.6 759.4 1028.6 760.2C1031.6 760.9 1034.7 761.6 1037.7 762.2C1040.7 762.9 1043.8 763.5 1046.8 764.0C1049.8 764.6 1052.9 765.1 1055.9 765.6C1059.0 766.0 1062.0 766.4 1065.0 766.8C1068.1 767.2 1072.6 767.6 1074.1 767.8M983.8 757.3C985.3 757.9 989.9 759.7 993.0 760.8C996.1 762.0 999.2 763.0 1002.3 764.1C1005.4 765.1 1008.5 766.1 1011.6 767.1C1014.7 768.0 1017.7 768.9 1020.8 769.8C1023.9 770.6 1027.0 771.4 1030.1 772.2C1033.2 772.9 1036.3 773.7 1039.4 774.3C1042.5 775.0 1045.6 775.6 1048.6 776.2C1051.7 776.7 1054.8 777.3 1057.9 777.7C1061.0 778.2 1064.1 778.6 1067.2 779.0C1070.3 779.4 1074.9 779.8 1076.4 780.0M984.4 769.0C986.0 769.6 990.7 771.4 993.9 772.6C997.0 773.8 1000.2 774.9 1003.3 775.9C1006.4 777.0 1009.6 778.0 1012.7 779.0C1015.9 780.0 1019.0 780.9 1022.2 781.8C1025.3 782.6 1028.5 783.5 1031.6 784.2C1034.7 785.0 1037.9 785.7 1041.0 786.4C1044.2 787.1 1047.3 787.7 1050.5 788.3C1053.6 788.9 1056.8 789.4 1059.9 789.9C1063.0 790.4 1066.2 790.8 1069.3 791.2C1072.5 791.6 1077.2 792.0 1078.8 792.2M985.1 780.7C986.7 781.3 991.5 783.2 994.7 784.4C997.9 785.6 1001.1 786.7 1004.3 787.8C1007.5 788.9 1010.7 789.9 1013.9 790.9C1017.1 791.9 1020.3 792.8 1023.5 793.7C1026.7 794.6 1029.9 795.5 1033.1 796.3C1036.3 797.1 1039.5 797.8 1042.7 798.5C1045.9 799.2 1049.1 799.8 1052.3 800.4C1055.5 801.0 1058.7 801.6 1061.9 802.1C1065.1 802.5 1068.3 803.0 1071.5 803.4C1074.7 803.8 1079.5 804.3 1081.1 804.4M985.9 792.4C987.5 793.0 992.4 795.0 995.6 796.2C998.9 797.4 1002.1 798.6 1005.4 799.7C1008.6 800.8 1011.9 801.8 1015.1 802.8C1018.4 803.9 1021.6 804.8 1024.9 805.7C1028.1 806.6 1031.4 807.5 1034.6 808.3C1037.9 809.1 1041.1 809.9 1044.4 810.6C1047.6 811.3 1050.9 811.9 1054.2 812.5C1057.4 813.1 1060.7 813.7 1063.9 814.2C1067.2 814.7 1070.4 815.2 1073.7 815.6C1076.9 816.0 1081.8 816.5 1083.4 816.6M986.6 804.1C988.3 804.8 993.2 806.7 996.5 808.0C999.9 809.2 1003.2 810.4 1006.5 811.5C1009.8 812.7 1013.1 813.7 1016.4 814.8C1019.7 815.8 1023.0 816.8 1026.3 817.7C1029.6 818.6 1032.9 819.5 1036.2 820.3C1039.5 821.2 1042.8 821.9 1046.1 822.7C1049.4 823.4 1052.7 824.0 1056.0 824.7C1059.3 825.3 1062.6 825.9 1065.9 826.4C1069.2 826.9 1072.5 827.4 1075.8 827.8C1079.1 828.2 1084.1 828.7 1085.7 828.9M987.4 815.8C989.1 816.5 994.1 818.5 997.5 819.8C1000.8 821.0 1004.2 822.2 1007.5 823.4C1010.9 824.5 1014.2 825.6 1017.6 826.7C1020.9 827.7 1024.3 828.7 1027.7 829.7C1031.0 830.6 1034.4 831.5 1037.7 832.4C1041.1 833.2 1044.4 834.0 1047.8 834.7C1051.1 835.5 1054.5 836.2 1057.8 836.8C1061.2 837.4 1064.6 838.0 1067.9 838.5C1071.3 839.1 1074.6 839.5 1078.0 840.0C1081.3 840.4 1086.4 840.9 1088.0 841.1M988.1 827.5C989.8 828.2 995.0 830.3 998.4 831.5C1001.8 832.8 1005.2 834.1 1008.6 835.2C1012.0 836.4 1015.4 837.5 1018.8 838.6C1022.2 839.7 1025.6 840.7 1029.0 841.7C1032.4 842.6 1035.8 843.5 1039.3 844.4C1042.7 845.3 1046.1 846.1 1049.5 846.8C1052.9 847.6 1056.3 848.3 1059.7 848.9C1063.1 849.6 1066.5 850.2 1069.9 850.7C1073.3 851.2 1076.7 851.7 1080.1 852.2C1083.5 852.6 1088.7 853.1 1090.4 853.3M988.9 839.2C990.6 839.9 995.8 842.0 999.3 843.3C1002.7 844.6 1006.2 845.9 1009.7 847.1C1013.1 848.3 1016.6 849.4 1020.0 850.5C1023.5 851.6 1026.9 852.7 1030.4 853.6C1033.9 854.6 1037.3 855.6 1040.8 856.4C1044.2 857.3 1047.7 858.1 1051.2 858.9C1054.6 859.7 1058.1 860.4 1061.5 861.0C1065.0 861.7 1068.5 862.3 1071.9 862.9C1075.4 863.4 1078.8 863.9 1082.3 864.3C1085.8 864.8 1091.0 865.3 1092.7 865.5M989.6 850.9C991.4 851.6 996.7 853.8 1000.2 855.1C1003.7 856.4 1007.2 857.7 1010.7 859.0C1014.2 860.2 1017.7 861.3 1021.3 862.5C1024.8 863.6 1028.3 864.6 1031.8 865.6C1035.3 866.6 1038.8 867.6 1042.3 868.5C1045.8 869.4 1049.3 870.2 1052.9 871.0C1056.4 871.8 1059.9 872.5 1063.4 873.2C1066.9 873.8 1070.4 874.5 1073.9 875.0C1077.4 875.6 1081.0 876.1 1084.5 876.5C1088.0 877.0 1093.2 877.5 1095.0 877.7M990.4 862.7C992.2 863.4 997.5 865.5 1001.1 866.9C1004.7 868.3 1008.2 869.6 1011.8 870.8C1015.3 872.1 1018.9 873.2 1022.5 874.4C1026.0 875.5 1029.6 876.6 1033.2 877.6C1036.7 878.6 1040.3 879.6 1043.9 880.5C1047.4 881.4 1051.0 882.3 1054.6 883.1C1058.1 883.9 1061.7 884.6 1065.2 885.3C1068.8 886.0 1072.4 886.6 1075.9 887.2C1079.5 887.7 1083.1 888.3 1086.6 888.7C1090.2 889.2 1095.5 889.7 1097.3 889.9M991.1 874.4C993.0 875.1 998.4 877.3 1002.0 878.7C1005.6 880.1 1009.2 881.4 1012.8 882.7C1016.5 883.9 1020.1 885.1 1023.7 886.3C1027.3 887.5 1030.9 888.6 1034.5 889.6C1038.2 890.6 1041.8 891.6 1045.4 892.5C1049.0 893.5 1052.6 894.3 1056.2 895.2C1059.9 896.0 1063.5 896.7 1067.1 897.4C1070.7 898.1 1074.3 898.8 1077.9 899.3C1081.6 899.9 1085.2 900.4 1088.8 900.9C1092.4 901.4 1097.8 901.9 1099.6 902.2M991.9 886.1C993.7 886.8 999.2 889.1 1002.9 890.5C1006.6 891.9 1010.2 893.2 1013.9 894.5C1017.6 895.8 1021.2 897.0 1024.9 898.2C1028.6 899.4 1032.3 900.5 1035.9 901.6C1039.6 902.6 1043.3 903.6 1046.9 904.6C1050.6 905.5 1054.3 906.4 1057.9 907.2C1061.6 908.1 1065.3 908.8 1068.9 909.5C1072.6 910.3 1076.3 910.9 1079.9 911.5C1083.6 912.1 1087.3 912.6 1091.0 913.1C1094.6 913.6 1100.1 914.2 1102.0 914.4M992.6 897.8C994.5 898.5 1000.1 900.8 1003.8 902.3C1007.5 903.7 1011.3 905.1 1015.0 906.4C1018.7 907.7 1022.4 909.0 1026.1 910.1C1029.9 911.3 1033.6 912.5 1037.3 913.6C1041.0 914.6 1044.7 915.7 1048.5 916.6C1052.2 917.6 1055.9 918.5 1059.6 919.3C1063.3 920.2 1067.1 920.9 1070.8 921.7C1074.5 922.4 1078.2 923.1 1082.0 923.7C1085.7 924.3 1089.4 924.8 1093.1 925.3C1096.8 925.8 1102.4 926.4 1104.3 926.6" fill="none" stroke="#b4b4b4" stroke-width="1" shape-rendering="crispEdges"/>
<path d="M957.0 230.3L957.6 241.6L958.1 252.9L958.7 264.3L959.3 275.6L959.8 286.9L960.4 298.2L961.0 309.5L961.5 320.9L962.1 332.2L962.7 343.5L963.2 354.8L963.8 366.1L964.3 377.5L964.7 388.8L965.1 400.1L965.5 411.4L965.9 422.7L966.3 434.1L966.7 445.4L967.1 456.7L967.5 468.0L968.0 479.3L968.4 490.7L968.8 502.0L969.5 513.3L970.2 524.6L970.8 535.9L971.5 547.3L972.2 558.6L972.9 569.9L973.5 581.2L974.2 592.5L974.9 603.9L975.5 615.2L976.2 626.5L976.9 637.8L977.5 649.1L978.2 660.5L978.8 671.8L979.5 683.1L980.1 694.4L980.8 705.7L981.4 717.1L982.1 728.4L982.7 739.7L983.4 751.0L984.1 762.3L984.7 773.7L985.4 785.0L986.1 796.3L986.9 807.6L987.6 818.9L988.3 830.3L989.0 841.6L989.8 852.9L990.5 864.2L991.2 875.5L991.9 886.9L992.7 898.2L993.4 909.5L1002.8 913.3L1012.3 916.9L1021.7 920.2L1031.1 923.3L1040.6 926.1L1050.0 928.6L1059.4 931.0L1068.9 933.0L1078.3 934.8L1087.7 936.4L1097.2 937.7L1106.6 938.8L1104.4 927.0L1102.1 915.2L1099.9 903.4L1097.6 891.6L1095.4 879.8L1093.1 868.0L1090.9 856.1L1088.7 844.3L1086.4 832.5L1084.2 820.7L1081.9 808.9L1079.7 797.1L1077.5 785.3L1075.2 773.5L1073.0 761.7L1070.7 749.9L1068.5 738.1L1066.2 726.2L1064.0 714.4L1061.8 702.6L1059.5 690.8L1057.3 679.0L1055.0 667.2L1052.8 655.4L1050.5 643.6L1048.3 631.8L1046.1 620.0L1043.8 608.2L1041.6 596.4L1039.3 584.5L1037.1 572.7L1034.9 560.9L1032.6 549.1L1030.4 537.3L1028.1 525.5L1025.9 513.7L1023.8 501.9L1021.6 490.1L1019.5 478.3L1017.3 466.5L1015.1 454.7L1013.0 442.9L1010.8 431.0L1008.7 419.2L1006.5 407.4L1004.4 395.6L1002.2 383.8L1000.1 372.0L997.9 360.2L995.7 348.4L993.6 336.6L991.4 324.8L989.3 313.0L987.1 301.1L985.0 289.3L982.8 277.5L980.7 265.7L978.5 253.9L976.4 242.1L974.2 230.3L972.8 230.4L971.3 230.5L969.9 230.5L968.5 230.6L967.0 230.6L965.6 230.6L964.2 230.6L962.7 230.6L961.3 230.5L959.9 230.5L958.4 230.4Z" fill="none" stroke="#a8a8a8" stroke-width="2" stroke-linejoin="round"/>
<path d="M668 770L880 860" stroke="#7a7a7a" stroke-width="1" stroke-dasharray="8.500 3.200 2 3.100" fill="none" shape-rendering="crispEdges"/>
<path d="M995 910L560 1047" stroke="#a9a9a9" stroke-width="1" stroke-dasharray="8.500 3.200 2 3.100" fill="none" shape-rendering="crispEdges"/>
<path d="M1008 915L1021 1052" stroke="#a9a9a9" stroke-width="1" stroke-dasharray="8.500 3.200 2 3.100" fill="none" shape-rendering="crispEdges"/>
<path d="M1100 873L1465 755" stroke="#a9a9a9" stroke-width="1" stroke-dasharray="8.500 3.200 2 3.100" fill="none" shape-rendering="crispEdges"/>
<path d="M1108 940L1358 1034" stroke="#a9a9a9" stroke-width="1" stroke-dasharray="8.500 3.200 2 3.100" fill="none" shape-rendering="crispEdges"/>
<g font-family="Liberation Serif, serif" font-size="13" fill="#9a9a9a"><text x="660" y="770">X</text><text x="555" y="1051.500">Y</text></g>
<path d="M1579 126.5L1400 130.5M1424.6 119.0L1400 130.5L1426.7 142.9M1591 279.5L1411 283M1435.6 271.5L1411 283L1437.7 295.4M1602 431.5L1423 435.5M1447.6 424.0L1423 435.5L1449.7 447.9M1614 584.5L1434 588M1458.6 576.5L1434 588L1460.7 600.4M1625 737L1446 741M1470.6 729.5L1446 741L1472.7 753.4M1636 890L1457 893.5M1481.6 882.0L1457 893.5L1483.7 905.9" stroke="#b6f8b4" stroke-width="2" fill="none" stroke-linejoin="round" shape-rendering="crispEdges"/>
<rect x="1851" y="167" width="39" height="480" fill="url(#gleg)"/>
<g class="mono" text-anchor="end">
<text x="1846" y="143">Cp</text>
<text x="1846" y="166.5">-0.22</text>
<text x="1846" y="190.5">-3.66</text>
<text x="1846" y="214.5">-7.10</text>
<text x="1846" y="238.5">-10.54</text>
<text x="1846" y="262.5">-13.98</text>
<text x="1846" y="286.5">-17.42</text>
<text x="1846" y="310.5">-20.86</text>
<text x="1846" y="334.5">-24.31</text>
<text x="1846" y="358.5">-27.75</text>
<text x="1846" y="382.5">-31.19</text>
<text x="1846" y="406.5">-34.63</text>
<text x="1846" y="430.5">-38.07</text>
<text x="1846" y="454.5">-41.51</text>
<text x="1846" y="478.5">-44.95</text>
<text x="1846" y="502.5">-48.39</text>
<text x="1846" y="526.5">-51.83</text>
<text x="1846" y="550.5">-55.28</text>
<text x="1846" y="574.5">-58.72</text>
<text x="1846" y="598.5">-62.16</text>
<text x="1846" y="622.5">-65.60</text>
<text x="1846" y="646.5">-69.04</text>
</g>
<g class="mono" xml:space="preserve">
<text x="4" y="974.2">Tobi</text>
<text x="4" y="994.2">Luff&#160;Length&#160;&#160;=&#160;&#160;&#160;&#160;9.000&#160;m</text>
<text x="4" y="1014.2">Leech&#160;Length&#160;=&#160;&#160;&#160;&#160;9.080&#160;m</text>
<text x="4" y="1034.2">Foot&#160;Length&#160;&#160;=&#160;&#160;&#160;&#160;2.014&#160;m</text>
<text x="1648" y="794">Control&#160;pos.&#160;=&#160;&#160;&#160;0.00</text>
<text x="1648" y="814">&#160;&#160;&#160;&#160;&#160;&#160;&#160;&#160;&#160;&#160;&#160;V&#160;=&#160;&#160;&#160;0.50&#160;m/s</text>
<text x="1648" y="834">&#160;&#160;&#160;&#160;&#160;&#160;&#160;&#160;Beta&#160;=&#160;&#160;45.00°</text>
<text x="1648" y="854">&#160;&#160;&#160;&#160;&#160;&#160;&#160;&#160;&#160;Phi&#160;=&#160;&#160;&#160;0.00°</text>
<text x="1648" y="874">&#160;&#160;Main&#160;angle&#160;=&#160;&#160;&#160;5.00°</text>
<text x="1648" y="894">&#160;&#160;&#160;Jib&#160;angle&#160;=&#160;&#160;&#160;0.00°</text>
<text x="1648" y="914">&#160;&#160;&#160;&#160;&#160;Foot&#160;Re&#160;=&#160;&#160;&#160;&#160;67&#160;000</text>
<text x="1648" y="934">&#160;&#160;&#160;&#160;&#160;&#160;&#160;&#160;&#160;&#160;Fx&#160;=&#160;&#160;&#160;-8.91&#160;N</text>
<text x="1648" y="954">&#160;&#160;&#160;&#160;&#160;&#160;&#160;&#160;&#160;&#160;Fy&#160;=&#160;&#160;&#160;&#160;8.91&#160;N</text>
<text x="1648" y="974">&#160;&#160;&#160;&#160;&#160;&#160;&#160;&#160;&#160;&#160;Fz&#160;=&#160;&#160;&#160;&#160;0.60&#160;N</text>
<text x="1648" y="994">&#160;&#160;&#160;&#160;&#160;&#160;&#160;&#160;&#160;&#160;Mx&#160;=&#160;&#160;-32.7&#160;N.m</text>
<text x="1648" y="1014">&#160;&#160;&#160;&#160;&#160;&#160;&#160;&#160;&#160;&#160;My&#160;=&#160;&#160;-32.0&#160;N.m</text>
<text x="1648" y="1034">&#160;&#160;&#160;&#160;&#160;&#160;&#160;&#160;&#160;&#160;Mz&#160;=&#160;&#160;&#160;-0.6&#160;N.m</text>
</g>
</svg>
</div>
<div id="dlg">
<div class="stk" style="left:84px;top:21px;width:72px;transform:rotate(-17deg)"></div>
<div class="stk" style="left:158px;top:1px;width:72px;transform:rotate(17deg)"></div>
<div class="stk" style="left:214px;top:22px;width:74px;transform:rotate(-16deg)"></div>
<div class="stk" style="left:30px;top:16px;width:60px;background:rgba(110,118,135,.35);transform:rotate(-20deg)"></div>
<div id="dlgtitle">Sail7</div>
<div id="dlgclose"><svg width="25" height="24" viewBox="0 0 25 24" style="position:absolute;left:0;top:0"><path d="M6.500 8 L8.700 5.800 L12.750 9.850 L16.800 5.800 L19 8 L14.950 12.050 L19 16.100 L16.800 18.300 L12.750 14.250 L8.700 18.300 L6.500 16.100 L10.550 12.050 Z" fill="#fff" stroke="#1d2530" stroke-width=".8" stroke-linejoin="round"/></svg></div>
<div id="dlgbody">
<div class="grp" style="left:13px;top:21px;height:198px"></div>
<div class="gt" style="left:21px;top:12px">Analysis settings</div>
<div class="cb" style="left:24px;top:42px"><svg width="16" height="16" viewBox="0 0 16 16"><path d="M3.1 8.7 L4.6 7.5 L7.1 10.7 L11.7 2.9 L13 3.500 L7.400 13.500 Z" fill="#2f3f86"/></svg></div><div class="lb" style="left:46px;top:42px">Sequence</div>
<div class="lb" style="left:6px;top:67px;width:55.500px;text-align:right">Start=</div>
<div class="inp" style="left:68px;top:67px">0.000</div>
<div class="lb" style="left:273.5px;top:70.5px;font-size:17px;line-height:17px">°</div>
<div class="lb" style="left:6px;top:96px;width:55.500px;text-align:right">End=</div>
<div class="inp" style="left:68px;top:96px">1.000</div>
<div class="lb" style="left:273.5px;top:99.5px;font-size:17px;line-height:17px">°</div>
<div class="lb" style="left:6px;top:125px;width:55.500px;text-align:right">Δ=</div>
<div class="inp" style="left:68px;top:125px">0.100</div>
<div class="lb" style="left:273.5px;top:128.5px;font-size:17px;line-height:17px">°</div>
<div class="cb" style="left:24px;top:156px"><svg width="16" height="16" viewBox="0 0 16 16"><path d="M3.1 8.7 L4.6 7.5 L7.1 10.7 L11.7 2.9 L13 3.500 L7.400 13.500 Z" fill="#2f3f86"/></svg></div><div class="lb" style="left:46px;top:156px">Store OpPoint</div>
<div class="btn" style="left:25px;top:182px;width:254px">Analyze</div>
<div class="grp" style="left:13px;top:237px;height:221px"></div>
<div class="gt" style="left:21px;top:228px">Results</div>
<div class="cb" style="left:24px;top:268px"><svg width="16" height="16" viewBox="0 0 16 16"><path d="M3.1 8.7 L4.6 7.5 L7.1 10.7 L11.7 2.9 L13 3.500 L7.400 13.500 Z" fill="#2f3f86"/></svg></div><div class="lb" style="left:46px;top:268px">Cp</div>
<div class="cb" style="left:110px;top:268px"></div><div class="lb" style="left:132px;top:268px">Panel Forces</div>
<div class="cb" style="left:24px;top:305px"><svg width="16" height="16" viewBox="0 0 16 16"><path d="M3.1 8.7 L4.6 7.5 L7.1 10.7 L11.7 2.9 L13 3.500 L7.400 13.500 Z" fill="#2f3f86"/></svg></div><div class="lb" style="left:46px;top:305px">Lift</div>
<div class="cb" style="left:110px;top:305px"></div><div class="lb" style="left:132px;top:305px">Moment</div>
<div class="cb" style="left:24px;top:342px"></div><div class="lb" style="left:46px;top:342px">Surf. Vel.</div>
<div class="cb" style="left:110px;top:342px"><svg width="16" height="16" viewBox="0 0 16 16"><path d="M3.1 8.7 L4.6 7.5 L7.1 10.7 L11.7 2.9 L13 3.500 L7.400 13.500 Z" fill="#2f3f86"/></svg></div><div class="lb" style="left:132px;top:342px">Stream</div>
<div class="cb" style="left:24px;top:379px"></div><div class="lb" style="left:46px;top:379px">Water</div>
<div class="cb" style="left:110px;top:379px"><svg width="16" height="16" viewBox="0 0 16 16"><path d="M3.1 8.7 L4.6 7.5 L7.1 10.7 L11.7 2.9 L13 3.500 L7.400 13.500 Z" fill="#2f3f86"/></svg></div><div class="lb" style="left:132px;top:379px">Wind</div>
<div class="cb" style="left:24px;top:418px"></div><div class="lb" style="left:46px;top:418px">Animate</div>
<div class="trk" style="left:110px;top:420px;width:169px"></div>
<svg class="hdl" style="left:190.5px;top:413.5px" viewBox="0 0 10 18"><defs><linearGradient id="gh1" x1="0" y1="0" x2="1" y2="0"><stop offset="0" stop-color="#fbfbfb"/><stop offset="1" stop-color="#d3d3d3"/></linearGradient></defs><path d="M1.500 .5 H8.500 Q9.500 .5 9.500 1.500 V13 L5 17.500 L.5 13 V1.500 Q.5 .5 1.500 .5Z" fill="url(#gh1)" stroke="#8a8d91" stroke-width="1"/></svg>
<div class="tick" style="left:116px;top:433.5px"></div>
<div class="tick" style="left:132px;top:433.5px"></div>
<div class="tick" style="left:148px;top:433.5px"></div>
<div class="tick" style="left:163px;top:433.5px"></div>
<div class="tick" style="left:179px;top:433.5px"></div>
<div class="tick" style="left:195px;top:433.5px"></div>
<div class="tick" style="left:211px;top:433.5px"></div>
<div class="tick" style="left:226px;top:433.5px"></div>
<div class="tick" style="left:242px;top:433.5px"></div>
<div class="tick" style="left:258px;top:433.5px"></div>
<div class="tick" style="left:273px;top:433.5px"></div>
<div class="grp" style="left:13px;top:476px;height:222px"></div>
<div class="gt" style="left:21px;top:467px">Display</div>
<div class="cb" style="left:24px;top:497px"><svg width="16" height="16" viewBox="0 0 16 16"><path d="M3.1 8.7 L4.6 7.5 L7.1 10.7 L11.7 2.9 L13 3.500 L7.400 13.500 Z" fill="#2f3f86"/></svg></div><div class="lb" style="left:46px;top:497px">Axes</div>
<div class="cb" style="left:156px;top:497px"><svg width="16" height="16" viewBox="0 0 16 16"><path d="M3.1 8.7 L4.6 7.5 L7.1 10.7 L11.7 2.9 L13 3.500 L7.400 13.500 Z" fill="#2f3f86"/></svg></div><div class="lb" style="left:178px;top:497px">Panels</div>
<div class="cb" style="left:24px;top:524px"></div><div class="lb" style="left:46px;top:524px">Surfaces</div>
<div class="cb" style="left:156px;top:524px"><svg width="16" height="16" viewBox="0 0 16 16"><path d="M3.1 8.7 L4.6 7.5 L7.1 10.7 L11.7 2.9 L13 3.500 L7.400 13.500 Z" fill="#2f3f86"/></svg></div><div class="lb" style="left:178px;top:524px">Outline</div>
<div class="vb" style="left:40px;top:550px"><svg width="35" height="34" viewBox="1 1 35 34" font-family="Liberation Sans, sans-serif" font-size="11.500" fill="#111"><path d="M15.0 21.2L15.0 5.5M16.8 8.1L15.0 5.5L13.2 8.1M15.0 21.2L30.5 21.2M27.9 23.0L30.5 21.2L27.9 19.4" stroke="#1e8cff" stroke-width="1.300" fill="none"/><text x="20.5" y="10.0" text-anchor="middle">z</text><text x="10.6" y="26.3" text-anchor="middle">x</text><text x="29.2" y="27.8" text-anchor="middle">y</text></svg></div>
<div class="vb" style="left:101px;top:550px"><svg width="35" height="34" viewBox="1 1 35 34" font-family="Liberation Sans, sans-serif" font-size="11.500" fill="#111"><path d="M19.6 21.2L19.6 5.5M21.4 8.1L19.6 5.5L17.8 8.1M19.6 21.2L6.2 21.2M8.8 19.4L6.2 21.2L8.8 23.0" stroke="#1e8cff" stroke-width="1.300" fill="none"/><text x="25.2" y="9.600000000000001" text-anchor="middle">z</text><text x="5.5" y="18.2" text-anchor="middle">x</text><text x="21.6" y="28.4" text-anchor="middle">y</text></svg></div>
<div class="vb" style="left:162px;top:550px"><svg width="35" height="34" viewBox="1 1 35 34" font-family="Liberation Sans, sans-serif" font-size="11.500" fill="#111"><path d="M19.6 21.2L19.6 5.5M21.4 8.1L19.6 5.5L17.8 8.1M19.6 21.2L6.1 21.2M8.7 19.4L6.1 21.2L8.7 23.0" stroke="#1e8cff" stroke-width="1.300" fill="none"/><text x="24.8" y="9.2" text-anchor="middle">x</text><text x="5.4" y="17.4" text-anchor="middle">y</text><text x="23.5" y="25.7" text-anchor="middle">z</text></svg></div>
<div class="vb" style="left:223px;top:550px"><svg width="35" height="34" viewBox="1 1 35 34" font-family="Liberation Sans, sans-serif" font-size="11.500" fill="#111"><path d="M14.9 21.2L14.9 5.5M16.7 8.1L14.9 5.5L13.1 8.1M14.9 21.2L29.6 21.2M27.0 23.0L29.6 21.2L27.0 19.4M14.9 21.2L5.7 30.4M6.3 27.3L5.7 30.4L8.8 29.8" stroke="#1e8cff" stroke-width="1.300" fill="none"/><text x="19.7" y="10.0" text-anchor="middle">z</text><text x="4.4" y="26.7" text-anchor="middle">x</text><text x="28" y="29.0" text-anchor="middle">y</text></svg></div>
<div class="btn" style="left:25px;top:595px;width:123px">Wind Front</div>
<div class="btn" style="left:157px;top:595px;width:122px">Wind Rear</div>
<div class="btn" style="left:25px;top:630px;width:123px">Reset</div>
<div class="btn" style="left:157px;top:630px;width:122px">Pick Center</div>
<div class="lb" style="left:24px;top:667.5px">Clip:</div>
<div class="trk" style="left:57px;top:671px;width:221px"></div>
<svg class="hdl" style="left:268.5px;top:663.5px" viewBox="0 0 10 18"><defs><linearGradient id="gh2" x1="0" y1="0" x2="1" y2="0"><stop offset="0" stop-color="#fbfbfb"/><stop offset="1" stop-color="#d3d3d3"/></linearGradient></defs><path d="M1.500 .5 H8.500 Q9.500 .5 9.500 1.500 V13 L5 17.500 L.5 13 V1.500 Q.5 .5 1.500 .5Z" fill="url(#gh2)" stroke="#8a8d91" stroke-width="1"/></svg>
<div class="tick" style="left:63px;top:683.5px"></div>
<div class="tick" style="left:74px;top:683.5px"></div>
<div class="tick" style="left:84px;top:683.5px"></div>
<div class="tick" style="left:95px;top:683.5px"></div>
<div class="tick" style="left:105px;top:683.5px"></div>
<div class="tick" style="left:116px;top:683.5px"></div>
<div class="tick" style="left:126px;top:683.5px"></div>
<div class="tick" style="left:137px;top:683.5px"></div>
<div class="tick" style="left:147px;top:683.5px"></div>
<div class="tick" style="left:158px;top:683.5px"></div>
<div class="tick" style="left:168px;top:683.5px"></div>
<div class="tick" style="left:179px;top:683.5px"></div>
<div class="tick" style="left:189px;top:683.5px"></div>
<div class="tick" style="left:200px;top:683.5px"></div>
<div class="tick" style="left:210px;top:683.5px"></div>
<div class="tick" style="left:221px;top:683.5px"></div>
<div class="tick" style="left:231px;top:683.5px"></div>
<div class="tick" style="left:242px;top:683.5px"></div>
<div class="tick" style="left:252px;top:683.5px"></div>
<div class="tick" style="left:263px;top:683.5px"></div>
<div class="tick" style="left:273px;top:683.5px"></div>
</div></div>
</body></html>
